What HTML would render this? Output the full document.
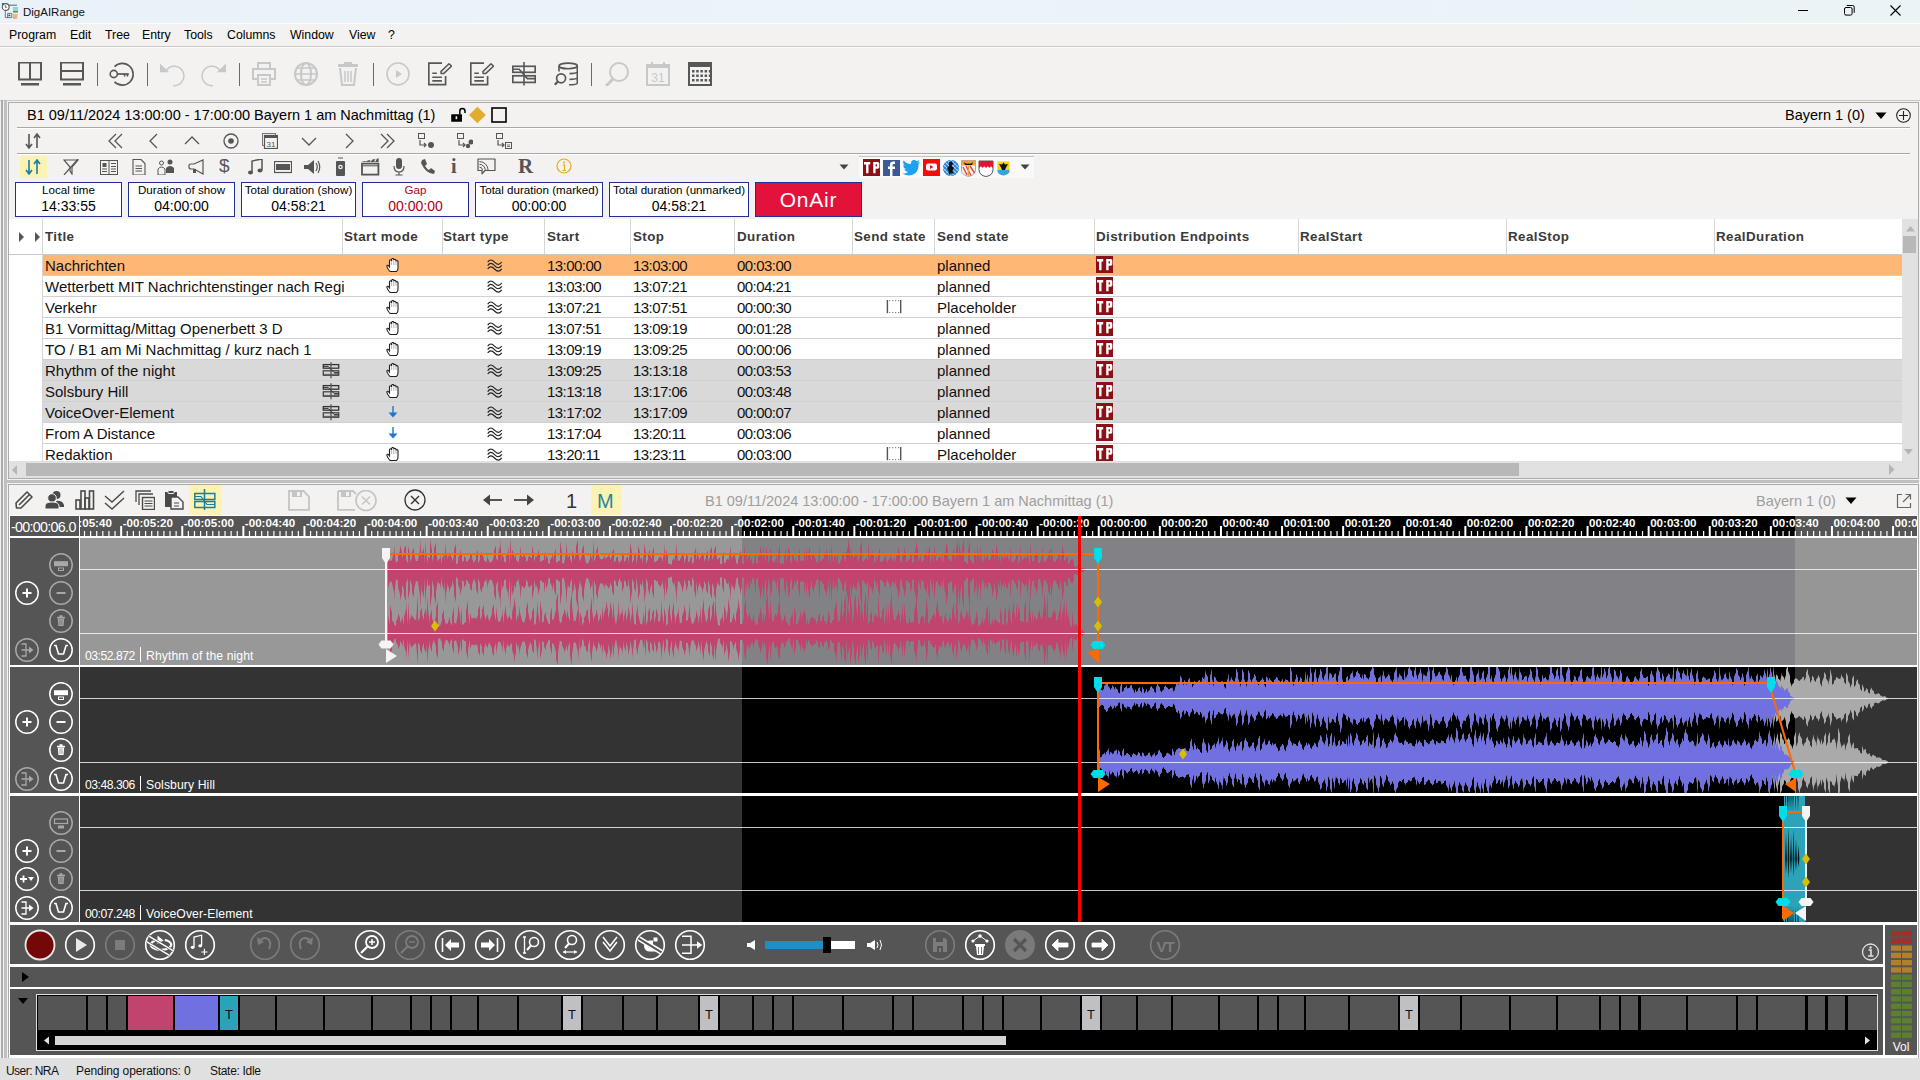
<!DOCTYPE html><html><head><meta charset="utf-8"><style>
html,body{margin:0;padding:0;}
body{width:1920px;height:1080px;position:relative;overflow:hidden;background:#f3f2f1;font-family:"Liberation Sans", sans-serif;}
.a{position:absolute;display:block;}
.t{position:absolute;white-space:nowrap;}
</style></head><body>
<div class="a" style="left:0px;top:0px;width:1920px;height:23px;background:linear-gradient(90deg,#eaf2f9 0%,#ebf3fb 50%,#eaf4f6 100%);"></div>
<div class="a" style="left:0px;top:23px;width:1920px;height:1px;background:#fdfdfd;"></div>
<svg class="a" style="left:0px;top:0px;" width="20" height="22" viewBox="0 0 20 22"><rect x="2" y="3" width="2" height="2" fill="#1a7a80"/><path d="M5.3 9 V17.6 H11.8 V13.4 H7.6 V17.6" fill="none" stroke="#666" stroke-width="0.9"/><circle cx="9.4" cy="15.4" r="0.9" fill="#333"/><path d="M7 5.2 H17" stroke="#555" stroke-width="0.9"/><circle cx="5.7" cy="7" r="3.4" fill="#fff" stroke="#555" stroke-width="1.1"/><path d="M5.3 5 V7.3 H7" fill="none" stroke="#555" stroke-width="0.8"/><rect x="13" y="7" width="5" height="4.2" fill="#8fd8d8"/><rect x="13" y="11.2" width="5" height="1.4" fill="#2a6a70"/><rect x="13" y="12.6" width="5" height="1.3" fill="#f6f0a0"/><rect x="13" y="13.9" width="4.5" height="3.6" fill="#f0b888"/><rect x="13" y="17.5" width="4" height="1" fill="#e08030"/></svg>
<div class="t" style="left:23px;top:6px;font-size:11.5px;line-height:13px;color:#111;font-weight:normal;">DigAIRange</div>
<svg class="a" style="left:1794px;top:4px;" width="20" height="14" viewBox="0 0 20 14"><line x1="4" y1="6.5" x2="14" y2="6.5" stroke="#000" stroke-width="1"/></svg>
<svg class="a" style="left:1840px;top:2px;" width="20" height="16" viewBox="0 0 20 16"><rect x="4.5" y="5.5" width="7.6" height="7.6" rx="1.5" fill="none" stroke="#000"/><path d="M6.8 3.5 H12.6 a1.6 1.6 0 0 1 1.6 1.6 V10.8" fill="none" stroke="#000"/></svg>
<svg class="a" style="left:1886px;top:2.5px;" width="20" height="16" viewBox="0 0 20 16"><path d="M4.5 2.5 L14.5 12.5 M14.5 2.5 L4.5 12.5" stroke="#000" stroke-width="1.1"/></svg>
<div class="a" style="left:0px;top:24px;width:1920px;height:22px;background:#f3f2f1;"></div>
<div class="a" style="left:0px;top:46px;width:1920px;height:1px;background:#c9c9c9;"></div>
<div class="a" style="left:0px;top:47px;width:1920px;height:1px;background:#fdfdfd;"></div>
<div class="t" style="left:9px;top:28px;font-size:12.3px;line-height:14px;color:#000;font-weight:normal;">Program</div>
<div class="t" style="left:70px;top:28px;font-size:12.3px;line-height:14px;color:#000;font-weight:normal;">Edit</div>
<div class="t" style="left:105px;top:28px;font-size:12.3px;line-height:14px;color:#000;font-weight:normal;">Tree</div>
<div class="t" style="left:142px;top:28px;font-size:12.3px;line-height:14px;color:#000;font-weight:normal;">Entry</div>
<div class="t" style="left:184px;top:28px;font-size:12.3px;line-height:14px;color:#000;font-weight:normal;">Tools</div>
<div class="t" style="left:227px;top:28px;font-size:12.3px;line-height:14px;color:#000;font-weight:normal;">Columns</div>
<div class="t" style="left:290px;top:28px;font-size:12.3px;line-height:14px;color:#000;font-weight:normal;">Window</div>
<div class="t" style="left:349px;top:28px;font-size:12.3px;line-height:14px;color:#000;font-weight:normal;">View</div>
<div class="t" style="left:388px;top:28px;font-size:12.3px;line-height:14px;color:#000;font-weight:normal;">?</div>
<svg class="a" style="left:18px;top:62px;" width="24" height="24" viewBox="0 0 24 24"><rect x="1" y="0.5" width="22" height="17" fill="none" stroke="#575757" stroke-width="2"/><line x1="12" y1="1" x2="12" y2="17" stroke="#575757" stroke-width="2"/><rect x="3" y="21" width="18" height="2.5" fill="#575757"/></svg>
<svg class="a" style="left:60px;top:62px;" width="24" height="24" viewBox="0 0 24 24"><rect x="1" y="0.5" width="22" height="17" fill="none" stroke="#575757" stroke-width="2"/><line x1="1" y1="9" x2="23" y2="9" stroke="#575757" stroke-width="2"/><rect x="3" y="21" width="18" height="2.5" fill="#575757"/></svg>
<div class="a" style="left:97px;top:63px;width:1px;height:23px;background:#6a6a6a;"></div>
<svg class="a" style="left:108px;top:60px;" width="28" height="28" viewBox="0 0 28 28"><path d="M6.5 6.6 A10.9 10.9 0 1 1 6.5 21.9" fill="none" stroke="#575757" stroke-width="1.6"/><circle cx="5.8" cy="14" r="3.6" fill="none" stroke="#575757" stroke-width="1.6"/><path d="M9.4 14 H20.8" stroke="#575757" stroke-width="1.7"/><rect x="15.8" y="14" width="1.6" height="2.5" fill="#575757"/><rect x="18.6" y="14" width="1.6" height="2.5" fill="#575757"/></svg>
<div class="a" style="left:147px;top:63px;width:1px;height:23px;background:#6a6a6a;"></div>
<svg class="a" style="left:158px;top:60px;" width="28" height="28" viewBox="0 0 28 28"><path d="M8.5 10 A9.7 9.7 0 1 1 15.2 25.6" fill="none" stroke="#c8c8c8" stroke-width="1.5"/><path d="M2 3.5 L2 12.2 L11.2 12.2 Z" fill="#c8c8c8"/></svg>
<svg class="a" style="left:200px;top:60px;" width="28" height="28" viewBox="0 0 28 28"><path d="M19.5 10 A9.7 9.7 0 1 0 12.8 25.6" fill="none" stroke="#c8c8c8" stroke-width="1.5"/><path d="M26 3.5 L26 12.2 L16.8 12.2 Z" fill="#c8c8c8"/></svg>
<div class="a" style="left:239px;top:63px;width:1px;height:23px;background:#6a6a6a;"></div>
<svg class="a" style="left:252px;top:62px;" width="24" height="24" viewBox="0 0 24 24"><rect x="6" y="1" width="12" height="6" fill="none" stroke="#c8c8c8" stroke-width="2"/><rect x="1" y="7" width="22" height="10" fill="none" stroke="#c8c8c8" stroke-width="2"/><rect x="6" y="13" width="12" height="10" fill="#f3f2f1" stroke="#c8c8c8" stroke-width="2"/><path d="M9 17 H15 M9 20 H15" stroke="#c8c8c8" stroke-width="1.5"/></svg>
<svg class="a" style="left:294px;top:62px;" width="24" height="24" viewBox="0 0 24 24"><circle cx="12" cy="12" r="11" fill="none" stroke="#c8c8c8" stroke-width="2"/><ellipse cx="12" cy="12" rx="5" ry="11" fill="none" stroke="#c8c8c8" stroke-width="2"/><path d="M1 12 H23 M3 6 H21 M3 18 H21" stroke="#c8c8c8" stroke-width="1.6"/></svg>
<svg class="a" style="left:336px;top:62px;" width="24" height="24" viewBox="0 0 24 24"><rect x="8" y="0" width="8" height="2" fill="#c8c8c8"/><rect x="2" y="2" width="20" height="3" fill="#c8c8c8"/><path d="M4 6 L6 23 H18 L20 6" fill="none" stroke="#c8c8c8" stroke-width="2"/><path d="M9 9 V20 M12 9 V20 M15 9 V20" stroke="#c8c8c8" stroke-width="1.5"/></svg>
<div class="a" style="left:373px;top:63px;width:1px;height:23px;background:#6a6a6a;"></div>
<svg class="a" style="left:386px;top:62px;" width="24" height="24" viewBox="0 0 24 24"><circle cx="12" cy="12" r="11" fill="none" stroke="#c8c8c8" stroke-width="1.6"/><path d="M10 8 L16 12 L10 16 Z" fill="#c8c8c8"/></svg>
<svg class="a" style="left:428px;top:62px;" width="24" height="24" viewBox="0 0 24 24"><path d="M14 1.2 H0.8 V22.6 H17.6 V14" fill="none" stroke="#575757" stroke-width="1.7"/><path d="M4.3 11.3 H8.9 M4.3 15.3 H13.9 M4.3 18.9 H13.9" stroke="#575757" stroke-width="1.6"/><path d="M13.1 11.4 L12.9 9.6 L21 1.8 L23.6 4.1 L15.6 11.6 Z" fill="none" stroke="#575757" stroke-width="1.5" stroke-linejoin="round"/></svg>
<svg class="a" style="left:470px;top:62px;" width="24" height="24" viewBox="0 0 24 24"><path d="M14 1.2 H0.8 V22.6 H17.6 V14" fill="none" stroke="#575757" stroke-width="1.7"/><path d="M4.3 11.3 H8.9 M4.3 15.3 H13.9 M4.3 18.9 H13.9" stroke="#575757" stroke-width="1.6"/><path d="M13.1 11.4 L12.9 9.6 L21 1.8 L23.6 4.1 L15.6 11.6 Z" fill="none" stroke="#575757" stroke-width="1.5" stroke-linejoin="round"/></svg>
<svg class="a" style="left:512px;top:62px;" width="24" height="24" viewBox="0 0 24 24"><rect x="0.8" y="4.3" width="22.4" height="6" fill="none" stroke="#575757" stroke-width="1.7"/><rect x="0.8" y="13.8" width="22.4" height="6.6" fill="none" stroke="#575757" stroke-width="1.7"/><line x1="12" y1="0" x2="12" y2="23.5" stroke="#575757" stroke-width="1.6"/><path d="M1 7.3 H7.2 L15.3 16.6 H23" fill="none" stroke="#575757" stroke-width="1.6"/></svg>
<svg class="a" style="left:554px;top:62px;" width="24" height="24" viewBox="0 0 24 24"><ellipse cx="14.2" cy="3.9" rx="9.2" ry="2.8" fill="none" stroke="#575757" stroke-width="1.6"/><path d="M5 3.9 V9.5 M23.3 3.9 V21 Q23.3 22.8 15 22.8 M23.3 9.8 Q23.3 11.4 15.5 11.6 M23.3 15.5 Q23.3 17.2 15.5 17.4" fill="none" stroke="#575757" stroke-width="1.6"/><circle cx="7.1" cy="16.3" r="4.5" fill="none" stroke="#575757" stroke-width="1.7"/><path d="M3.8 19.6 L0.8 22.8" stroke="#575757" stroke-width="2.2"/></svg>
<div class="a" style="left:591px;top:63px;width:1px;height:23px;background:#6a6a6a;"></div>
<svg class="a" style="left:605px;top:62px;" width="24" height="24" viewBox="0 0 24 24"><circle cx="14" cy="10" r="9" fill="none" stroke="#c8c8c8" stroke-width="2"/><path d="M8 17 L1 24" stroke="#c8c8c8" stroke-width="3"/></svg>
<svg class="a" style="left:646px;top:62px;" width="24" height="24" viewBox="0 0 24 24"><rect x="1" y="3" width="22" height="20" fill="none" stroke="#c8c8c8" stroke-width="2"/><rect x="1" y="3" width="22" height="3" fill="#c8c8c8"/><path d="M6 0 V4 M18 0 V4" stroke="#c8c8c8" stroke-width="2"/><text x="12" y="20" font-size="12" text-anchor="middle" fill="#c8c8c8" font-family="Liberation Sans">31</text></svg>
<svg class="a" style="left:688px;top:62px;" width="24" height="24" viewBox="0 0 24 24"><rect x="1" y="1" width="22" height="22" fill="none" stroke="#575757" stroke-width="2"/><rect x="1" y="1" width="22" height="4" fill="#575757"/><rect x="4.0" y="8.0" width="2.5" height="2.5" fill="#575757"/><rect x="4.0" y="12.5" width="2.5" height="2.5" fill="#575757"/><rect x="4.0" y="17.0" width="2.5" height="2.5" fill="#575757"/><rect x="8.2" y="8.0" width="2.5" height="2.5" fill="#575757"/><rect x="8.2" y="12.5" width="2.5" height="2.5" fill="#575757"/><rect x="8.2" y="17.0" width="2.5" height="2.5" fill="#575757"/><rect x="12.4" y="8.0" width="2.5" height="2.5" fill="#575757"/><rect x="12.4" y="12.5" width="2.5" height="2.5" fill="#575757"/><rect x="12.4" y="17.0" width="2.5" height="2.5" fill="#575757"/><rect x="16.6" y="8.0" width="2.5" height="2.5" fill="#575757"/><rect x="16.6" y="12.5" width="2.5" height="2.5" fill="#575757"/><rect x="16.6" y="17.0" width="2.5" height="2.5" fill="#575757"/><rect x="20.8" y="8.0" width="2.5" height="2.5" fill="#575757"/><rect x="20.8" y="12.5" width="2.5" height="2.5" fill="#575757"/><rect x="20.8" y="17.0" width="2.5" height="2.5" fill="#575757"/></svg>
<div class="a" style="left:0px;top:100px;width:1920px;height:1px;background:#c6c6c6;"></div>
<div class="a" style="left:1px;top:100px;width:2px;height:958px;background:#ababab;"></div>
<div class="a" style="left:4px;top:100px;width:3px;height:958px;background:#c0c0c0;"></div>
<div class="a" style="left:8px;top:102px;width:1911px;height:377px;background:#f3f2f1;border:1px solid #ababab;box-sizing:border-box;"></div>
<div class="t" style="left:27px;top:107px;font-size:14.5px;line-height:17px;color:#000;font-weight:normal;">B1 09/11/2024 13:00:00 - 17:00:00 Bayern 1 am Nachmittag (1)</div>
<svg class="a" style="left:450px;top:106px;" width="16" height="17" viewBox="0 0 16 17"><rect x="1.2" y="8.2" width="10.8" height="7.6" rx="0.6" fill="#000"/><rect x="5.6" y="10.2" width="1.6" height="3" fill="#f3f2f1"/><path d="M9.8 8.5 V5.2 a2.6 2.6 0 0 1 5.2 0 V7" fill="none" stroke="#000" stroke-width="1.5"/></svg>
<svg class="a" style="left:468px;top:106px;" width="19" height="19" viewBox="0 0 19 19"><path d="M9.4 0.8 L17.8 9 L9.4 17.2 L1 9 Z" fill="#e0ad2c"/></svg>
<svg class="a" style="left:491px;top:107px;" width="16" height="16" viewBox="0 0 16 16"><rect x="1" y="1" width="14" height="14" fill="none" stroke="#000" stroke-width="1.6"/></svg>
<div class="t" style="left:1785px;top:107px;font-size:14.5px;line-height:17px;color:#000;font-weight:normal;">Bayern 1 (0)</div>
<svg class="a" style="left:1875px;top:112px;" width="12" height="8" viewBox="0 0 12 8"><path d="M0.5 0.5 L11.5 0.5 L6 7 Z" fill="#000"/></svg>
<svg class="a" style="left:1896px;top:108px;" width="15" height="15" viewBox="0 0 15 15"><circle cx="7.5" cy="7.5" r="6.8" fill="none" stroke="#222" stroke-width="1.1"/><path d="M7.5 3 V12 M3 7.5 H12" stroke="#222" stroke-width="1.1"/></svg>
<div class="a" style="left:17px;top:127px;width:1893px;height:1px;background:#a8a8a8;"></div>
<div class="a" style="left:17px;top:128px;width:1893px;height:1px;background:#ffffff;"></div>
<svg class="a" style="left:25px;top:133px;" width="16" height="16" viewBox="0 0 16 16"><path d="M4 1 V14 M1 11 L4 15 L7 11" fill="none" stroke="#555" stroke-width="1.6"/><path d="M12 15 V2 M9 5 L12 1 L15 5" fill="none" stroke="#555" stroke-width="1.6"/></svg>
<svg class="a" style="left:107px;top:133px;" width="16" height="16" viewBox="0 0 16 16"><path d="M9 1 L2 8 L9 15 M15 1 L8 8 L15 15" fill="none" stroke="#555" stroke-width="1.3"/></svg>
<svg class="a" style="left:147px;top:133px;" width="16" height="16" viewBox="0 0 16 16"><path d="M10 1 L3 8 L10 15" fill="none" stroke="#555" stroke-width="1.3"/></svg>
<svg class="a" style="left:184px;top:133px;" width="16" height="16" viewBox="0 0 16 16"><path d="M1 11 L8 4 L15 11" fill="none" stroke="#555" stroke-width="1.3"/></svg>
<svg class="a" style="left:223px;top:133px;" width="16" height="16" viewBox="0 0 16 16"><circle cx="8" cy="8" r="7" fill="none" stroke="#555" stroke-width="1.3"/><circle cx="8" cy="8" r="2.8" fill="#555"/></svg>
<svg class="a" style="left:262px;top:133px;" width="16" height="16" viewBox="0 0 16 16"><rect x="0.5" y="0.5" width="13" height="12" fill="none" stroke="#777" stroke-width="1"/><rect x="2.5" y="2.5" width="13" height="13" fill="#f3f2f1" stroke="#555" stroke-width="1.2"/><rect x="2.5" y="2.5" width="13" height="2.5" fill="#555"/><text x="9" y="14" font-size="8" text-anchor="middle" fill="#555" font-family="Liberation Sans">31</text></svg>
<svg class="a" style="left:301px;top:133px;" width="16" height="16" viewBox="0 0 16 16"><path d="M1 5 L8 12 L15 5" fill="none" stroke="#555" stroke-width="1.3"/></svg>
<svg class="a" style="left:342px;top:133px;" width="16" height="16" viewBox="0 0 16 16"><path d="M4 1 L11 8 L4 15" fill="none" stroke="#555" stroke-width="1.3"/></svg>
<svg class="a" style="left:380px;top:133px;" width="16" height="16" viewBox="0 0 16 16"><path d="M1 1 L8 8 L1 15 M7 1 L14 8 L7 15" fill="none" stroke="#555" stroke-width="1.3"/></svg>
<svg class="a" style="left:418px;top:133px;" width="16" height="16" viewBox="0 0 16 16"><rect x="0.5" y="0.5" width="6" height="5" fill="none" stroke="#555"/><path d="M2 7 V12 H8 M6 10 L8 12 L6 14" fill="none" stroke="#555" stroke-width="1.2"/><circle cx="13" cy="12" r="3" fill="#555"/></svg>
<svg class="a" style="left:457px;top:133px;" width="16" height="16" viewBox="0 0 16 16"><rect x="0.5" y="0.5" width="6" height="5" fill="none" stroke="#555"/><path d="M2 7 V12 H8 M6 10 L8 12 L6 14" fill="none" stroke="#555" stroke-width="1.2"/><circle cx="14" cy="9" r="2.5" fill="#555"/><circle cx="11" cy="13" r="2.2" fill="#555"/></svg>
<svg class="a" style="left:496px;top:133px;" width="16" height="16" viewBox="0 0 16 16"><rect x="0.5" y="0.5" width="6" height="5" fill="none" stroke="#555"/><path d="M2 7 V12 H8 M6 10 L8 12 L6 14" fill="none" stroke="#555" stroke-width="1.2"/><rect x="9.5" y="9.5" width="6" height="6" fill="none" stroke="#555"/><path d="M11 12 H14 M11 13.5 H14" stroke="#555" stroke-width="0.8"/></svg>
<div class="a" style="left:17px;top:153px;width:1893px;height:1px;background:#a8a8a8;"></div>
<div class="a" style="left:17px;top:154px;width:1893px;height:1px;background:#ffffff;"></div>
<div class="a" style="left:20px;top:156px;width:27px;height:22px;background:#fbf2b4;"></div>
<svg class="a" style="left:25px;top:159px;" width="16" height="16" viewBox="0 0 16 16"><path d="M4 1 V14 M1 11 L4 15 L7 11" fill="none" stroke="#1b7f9c" stroke-width="1.6"/><path d="M12 15 V2 M9 5 L12 1 L15 5" fill="none" stroke="#1b7f9c" stroke-width="1.6"/></svg>
<svg class="a" style="left:63px;top:159px;" width="16" height="16" viewBox="0 0 16 16"><path d="M1 1 H15 L9 8 V15 L7 12 V8 Z" fill="none" stroke="#555" stroke-width="1.2"/><path d="M1 16 L15 0" stroke="#555" stroke-width="1.2"/></svg>
<svg class="a" style="left:100px;top:160px;" width="18" height="16" viewBox="0 0 18 16"><rect x="0.5" y="0.5" width="17" height="14" fill="none" stroke="#555"/><path d="M9 1 V14" stroke="#555"/><rect x="2.5" y="3" width="4" height="4" fill="#555"/><path d="M2 9 H7 M2 11.5 H7 M11 3.5 H16 M11 6.5 H16 M11 9 H16 M11 11.5 H16" stroke="#555" stroke-width="1"/></svg>
<svg class="a" style="left:132px;top:159px;" width="16" height="16" viewBox="0 0 16 16"><path d="M1 0.5 H9 L13 4.5 V16 H1 Z" fill="none" stroke="#555" stroke-width="1.1"/><path d="M3.5 7 H10 M3.5 9.5 H10 M3.5 12 H10" stroke="#555"/></svg>
<svg class="a" style="left:157px;top:159px;" width="18" height="16" viewBox="0 0 18 16"><circle cx="4.5" cy="4" r="2" fill="none" stroke="#555"/><path d="M1 16 V10 Q4.5 6 8 10 V16 Z" fill="none" stroke="#555"/><circle cx="13" cy="3" r="2.5" fill="#555"/><path d="M9 14 V9 Q13 5 17 9 V14 Z" fill="#555"/></svg>
<svg class="a" style="left:188px;top:159px;" width="16" height="16" viewBox="0 0 16 16"><path d="M15 1 V15 L6 10 H3 Q1 10 1 8 V7 Q1 5 3 5 H6 Z" fill="none" stroke="#555" stroke-width="1.2"/><rect x="5" y="10" width="3" height="4" fill="#555"/></svg>
<div class="t" style="left:219px;top:155px;font-size:19px;line-height:22px;color:#555;font-weight:normal;">$</div>
<svg class="a" style="left:247px;top:159px;" width="16" height="16" viewBox="0 0 16 16"><path d="M5 13 V2 L15 0 V11" fill="none" stroke="#555" stroke-width="1.5"/><ellipse cx="3.5" cy="13.5" rx="2.5" ry="2" fill="#555"/><ellipse cx="13" cy="11.5" rx="2.5" ry="2" fill="#555"/></svg>
<svg class="a" style="left:274px;top:161px;" width="18" height="16" viewBox="0 0 18 16"><rect x="0.5" y="0.5" width="17" height="11" fill="none" stroke="#555" stroke-width="1.2"/><rect x="2" y="3" width="14" height="6" fill="#555"/></svg>
<svg class="a" style="left:303px;top:159px;" width="18" height="16" viewBox="0 0 18 16"><path d="M1 6 H5 L11 1 V15 L5 10 H1 Z" fill="#555"/><path d="M13 4 Q15.5 8 13 12 M15 2 Q18.5 8 15 14" fill="none" stroke="#555" stroke-width="1.2"/></svg>
<svg class="a" style="left:335px;top:157px;" width="12" height="20" viewBox="0 0 12 20"><path d="M3 1 H8" stroke="#555"/><rect x="1" y="4" width="9" height="15" rx="1" fill="#555"/><circle cx="5.5" cy="10" r="2.3" fill="#f3f2f1"/><circle cx="5.5" cy="10" r="1" fill="#555"/></svg>
<svg class="a" style="left:361px;top:157px;" width="19" height="19" viewBox="0 0 19 19"><path d="M0.8 4.8 L17.6 1.2 V5 H0.8 Z" fill="#555"/><path d="M4 4.5 L6 2.3 L7.5 2 L5.5 4.5 Z M8.5 4.5 L10.5 1.6 L12 1.3 L10 4.5 Z M13 4.5 L15 0.9 L16.2 0.7 L14.5 4.5 Z" fill="#f3f2f1"/><rect x="1" y="6.6" width="16.4" height="11" fill="none" stroke="#555" stroke-width="1.8"/><path d="M1 8.8 H17.4" stroke="#555" stroke-width="1"/></svg>
<svg class="a" style="left:393px;top:158px;" width="12" height="18" viewBox="0 0 12 18"><rect x="3" y="0" width="6" height="11" rx="3" fill="#555"/><path d="M1 8 Q1 14 6 14 Q11 14 11 8 M6 14 V17 M2.5 17 H9.5" fill="none" stroke="#555" stroke-width="1.2"/></svg>
<svg class="a" style="left:420px;top:159px;" width="16" height="16" viewBox="0 0 16 16"><path d="M2 1 L5 0 L7 5 L5 7 Q7 10 9 11 L11 9 L15 12 L14 15 Q6 15 1 4 Z" fill="#555"/></svg>
<div class="t" style="left:451px;top:155px;font-size:20px;line-height:22px;color:#555;font-weight:bold;font-family:'Liberation Serif',serif;">i</div>
<svg class="a" style="left:477px;top:158px;" width="19" height="17" viewBox="0 0 19 17"><path d="M1 1 H18 V12.5 H8 L5 15.8 V12.5 H1 Z" fill="none" stroke="#555" stroke-width="1.2" stroke-linejoin="round"/><path d="M2.5 9.2 A3 3 0 0 1 5.5 12.2 M2.5 6.4 A5.8 5.8 0 0 1 8.3 12.2 M2.5 3.6 A8.6 8.6 0 0 1 11.1 12.2" fill="none" stroke="#555" stroke-width="1"/></svg>
<div class="t" style="left:518px;top:155px;font-size:21px;line-height:22px;color:#555;font-weight:bold;font-family:'Liberation Serif',serif;">R</div>
<svg class="a" style="left:556px;top:158px;" width="16" height="16" viewBox="0 0 16 16"><circle cx="8" cy="8" r="7" fill="none" stroke="#e8a820" stroke-width="1.2"/><circle cx="8" cy="4.5" r="1" fill="#e8a820"/><path d="M6.5 7 H8.5 V12.5 M6.5 12.5 H10" fill="none" stroke="#e8a820" stroke-width="1.2"/></svg>
<svg class="a" style="left:839px;top:164px;" width="10" height="6" viewBox="0 0 10 6"><path d="M0.5 0.5 H9.5 L5 5.5 Z" fill="#444"/></svg>
<div class="a" style="left:859px;top:156px;width:175px;height:22px;background:#f9f9f9;"></div>
<div class="a" style="left:859px;top:156px;width:175px;height:1px;background:#c4c4c4;"></div>
<svg class="a" style="left:863px;top:159px;" width="17" height="17" viewBox="0 0 17 17"><rect width="17" height="17" fill="#8c1116"/><path d="M1 3 H7.2 V5.5 H5.5 V14.2 H3.1 V5.5 H1 Z" fill="#fff"/><path d="M10.2 3 H15.2 L16.3 4.3 V8.6 L15.2 9.8 H12.6 V14.2 H10.2 Z M12.6 5.3 V7.6 H13.9 V5.3 Z" fill="#fff" fill-rule="evenodd"/></svg>
<svg class="a" style="left:883px;top:160px;" width="17" height="16" viewBox="0 0 17 16"><rect width="17" height="16" fill="#3b5998"/><path d="M9.5 16 V9 H12 V6.5 H9.5 V5 Q9.5 4 11 4 H12 V1.5 H10 Q7 1.5 7 4.5 V6.5 H5 V9 H7 V16 Z" fill="#fff"/></svg>
<svg class="a" style="left:902px;top:159px;" width="19" height="17" viewBox="0 0 19 17"><path d="M18 3 Q16.5 3.8 15.5 3.8 Q17 2.5 17.3 1 Q15.7 2 14.6 2 Q13 0.5 11 1 Q8.5 2 9 5 Q5 5 1.5 1.5 Q0.5 4 2.5 6.5 Q1.8 6.5 1 6 Q1.3 9 4 10 Q3 10.3 2.2 10 Q3 12.5 6 13 Q3.5 15 0.5 14.5 Q7 18.5 13 14.5 Q17 11 16.5 5 Q17.5 4.2 18 3 Z" fill="#1da1f2"/></svg>
<svg class="a" style="left:923px;top:159px;" width="17" height="17" viewBox="0 0 17 17"><rect width="17" height="17" fill="#f80a0a"/><rect x="3" y="4.5" width="11" height="7" rx="2" fill="#fff"/><path d="M7 6 L10.5 8 L7 10 Z" fill="#e01a1a"/></svg>
<svg class="a" style="left:942px;top:159px;" width="18" height="18" viewBox="0 0 18 18"><defs><clipPath id="bv"><circle cx="9" cy="9" r="8"/></clipPath></defs><g clip-path="url(#bv)"><rect width="18" height="18" fill="#e8f2fa"/><path d="M-10 0 L8 18" stroke="#2a86e0" stroke-width="1.6"/><path d="M8 0 L-10 18" stroke="#2a86e0" stroke-width="1.2"/><path d="M-6 0 L12 18" stroke="#2a86e0" stroke-width="1.6"/><path d="M12 0 L-6 18" stroke="#2a86e0" stroke-width="1.2"/><path d="M-2 0 L16 18" stroke="#2a86e0" stroke-width="1.6"/><path d="M16 0 L-2 18" stroke="#2a86e0" stroke-width="1.2"/><path d="M2 0 L20 18" stroke="#2a86e0" stroke-width="1.6"/><path d="M20 0 L2 18" stroke="#2a86e0" stroke-width="1.2"/><path d="M6 0 L24 18" stroke="#2a86e0" stroke-width="1.6"/><path d="M24 0 L6 18" stroke="#2a86e0" stroke-width="1.2"/><path d="M10 0 L28 18" stroke="#2a86e0" stroke-width="1.6"/><path d="M28 0 L10 18" stroke="#2a86e0" stroke-width="1.2"/><path d="M14 0 L32 18" stroke="#2a86e0" stroke-width="1.6"/><path d="M32 0 L14 18" stroke="#2a86e0" stroke-width="1.2"/><path d="M18 0 L36 18" stroke="#2a86e0" stroke-width="1.6"/><path d="M36 0 L18 18" stroke="#2a86e0" stroke-width="1.2"/></g><path d="M7 3 L10 2.5 L11 5 L9.5 7 L12 9 L10.5 12 L12 15 L9 14 L7 16 L6.5 12 L5 9 L7 7 Z" fill="#111"/></svg>
<svg class="a" style="left:961px;top:160px;" width="15" height="17" viewBox="0 0 15 17"><path d="M0.5 0.5 H14.5 V10 Q14.5 15 7.5 16.5 Q0.5 15 0.5 10 Z" fill="#f4f4f4" stroke="#777" stroke-width="0.6"/><path d="M0.5 0.5 H14.5 V5.5 H0.5 Z" fill="#e8a23c"/><path d="M3 2 Q5 4.5 7.5 3.5 Q10 4.5 12 2 L11 5 H4 Z" fill="#111"/><path d="M2 7 L6 15 M5 6 L10 15.5 M9 6 L13.5 13" stroke="#e24a3a" stroke-width="1.5"/><path d="M7.5 5.5 V16" stroke="#e8a23c" stroke-width="1.6"/></svg>
<svg class="a" style="left:978px;top:160px;" width="16" height="17" viewBox="0 0 16 17"><path d="M1 1 H15 V9.5 Q15 15.5 8 16.5 Q1 15.5 1 9.5 Z" fill="#fff" stroke="#444" stroke-width="0.9"/><path d="M1 1 H15 V8 L13 6.2 L11.5 8 L9.8 6.2 L8 8 L6.2 6.2 L4.5 8 L3 6.2 L1 8 Z" fill="#de1634"/></svg>
<svg class="a" style="left:997px;top:161px;" width="13" height="15" viewBox="0 0 13 15"><path d="M0.5 0.5 H12.5 V9.5 Q12.5 13.5 6.5 14.5 Q0.5 13.5 0.5 9.5 Z" fill="#f2d21a"/><path d="M0.5 9 H12.5 V9.5 Q12.5 13.5 6.5 14.5 Q0.5 13.5 0.5 9.5 Z" fill="#3aa0e0"/><path d="M6.5 1.5 L8 3.5 L11 3 L9 6.5 L8 9 H5 L4 6.5 L2 3 L5 3.5 Z" fill="#111"/></svg>
<svg class="a" style="left:1020px;top:164px;" width="10" height="6" viewBox="0 0 10 6"><path d="M0.5 0.5 H9.5 L5 5.5 Z" fill="#444"/></svg>
<div class="a" style="left:15px;top:182px;width:107px;height:35px;background:#ffffff;border:1px solid #1f2f96;box-sizing:border-box;"></div>
<div class="t" style="left:15px;top:183px;width:107px;text-align:center;font-size:11.6px;line-height:13px;color:#000;">Local time</div>
<div class="t" style="left:15px;top:198px;width:107px;text-align:center;font-size:14px;line-height:16px;color:#000;">14:33:55</div>
<div class="a" style="left:128px;top:182px;width:107px;height:35px;background:#ffffff;border:1px solid #1f2f96;box-sizing:border-box;"></div>
<div class="t" style="left:128px;top:183px;width:107px;text-align:center;font-size:11.6px;line-height:13px;color:#000;">Duration of show</div>
<div class="t" style="left:128px;top:198px;width:107px;text-align:center;font-size:14px;line-height:16px;color:#000;">04:00:00</div>
<div class="a" style="left:241px;top:182px;width:115px;height:35px;background:#ffffff;border:1px solid #1f2f96;box-sizing:border-box;"></div>
<div class="t" style="left:241px;top:183px;width:115px;text-align:center;font-size:11.6px;line-height:13px;color:#000;">Total duration (show)</div>
<div class="t" style="left:241px;top:198px;width:115px;text-align:center;font-size:14px;line-height:16px;color:#000;">04:58:21</div>
<div class="a" style="left:362px;top:182px;width:107px;height:35px;background:#ffffff;border:1px solid #1f2f96;box-sizing:border-box;"></div>
<div class="t" style="left:362px;top:183px;width:107px;text-align:center;font-size:11.6px;line-height:13px;color:#b00020;">Gap</div>
<div class="t" style="left:362px;top:198px;width:107px;text-align:center;font-size:14px;line-height:16px;color:#b00020;">00:00:00</div>
<div class="a" style="left:475px;top:182px;width:128px;height:35px;background:#ffffff;border:1px solid #1f2f96;box-sizing:border-box;"></div>
<div class="t" style="left:475px;top:183px;width:128px;text-align:center;font-size:11.6px;line-height:13px;color:#000;">Total duration (marked)</div>
<div class="t" style="left:475px;top:198px;width:128px;text-align:center;font-size:14px;line-height:16px;color:#000;">00:00:00</div>
<div class="a" style="left:609px;top:182px;width:140px;height:35px;background:#ffffff;border:1px solid #1f2f96;box-sizing:border-box;"></div>
<div class="t" style="left:609px;top:183px;width:140px;text-align:center;font-size:11.6px;line-height:13px;color:#000;">Total duration (unmarked)</div>
<div class="t" style="left:609px;top:198px;width:140px;text-align:center;font-size:14px;line-height:16px;color:#000;">04:58:21</div>
<div class="a" style="left:755px;top:182px;width:107px;height:35px;background:#e3123a;border:1px solid #1f2f96;box-sizing:border-box;"></div>
<div class="t" style="left:755px;top:187px;width:107px;text-align:center;font-size:21px;line-height:25px;color:#fff;letter-spacing:0.8px;">OnAir</div>
<div class="a" style="left:9px;top:219px;width:1893px;height:242px;background:#ffffff;"></div>
<div class="a" style="left:9px;top:254px;width:1893px;height:1px;background:#c8c8c8;"></div>
<div class="a" style="left:42px;top:219px;width:1px;height:35px;background:#d6d6d6;"></div>
<div class="a" style="left:342px;top:219px;width:1px;height:35px;background:#d6d6d6;"></div>
<div class="a" style="left:442px;top:219px;width:1px;height:35px;background:#d6d6d6;"></div>
<div class="a" style="left:544px;top:219px;width:1px;height:35px;background:#d6d6d6;"></div>
<div class="a" style="left:630px;top:219px;width:1px;height:35px;background:#d6d6d6;"></div>
<div class="a" style="left:734px;top:219px;width:1px;height:35px;background:#d6d6d6;"></div>
<div class="a" style="left:852px;top:219px;width:1px;height:35px;background:#d6d6d6;"></div>
<div class="a" style="left:934px;top:219px;width:1px;height:35px;background:#d6d6d6;"></div>
<div class="a" style="left:1094px;top:219px;width:1px;height:35px;background:#d6d6d6;"></div>
<div class="a" style="left:1298px;top:219px;width:1px;height:35px;background:#d6d6d6;"></div>
<div class="a" style="left:1506px;top:219px;width:1px;height:35px;background:#d6d6d6;"></div>
<div class="a" style="left:1714px;top:219px;width:1px;height:35px;background:#d6d6d6;"></div>
<div class="a" style="left:42px;top:254px;width:1px;height:207px;background:#d6d6d6;"></div>
<svg class="a" style="left:19px;top:232px;" width="6" height="10" viewBox="0 0 6 10"><path d="M0 0 L5 5 L0 10 Z" fill="#555"/></svg>
<svg class="a" style="left:35px;top:232px;" width="6" height="10" viewBox="0 0 6 10"><path d="M0 0 L5 5 L0 10 Z" fill="#555"/></svg>
<div class="t" style="left:45px;top:229px;font-size:13.4px;line-height:16px;color:#3a3a3a;font-weight:bold;letter-spacing:0.42px;">Title</div>
<div class="t" style="left:344px;top:229px;font-size:13.4px;line-height:16px;color:#3a3a3a;font-weight:bold;letter-spacing:0.42px;">Start mode</div>
<div class="t" style="left:443px;top:229px;font-size:13.4px;line-height:16px;color:#3a3a3a;font-weight:bold;letter-spacing:0.42px;">Start type</div>
<div class="t" style="left:547px;top:229px;font-size:13.4px;line-height:16px;color:#3a3a3a;font-weight:bold;letter-spacing:0.42px;">Start</div>
<div class="t" style="left:633px;top:229px;font-size:13.4px;line-height:16px;color:#3a3a3a;font-weight:bold;letter-spacing:0.42px;">Stop</div>
<div class="t" style="left:737px;top:229px;font-size:13.4px;line-height:16px;color:#3a3a3a;font-weight:bold;letter-spacing:0.42px;">Duration</div>
<div class="t" style="left:854px;top:229px;font-size:13.4px;line-height:16px;color:#3a3a3a;font-weight:bold;letter-spacing:0.42px;">Send state</div>
<div class="t" style="left:937px;top:229px;font-size:13.4px;line-height:16px;color:#3a3a3a;font-weight:bold;letter-spacing:0.42px;">Send state</div>
<div class="t" style="left:1096px;top:229px;font-size:13.4px;line-height:16px;color:#3a3a3a;font-weight:bold;letter-spacing:0.42px;">Distribution Endpoints</div>
<div class="t" style="left:1300px;top:229px;font-size:13.4px;line-height:16px;color:#3a3a3a;font-weight:bold;letter-spacing:0.42px;">RealStart</div>
<div class="t" style="left:1508px;top:229px;font-size:13.4px;line-height:16px;color:#3a3a3a;font-weight:bold;letter-spacing:0.42px;">RealStop</div>
<div class="t" style="left:1716px;top:229px;font-size:13.4px;line-height:16px;color:#3a3a3a;font-weight:bold;letter-spacing:0.42px;">RealDuration</div>
<div class="a" style="left:43px;top:255px;width:1859px;height:20px;background:#ffb775;"></div>
<div class="a" style="left:43px;top:275px;width:1859px;height:1px;background:#d0d0d0;"></div>
<div class="t" style="left:45px;top:257px;font-size:15px;line-height:17px;color:#111;font-weight:normal;">Nachrichten</div>
<svg class="a" style="left:386px;top:258px;" width="13" height="14" viewBox="0 0 13 14"><path d="M3.5 13 Q1 10 0.8 8 Q1 6.8 2.3 7.5 L3.5 9 V3 Q3.5 1.8 4.6 1.8 Q5.6 1.8 5.6 3 V1.6 Q5.6 0.5 6.7 0.5 Q7.8 0.5 7.8 1.6 V2.3 Q7.8 1.3 8.9 1.3 Q10 1.3 10 2.4 V3.6 Q10 2.6 11 2.6 Q12 2.6 12 3.7 V10 Q12 12.5 10.5 13.5 H4.5 Z" fill="#fff" stroke="#222" stroke-width="1.1"/><path d="M5.6 3 V7 M7.8 2.3 V7 M10 3.6 V7" stroke="#999" stroke-width="0.7"/></svg>
<svg class="a" style="left:487px;top:259px;" width="16" height="13" viewBox="0 0 16 13"><path d="M0.7 3.2 C 2.8 0.2, 4.8 0.4, 7.5 3.2 S 12.3 6.2, 14.8 3.0" fill="none" stroke="#222" stroke-width="1.15"/><path d="M0.7 6.6 C 2.8 3.6, 4.8 3.8, 7.5 6.6 S 12.3 9.6, 14.8 6.4" fill="none" stroke="#222" stroke-width="1.15"/><path d="M0.7 10.0 C 2.8 7.0, 4.8 7.2, 7.5 10.0 S 12.3 13.0, 14.8 9.8" fill="none" stroke="#222" stroke-width="1.15"/></svg>
<div class="t" style="left:547px;top:257px;font-size:15px;line-height:17px;color:#111;font-weight:normal;letter-spacing:-0.55px;">13:00:00</div>
<div class="t" style="left:633px;top:257px;font-size:15px;line-height:17px;color:#111;font-weight:normal;letter-spacing:-0.55px;">13:03:00</div>
<div class="t" style="left:737px;top:257px;font-size:15px;line-height:17px;color:#111;font-weight:normal;letter-spacing:-0.55px;">00:03:00</div>
<div class="t" style="left:937px;top:257px;font-size:15px;line-height:17px;color:#111;font-weight:normal;">planned</div>
<svg class="a" style="left:1096px;top:256px;" width="17" height="17" viewBox="0 0 17 17"><rect width="17" height="17" fill="#8c1116"/><path d="M1 3 H7.2 V5.5 H5.5 V14.2 H3.1 V5.5 H1 Z" fill="#fff"/><path d="M10.2 3 H15.2 L16.3 4.3 V8.6 L15.2 9.8 H12.6 V14.2 H10.2 Z M12.6 5.3 V7.6 H13.9 V5.3 Z" fill="#fff" fill-rule="evenodd"/></svg>
<div class="a" style="left:43px;top:276px;width:1859px;height:20px;background:#ffffff;"></div>
<div class="a" style="left:43px;top:296px;width:1859px;height:1px;background:#d0d0d0;"></div>
<div class="t" style="left:45px;top:278px;font-size:15px;line-height:17px;color:#111;font-weight:normal;">Wetterbett MIT Nachrichtenstinger nach Regi</div>
<svg class="a" style="left:386px;top:279px;" width="13" height="14" viewBox="0 0 13 14"><path d="M3.5 13 Q1 10 0.8 8 Q1 6.8 2.3 7.5 L3.5 9 V3 Q3.5 1.8 4.6 1.8 Q5.6 1.8 5.6 3 V1.6 Q5.6 0.5 6.7 0.5 Q7.8 0.5 7.8 1.6 V2.3 Q7.8 1.3 8.9 1.3 Q10 1.3 10 2.4 V3.6 Q10 2.6 11 2.6 Q12 2.6 12 3.7 V10 Q12 12.5 10.5 13.5 H4.5 Z" fill="#fff" stroke="#222" stroke-width="1.1"/><path d="M5.6 3 V7 M7.8 2.3 V7 M10 3.6 V7" stroke="#999" stroke-width="0.7"/></svg>
<svg class="a" style="left:487px;top:280px;" width="16" height="13" viewBox="0 0 16 13"><path d="M0.7 3.2 C 2.8 0.2, 4.8 0.4, 7.5 3.2 S 12.3 6.2, 14.8 3.0" fill="none" stroke="#222" stroke-width="1.15"/><path d="M0.7 6.6 C 2.8 3.6, 4.8 3.8, 7.5 6.6 S 12.3 9.6, 14.8 6.4" fill="none" stroke="#222" stroke-width="1.15"/><path d="M0.7 10.0 C 2.8 7.0, 4.8 7.2, 7.5 10.0 S 12.3 13.0, 14.8 9.8" fill="none" stroke="#222" stroke-width="1.15"/></svg>
<div class="t" style="left:547px;top:278px;font-size:15px;line-height:17px;color:#111;font-weight:normal;letter-spacing:-0.55px;">13:03:00</div>
<div class="t" style="left:633px;top:278px;font-size:15px;line-height:17px;color:#111;font-weight:normal;letter-spacing:-0.55px;">13:07:21</div>
<div class="t" style="left:737px;top:278px;font-size:15px;line-height:17px;color:#111;font-weight:normal;letter-spacing:-0.55px;">00:04:21</div>
<div class="t" style="left:937px;top:278px;font-size:15px;line-height:17px;color:#111;font-weight:normal;">planned</div>
<svg class="a" style="left:1096px;top:277px;" width="17" height="17" viewBox="0 0 17 17"><rect width="17" height="17" fill="#8c1116"/><path d="M1 3 H7.2 V5.5 H5.5 V14.2 H3.1 V5.5 H1 Z" fill="#fff"/><path d="M10.2 3 H15.2 L16.3 4.3 V8.6 L15.2 9.8 H12.6 V14.2 H10.2 Z M12.6 5.3 V7.6 H13.9 V5.3 Z" fill="#fff" fill-rule="evenodd"/></svg>
<div class="a" style="left:43px;top:297px;width:1859px;height:20px;background:#ffffff;"></div>
<div class="a" style="left:43px;top:317px;width:1859px;height:1px;background:#d0d0d0;"></div>
<div class="t" style="left:45px;top:299px;font-size:15px;line-height:17px;color:#111;font-weight:normal;">Verkehr</div>
<svg class="a" style="left:386px;top:300px;" width="13" height="14" viewBox="0 0 13 14"><path d="M3.5 13 Q1 10 0.8 8 Q1 6.8 2.3 7.5 L3.5 9 V3 Q3.5 1.8 4.6 1.8 Q5.6 1.8 5.6 3 V1.6 Q5.6 0.5 6.7 0.5 Q7.8 0.5 7.8 1.6 V2.3 Q7.8 1.3 8.9 1.3 Q10 1.3 10 2.4 V3.6 Q10 2.6 11 2.6 Q12 2.6 12 3.7 V10 Q12 12.5 10.5 13.5 H4.5 Z" fill="#fff" stroke="#222" stroke-width="1.1"/><path d="M5.6 3 V7 M7.8 2.3 V7 M10 3.6 V7" stroke="#999" stroke-width="0.7"/></svg>
<svg class="a" style="left:487px;top:301px;" width="16" height="13" viewBox="0 0 16 13"><path d="M0.7 3.2 C 2.8 0.2, 4.8 0.4, 7.5 3.2 S 12.3 6.2, 14.8 3.0" fill="none" stroke="#222" stroke-width="1.15"/><path d="M0.7 6.6 C 2.8 3.6, 4.8 3.8, 7.5 6.6 S 12.3 9.6, 14.8 6.4" fill="none" stroke="#222" stroke-width="1.15"/><path d="M0.7 10.0 C 2.8 7.0, 4.8 7.2, 7.5 10.0 S 12.3 13.0, 14.8 9.8" fill="none" stroke="#222" stroke-width="1.15"/></svg>
<div class="t" style="left:547px;top:299px;font-size:15px;line-height:17px;color:#111;font-weight:normal;letter-spacing:-0.55px;">13:07:21</div>
<div class="t" style="left:633px;top:299px;font-size:15px;line-height:17px;color:#111;font-weight:normal;letter-spacing:-0.55px;">13:07:51</div>
<div class="t" style="left:737px;top:299px;font-size:15px;line-height:17px;color:#111;font-weight:normal;letter-spacing:-0.55px;">00:00:30</div>
<svg class="a" style="left:886px;top:299px;" width="16" height="15" viewBox="0 0 16 15"><rect x="0.7" y="1" width="1.4" height="13.2" fill="#555"/><rect x="14" y="1" width="1.4" height="13.2" fill="#555"/><rect x="3.2" y="1.2" width="1" height="1" fill="#555"/><rect x="3.2" y="13.1" width="1" height="1" fill="#555"/><rect x="6.2" y="1.2" width="1" height="1" fill="#555"/><rect x="6.2" y="13.1" width="1" height="1" fill="#555"/><rect x="9.2" y="1.2" width="1" height="1" fill="#555"/><rect x="9.2" y="13.1" width="1" height="1" fill="#555"/><rect x="12.2" y="1.2" width="1" height="1" fill="#555"/><rect x="12.2" y="13.1" width="1" height="1" fill="#555"/></svg>
<div class="t" style="left:937px;top:299px;font-size:15px;line-height:17px;color:#111;font-weight:normal;">Placeholder</div>
<svg class="a" style="left:1096px;top:298px;" width="17" height="17" viewBox="0 0 17 17"><rect width="17" height="17" fill="#8c1116"/><path d="M1 3 H7.2 V5.5 H5.5 V14.2 H3.1 V5.5 H1 Z" fill="#fff"/><path d="M10.2 3 H15.2 L16.3 4.3 V8.6 L15.2 9.8 H12.6 V14.2 H10.2 Z M12.6 5.3 V7.6 H13.9 V5.3 Z" fill="#fff" fill-rule="evenodd"/></svg>
<div class="a" style="left:43px;top:318px;width:1859px;height:20px;background:#ffffff;"></div>
<div class="a" style="left:43px;top:338px;width:1859px;height:1px;background:#d0d0d0;"></div>
<div class="t" style="left:45px;top:320px;font-size:15px;line-height:17px;color:#111;font-weight:normal;">B1 Vormittag/Mittag Openerbett 3 D</div>
<svg class="a" style="left:386px;top:321px;" width="13" height="14" viewBox="0 0 13 14"><path d="M3.5 13 Q1 10 0.8 8 Q1 6.8 2.3 7.5 L3.5 9 V3 Q3.5 1.8 4.6 1.8 Q5.6 1.8 5.6 3 V1.6 Q5.6 0.5 6.7 0.5 Q7.8 0.5 7.8 1.6 V2.3 Q7.8 1.3 8.9 1.3 Q10 1.3 10 2.4 V3.6 Q10 2.6 11 2.6 Q12 2.6 12 3.7 V10 Q12 12.5 10.5 13.5 H4.5 Z" fill="#fff" stroke="#222" stroke-width="1.1"/><path d="M5.6 3 V7 M7.8 2.3 V7 M10 3.6 V7" stroke="#999" stroke-width="0.7"/></svg>
<svg class="a" style="left:487px;top:322px;" width="16" height="13" viewBox="0 0 16 13"><path d="M0.7 3.2 C 2.8 0.2, 4.8 0.4, 7.5 3.2 S 12.3 6.2, 14.8 3.0" fill="none" stroke="#222" stroke-width="1.15"/><path d="M0.7 6.6 C 2.8 3.6, 4.8 3.8, 7.5 6.6 S 12.3 9.6, 14.8 6.4" fill="none" stroke="#222" stroke-width="1.15"/><path d="M0.7 10.0 C 2.8 7.0, 4.8 7.2, 7.5 10.0 S 12.3 13.0, 14.8 9.8" fill="none" stroke="#222" stroke-width="1.15"/></svg>
<div class="t" style="left:547px;top:320px;font-size:15px;line-height:17px;color:#111;font-weight:normal;letter-spacing:-0.55px;">13:07:51</div>
<div class="t" style="left:633px;top:320px;font-size:15px;line-height:17px;color:#111;font-weight:normal;letter-spacing:-0.55px;">13:09:19</div>
<div class="t" style="left:737px;top:320px;font-size:15px;line-height:17px;color:#111;font-weight:normal;letter-spacing:-0.55px;">00:01:28</div>
<div class="t" style="left:937px;top:320px;font-size:15px;line-height:17px;color:#111;font-weight:normal;">planned</div>
<svg class="a" style="left:1096px;top:319px;" width="17" height="17" viewBox="0 0 17 17"><rect width="17" height="17" fill="#8c1116"/><path d="M1 3 H7.2 V5.5 H5.5 V14.2 H3.1 V5.5 H1 Z" fill="#fff"/><path d="M10.2 3 H15.2 L16.3 4.3 V8.6 L15.2 9.8 H12.6 V14.2 H10.2 Z M12.6 5.3 V7.6 H13.9 V5.3 Z" fill="#fff" fill-rule="evenodd"/></svg>
<div class="a" style="left:43px;top:339px;width:1859px;height:20px;background:#ffffff;"></div>
<div class="a" style="left:43px;top:359px;width:1859px;height:1px;background:#d0d0d0;"></div>
<div class="t" style="left:45px;top:341px;font-size:15px;line-height:17px;color:#111;font-weight:normal;">TO / B1 am Mi Nachmittag / kurz nach 1</div>
<svg class="a" style="left:386px;top:342px;" width="13" height="14" viewBox="0 0 13 14"><path d="M3.5 13 Q1 10 0.8 8 Q1 6.8 2.3 7.5 L3.5 9 V3 Q3.5 1.8 4.6 1.8 Q5.6 1.8 5.6 3 V1.6 Q5.6 0.5 6.7 0.5 Q7.8 0.5 7.8 1.6 V2.3 Q7.8 1.3 8.9 1.3 Q10 1.3 10 2.4 V3.6 Q10 2.6 11 2.6 Q12 2.6 12 3.7 V10 Q12 12.5 10.5 13.5 H4.5 Z" fill="#fff" stroke="#222" stroke-width="1.1"/><path d="M5.6 3 V7 M7.8 2.3 V7 M10 3.6 V7" stroke="#999" stroke-width="0.7"/></svg>
<svg class="a" style="left:487px;top:343px;" width="16" height="13" viewBox="0 0 16 13"><path d="M0.7 3.2 C 2.8 0.2, 4.8 0.4, 7.5 3.2 S 12.3 6.2, 14.8 3.0" fill="none" stroke="#222" stroke-width="1.15"/><path d="M0.7 6.6 C 2.8 3.6, 4.8 3.8, 7.5 6.6 S 12.3 9.6, 14.8 6.4" fill="none" stroke="#222" stroke-width="1.15"/><path d="M0.7 10.0 C 2.8 7.0, 4.8 7.2, 7.5 10.0 S 12.3 13.0, 14.8 9.8" fill="none" stroke="#222" stroke-width="1.15"/></svg>
<div class="t" style="left:547px;top:341px;font-size:15px;line-height:17px;color:#111;font-weight:normal;letter-spacing:-0.55px;">13:09:19</div>
<div class="t" style="left:633px;top:341px;font-size:15px;line-height:17px;color:#111;font-weight:normal;letter-spacing:-0.55px;">13:09:25</div>
<div class="t" style="left:737px;top:341px;font-size:15px;line-height:17px;color:#111;font-weight:normal;letter-spacing:-0.55px;">00:00:06</div>
<div class="t" style="left:937px;top:341px;font-size:15px;line-height:17px;color:#111;font-weight:normal;">planned</div>
<svg class="a" style="left:1096px;top:340px;" width="17" height="17" viewBox="0 0 17 17"><rect width="17" height="17" fill="#8c1116"/><path d="M1 3 H7.2 V5.5 H5.5 V14.2 H3.1 V5.5 H1 Z" fill="#fff"/><path d="M10.2 3 H15.2 L16.3 4.3 V8.6 L15.2 9.8 H12.6 V14.2 H10.2 Z M12.6 5.3 V7.6 H13.9 V5.3 Z" fill="#fff" fill-rule="evenodd"/></svg>
<div class="a" style="left:43px;top:360px;width:1859px;height:20px;background:#d9d9d9;"></div>
<div class="a" style="left:43px;top:380px;width:1859px;height:1px;background:#d0d0d0;"></div>
<div class="t" style="left:45px;top:362px;font-size:15px;line-height:17px;color:#111;font-weight:normal;">Rhythm of the night</div>
<svg class="a" style="left:322px;top:362px;" width="18" height="17" viewBox="0 0 18 17"><rect x="12" y="10.5" width="5" height="3" fill="#888"/><rect x="1.5" y="11.8" width="15.5" height="1.6" fill="#888"/><rect x="1.3" y="2.6" width="15.4" height="3.6" fill="none" stroke="#333" stroke-width="1.3"/><rect x="1.3" y="8.8" width="15.4" height="4.4" fill="none" stroke="#444" stroke-width="1.3"/><path d="M9 0.3 V16.2" stroke="#555" stroke-width="1.3"/><path d="M1.5 4.4 H6.2 L12.3 10.6 H16.5" fill="none" stroke="#333" stroke-width="1"/></svg>
<svg class="a" style="left:386px;top:363px;" width="13" height="14" viewBox="0 0 13 14"><path d="M3.5 13 Q1 10 0.8 8 Q1 6.8 2.3 7.5 L3.5 9 V3 Q3.5 1.8 4.6 1.8 Q5.6 1.8 5.6 3 V1.6 Q5.6 0.5 6.7 0.5 Q7.8 0.5 7.8 1.6 V2.3 Q7.8 1.3 8.9 1.3 Q10 1.3 10 2.4 V3.6 Q10 2.6 11 2.6 Q12 2.6 12 3.7 V10 Q12 12.5 10.5 13.5 H4.5 Z" fill="#fff" stroke="#222" stroke-width="1.1"/><path d="M5.6 3 V7 M7.8 2.3 V7 M10 3.6 V7" stroke="#999" stroke-width="0.7"/></svg>
<svg class="a" style="left:487px;top:364px;" width="16" height="13" viewBox="0 0 16 13"><path d="M0.7 3.2 C 2.8 0.2, 4.8 0.4, 7.5 3.2 S 12.3 6.2, 14.8 3.0" fill="none" stroke="#222" stroke-width="1.15"/><path d="M0.7 6.6 C 2.8 3.6, 4.8 3.8, 7.5 6.6 S 12.3 9.6, 14.8 6.4" fill="none" stroke="#222" stroke-width="1.15"/><path d="M0.7 10.0 C 2.8 7.0, 4.8 7.2, 7.5 10.0 S 12.3 13.0, 14.8 9.8" fill="none" stroke="#222" stroke-width="1.15"/></svg>
<div class="t" style="left:547px;top:362px;font-size:15px;line-height:17px;color:#111;font-weight:normal;letter-spacing:-0.55px;">13:09:25</div>
<div class="t" style="left:633px;top:362px;font-size:15px;line-height:17px;color:#111;font-weight:normal;letter-spacing:-0.55px;">13:13:18</div>
<div class="t" style="left:737px;top:362px;font-size:15px;line-height:17px;color:#111;font-weight:normal;letter-spacing:-0.55px;">00:03:53</div>
<div class="t" style="left:937px;top:362px;font-size:15px;line-height:17px;color:#111;font-weight:normal;">planned</div>
<svg class="a" style="left:1096px;top:361px;" width="17" height="17" viewBox="0 0 17 17"><rect width="17" height="17" fill="#8c1116"/><path d="M1 3 H7.2 V5.5 H5.5 V14.2 H3.1 V5.5 H1 Z" fill="#fff"/><path d="M10.2 3 H15.2 L16.3 4.3 V8.6 L15.2 9.8 H12.6 V14.2 H10.2 Z M12.6 5.3 V7.6 H13.9 V5.3 Z" fill="#fff" fill-rule="evenodd"/></svg>
<div class="a" style="left:43px;top:381px;width:1859px;height:20px;background:#d9d9d9;"></div>
<div class="a" style="left:43px;top:401px;width:1859px;height:1px;background:#d0d0d0;"></div>
<div class="t" style="left:45px;top:383px;font-size:15px;line-height:17px;color:#111;font-weight:normal;">Solsbury Hill</div>
<svg class="a" style="left:322px;top:383px;" width="18" height="17" viewBox="0 0 18 17"><rect x="12" y="10.5" width="5" height="3" fill="#888"/><rect x="1.5" y="11.8" width="15.5" height="1.6" fill="#888"/><rect x="1.3" y="2.6" width="15.4" height="3.6" fill="none" stroke="#333" stroke-width="1.3"/><rect x="1.3" y="8.8" width="15.4" height="4.4" fill="none" stroke="#444" stroke-width="1.3"/><path d="M9 0.3 V16.2" stroke="#555" stroke-width="1.3"/><path d="M1.5 4.4 H6.2 L12.3 10.6 H16.5" fill="none" stroke="#333" stroke-width="1"/></svg>
<svg class="a" style="left:386px;top:384px;" width="13" height="14" viewBox="0 0 13 14"><path d="M3.5 13 Q1 10 0.8 8 Q1 6.8 2.3 7.5 L3.5 9 V3 Q3.5 1.8 4.6 1.8 Q5.6 1.8 5.6 3 V1.6 Q5.6 0.5 6.7 0.5 Q7.8 0.5 7.8 1.6 V2.3 Q7.8 1.3 8.9 1.3 Q10 1.3 10 2.4 V3.6 Q10 2.6 11 2.6 Q12 2.6 12 3.7 V10 Q12 12.5 10.5 13.5 H4.5 Z" fill="#fff" stroke="#222" stroke-width="1.1"/><path d="M5.6 3 V7 M7.8 2.3 V7 M10 3.6 V7" stroke="#999" stroke-width="0.7"/></svg>
<svg class="a" style="left:487px;top:385px;" width="16" height="13" viewBox="0 0 16 13"><path d="M0.7 3.2 C 2.8 0.2, 4.8 0.4, 7.5 3.2 S 12.3 6.2, 14.8 3.0" fill="none" stroke="#222" stroke-width="1.15"/><path d="M0.7 6.6 C 2.8 3.6, 4.8 3.8, 7.5 6.6 S 12.3 9.6, 14.8 6.4" fill="none" stroke="#222" stroke-width="1.15"/><path d="M0.7 10.0 C 2.8 7.0, 4.8 7.2, 7.5 10.0 S 12.3 13.0, 14.8 9.8" fill="none" stroke="#222" stroke-width="1.15"/></svg>
<div class="t" style="left:547px;top:383px;font-size:15px;line-height:17px;color:#111;font-weight:normal;letter-spacing:-0.55px;">13:13:18</div>
<div class="t" style="left:633px;top:383px;font-size:15px;line-height:17px;color:#111;font-weight:normal;letter-spacing:-0.55px;">13:17:06</div>
<div class="t" style="left:737px;top:383px;font-size:15px;line-height:17px;color:#111;font-weight:normal;letter-spacing:-0.55px;">00:03:48</div>
<div class="t" style="left:937px;top:383px;font-size:15px;line-height:17px;color:#111;font-weight:normal;">planned</div>
<svg class="a" style="left:1096px;top:382px;" width="17" height="17" viewBox="0 0 17 17"><rect width="17" height="17" fill="#8c1116"/><path d="M1 3 H7.2 V5.5 H5.5 V14.2 H3.1 V5.5 H1 Z" fill="#fff"/><path d="M10.2 3 H15.2 L16.3 4.3 V8.6 L15.2 9.8 H12.6 V14.2 H10.2 Z M12.6 5.3 V7.6 H13.9 V5.3 Z" fill="#fff" fill-rule="evenodd"/></svg>
<div class="a" style="left:43px;top:402px;width:1859px;height:20px;background:#d9d9d9;"></div>
<div class="a" style="left:43px;top:422px;width:1859px;height:1px;background:#d0d0d0;"></div>
<div class="t" style="left:45px;top:404px;font-size:15px;line-height:17px;color:#111;font-weight:normal;">VoiceOver-Element</div>
<svg class="a" style="left:322px;top:404px;" width="18" height="17" viewBox="0 0 18 17"><rect x="12" y="10.5" width="5" height="3" fill="#888"/><rect x="1.5" y="11.8" width="15.5" height="1.6" fill="#888"/><rect x="1.3" y="2.6" width="15.4" height="3.6" fill="none" stroke="#333" stroke-width="1.3"/><rect x="1.3" y="8.8" width="15.4" height="4.4" fill="none" stroke="#444" stroke-width="1.3"/><path d="M9 0.3 V16.2" stroke="#555" stroke-width="1.3"/><path d="M1.5 4.4 H6.2 L12.3 10.6 H16.5" fill="none" stroke="#333" stroke-width="1"/></svg>
<svg class="a" style="left:388px;top:406px;" width="10" height="12" viewBox="0 0 10 12"><path d="M5 0 V10" stroke="#1a78d2" stroke-width="1.4"/><path d="M0.5 6.5 L5 11.5 L9.5 6.5 Z" fill="#1a78d2"/></svg>
<svg class="a" style="left:487px;top:406px;" width="16" height="13" viewBox="0 0 16 13"><path d="M0.7 3.2 C 2.8 0.2, 4.8 0.4, 7.5 3.2 S 12.3 6.2, 14.8 3.0" fill="none" stroke="#222" stroke-width="1.15"/><path d="M0.7 6.6 C 2.8 3.6, 4.8 3.8, 7.5 6.6 S 12.3 9.6, 14.8 6.4" fill="none" stroke="#222" stroke-width="1.15"/><path d="M0.7 10.0 C 2.8 7.0, 4.8 7.2, 7.5 10.0 S 12.3 13.0, 14.8 9.8" fill="none" stroke="#222" stroke-width="1.15"/></svg>
<div class="t" style="left:547px;top:404px;font-size:15px;line-height:17px;color:#111;font-weight:normal;letter-spacing:-0.55px;">13:17:02</div>
<div class="t" style="left:633px;top:404px;font-size:15px;line-height:17px;color:#111;font-weight:normal;letter-spacing:-0.55px;">13:17:09</div>
<div class="t" style="left:737px;top:404px;font-size:15px;line-height:17px;color:#111;font-weight:normal;letter-spacing:-0.55px;">00:00:07</div>
<div class="t" style="left:937px;top:404px;font-size:15px;line-height:17px;color:#111;font-weight:normal;">planned</div>
<svg class="a" style="left:1096px;top:403px;" width="17" height="17" viewBox="0 0 17 17"><rect width="17" height="17" fill="#8c1116"/><path d="M1 3 H7.2 V5.5 H5.5 V14.2 H3.1 V5.5 H1 Z" fill="#fff"/><path d="M10.2 3 H15.2 L16.3 4.3 V8.6 L15.2 9.8 H12.6 V14.2 H10.2 Z M12.6 5.3 V7.6 H13.9 V5.3 Z" fill="#fff" fill-rule="evenodd"/></svg>
<div class="a" style="left:43px;top:423px;width:1859px;height:20px;background:#ffffff;"></div>
<div class="a" style="left:43px;top:443px;width:1859px;height:1px;background:#d0d0d0;"></div>
<div class="t" style="left:45px;top:425px;font-size:15px;line-height:17px;color:#111;font-weight:normal;">From A Distance</div>
<svg class="a" style="left:388px;top:427px;" width="10" height="12" viewBox="0 0 10 12"><path d="M5 0 V10" stroke="#1a78d2" stroke-width="1.4"/><path d="M0.5 6.5 L5 11.5 L9.5 6.5 Z" fill="#1a78d2"/></svg>
<svg class="a" style="left:487px;top:427px;" width="16" height="13" viewBox="0 0 16 13"><path d="M0.7 3.2 C 2.8 0.2, 4.8 0.4, 7.5 3.2 S 12.3 6.2, 14.8 3.0" fill="none" stroke="#222" stroke-width="1.15"/><path d="M0.7 6.6 C 2.8 3.6, 4.8 3.8, 7.5 6.6 S 12.3 9.6, 14.8 6.4" fill="none" stroke="#222" stroke-width="1.15"/><path d="M0.7 10.0 C 2.8 7.0, 4.8 7.2, 7.5 10.0 S 12.3 13.0, 14.8 9.8" fill="none" stroke="#222" stroke-width="1.15"/></svg>
<div class="t" style="left:547px;top:425px;font-size:15px;line-height:17px;color:#111;font-weight:normal;letter-spacing:-0.55px;">13:17:04</div>
<div class="t" style="left:633px;top:425px;font-size:15px;line-height:17px;color:#111;font-weight:normal;letter-spacing:-0.55px;">13:20:11</div>
<div class="t" style="left:737px;top:425px;font-size:15px;line-height:17px;color:#111;font-weight:normal;letter-spacing:-0.55px;">00:03:06</div>
<div class="t" style="left:937px;top:425px;font-size:15px;line-height:17px;color:#111;font-weight:normal;">planned</div>
<svg class="a" style="left:1096px;top:424px;" width="17" height="17" viewBox="0 0 17 17"><rect width="17" height="17" fill="#8c1116"/><path d="M1 3 H7.2 V5.5 H5.5 V14.2 H3.1 V5.5 H1 Z" fill="#fff"/><path d="M10.2 3 H15.2 L16.3 4.3 V8.6 L15.2 9.8 H12.6 V14.2 H10.2 Z M12.6 5.3 V7.6 H13.9 V5.3 Z" fill="#fff" fill-rule="evenodd"/></svg>
<div class="a" style="left:43px;top:444px;width:1859px;height:20px;background:#ffffff;"></div>
<div class="t" style="left:45px;top:446px;font-size:15px;line-height:17px;color:#111;font-weight:normal;">Redaktion</div>
<svg class="a" style="left:386px;top:447px;" width="13" height="14" viewBox="0 0 13 14"><path d="M3.5 13 Q1 10 0.8 8 Q1 6.8 2.3 7.5 L3.5 9 V3 Q3.5 1.8 4.6 1.8 Q5.6 1.8 5.6 3 V1.6 Q5.6 0.5 6.7 0.5 Q7.8 0.5 7.8 1.6 V2.3 Q7.8 1.3 8.9 1.3 Q10 1.3 10 2.4 V3.6 Q10 2.6 11 2.6 Q12 2.6 12 3.7 V10 Q12 12.5 10.5 13.5 H4.5 Z" fill="#fff" stroke="#222" stroke-width="1.1"/><path d="M5.6 3 V7 M7.8 2.3 V7 M10 3.6 V7" stroke="#999" stroke-width="0.7"/></svg>
<svg class="a" style="left:487px;top:448px;" width="16" height="13" viewBox="0 0 16 13"><path d="M0.7 3.2 C 2.8 0.2, 4.8 0.4, 7.5 3.2 S 12.3 6.2, 14.8 3.0" fill="none" stroke="#222" stroke-width="1.15"/><path d="M0.7 6.6 C 2.8 3.6, 4.8 3.8, 7.5 6.6 S 12.3 9.6, 14.8 6.4" fill="none" stroke="#222" stroke-width="1.15"/><path d="M0.7 10.0 C 2.8 7.0, 4.8 7.2, 7.5 10.0 S 12.3 13.0, 14.8 9.8" fill="none" stroke="#222" stroke-width="1.15"/></svg>
<div class="t" style="left:547px;top:446px;font-size:15px;line-height:17px;color:#111;font-weight:normal;letter-spacing:-0.55px;">13:20:11</div>
<div class="t" style="left:633px;top:446px;font-size:15px;line-height:17px;color:#111;font-weight:normal;letter-spacing:-0.55px;">13:23:11</div>
<div class="t" style="left:737px;top:446px;font-size:15px;line-height:17px;color:#111;font-weight:normal;letter-spacing:-0.55px;">00:03:00</div>
<svg class="a" style="left:886px;top:446px;" width="16" height="15" viewBox="0 0 16 15"><rect x="0.7" y="1" width="1.4" height="13.2" fill="#555"/><rect x="14" y="1" width="1.4" height="13.2" fill="#555"/><rect x="3.2" y="1.2" width="1" height="1" fill="#555"/><rect x="3.2" y="13.1" width="1" height="1" fill="#555"/><rect x="6.2" y="1.2" width="1" height="1" fill="#555"/><rect x="6.2" y="13.1" width="1" height="1" fill="#555"/><rect x="9.2" y="1.2" width="1" height="1" fill="#555"/><rect x="9.2" y="13.1" width="1" height="1" fill="#555"/><rect x="12.2" y="1.2" width="1" height="1" fill="#555"/><rect x="12.2" y="13.1" width="1" height="1" fill="#555"/></svg>
<div class="t" style="left:937px;top:446px;font-size:15px;line-height:17px;color:#111;font-weight:normal;">Placeholder</div>
<svg class="a" style="left:1096px;top:445px;" width="17" height="17" viewBox="0 0 17 17"><rect width="17" height="17" fill="#8c1116"/><path d="M1 3 H7.2 V5.5 H5.5 V14.2 H3.1 V5.5 H1 Z" fill="#fff"/><path d="M10.2 3 H15.2 L16.3 4.3 V8.6 L15.2 9.8 H12.6 V14.2 H10.2 Z M12.6 5.3 V7.6 H13.9 V5.3 Z" fill="#fff" fill-rule="evenodd"/></svg>
<div class="a" style="left:1902px;top:219px;width:16px;height:259px;background:#e1e1e1;"></div>
<svg class="a" style="left:1906px;top:226px;" width="9" height="6" viewBox="0 0 9 6"><path d="M0 5.5 L4.5 0 L9 5.5 Z" fill="#b5b5b5"/></svg>
<div class="a" style="left:1903px;top:236px;width:13px;height:17px;background:#b8b8b8;"></div>
<svg class="a" style="left:1904px;top:449px;" width="9" height="6" viewBox="0 0 9 6"><path d="M0 0 L4.5 5.5 L9 0 Z" fill="#b5b5b5"/></svg>
<div class="a" style="left:9px;top:461px;width:1893px;height:17px;background:#e1e1e1;"></div>
<div class="a" style="left:26px;top:463px;width:1493px;height:13px;background:#b8b8b8;"></div>
<svg class="a" style="left:12px;top:465px;" width="6" height="10" viewBox="0 0 6 10"><path d="M5 0 L0 5 L5 10 Z" fill="#b5b5b5"/></svg>
<svg class="a" style="left:1889px;top:464px;" width="6" height="11" viewBox="0 0 6 11"><path d="M0 0 L5.5 5.5 L0 11 Z" fill="#b5b5b5"/></svg>
<div class="a" style="left:4px;top:480px;width:1915px;height:3px;background:#c0c0c0;"></div>
<div class="a" style="left:8px;top:484px;width:1911px;height:574px;background:#f3f2f1;border-top:1px solid #ababab;border-left:1px solid #ababab;border-right:1px solid #ababab;box-sizing:border-box;"></div>
<svg class="a" style="left:14px;top:490px;" width="21" height="20" viewBox="0 0 21 20"><path d="M2.5 18 L2 13 L13 2 L18 7 L7 18 Z M5 15 L15 5" fill="none" stroke="#4a4a4a" stroke-width="1.6" stroke-linejoin="round"/></svg>
<svg class="a" style="left:44px;top:490px;" width="21" height="20" viewBox="0 0 21 20"><circle cx="12.5" cy="5" r="4" fill="#4a4a4a"/><path d="M12 11 Q18 10 20 15 V17 H14 Z" fill="#4a4a4a"/><circle cx="8" cy="8" r="4.3" fill="#4a4a4a" stroke="#f3f2f1" stroke-width="1"/><path d="M1 19 V16 Q1 12 8 12 Q15 12 15 16 V19 Z" fill="#4a4a4a" stroke="#f3f2f1" stroke-width="1"/></svg>
<svg class="a" style="left:75px;top:490px;" width="20" height="20" viewBox="0 0 20 20"><rect x="1" y="10" width="4" height="9" fill="none" stroke="#4a4a4a" stroke-width="1.6"/><rect x="6" y="1" width="4" height="18" fill="none" stroke="#4a4a4a" stroke-width="1.6"/><rect x="10" y="8" width="4" height="11" fill="none" stroke="#4a4a4a" stroke-width="1.6"/><rect x="14.5" y="1" width="4" height="18" fill="none" stroke="#4a4a4a" stroke-width="1.6"/></svg>
<svg class="a" style="left:104px;top:490px;" width="21" height="20" viewBox="0 0 21 20"><path d="M1 6 L8 12 L20 1 M1 13 L8 19 L20 8" fill="none" stroke="#4a4a4a" stroke-width="1.4"/></svg>
<svg class="a" style="left:135px;top:490px;" width="20" height="20" viewBox="0 0 20 20"><path d="M1 12 V1 H16 M4 15 V4 H18" fill="none" stroke="#4a4a4a" stroke-width="1.3"/><rect x="7.5" y="7.5" width="12" height="12" fill="#f3f2f1" stroke="#4a4a4a" stroke-width="1.4"/><path d="M9.5 11 H17.5 M9.5 13.5 H17.5 M9.5 16 H17.5" stroke="#4a4a4a" stroke-width="1.2"/></svg>
<svg class="a" style="left:164px;top:490px;" width="20" height="20" viewBox="0 0 20 20"><rect x="1" y="2" width="12" height="15" fill="#4a4a4a"/><rect x="4" y="0.5" width="6" height="3" rx="1" fill="#4a4a4a" stroke="#f3f2f1"/><path d="M7 7 H14 L19 12 V19 H7 Z" fill="#f3f2f1" stroke="#4a4a4a" stroke-width="1.4"/><path d="M10 13 H15 M10 16 H15" stroke="#4a4a4a" stroke-width="1.2"/></svg>
<div class="a" style="left:189px;top:485px;width:32px;height:30px;background:#fbf2b4;"></div>
<svg class="a" style="left:194px;top:489px;" width="22" height="21" viewBox="0 0 22 21"><rect x="0.8" y="4.5" width="20" height="6" fill="none" stroke="#1b7f9c" stroke-width="1.5"/><rect x="0.8" y="12.5" width="20" height="6" fill="none" stroke="#1b7f9c" stroke-width="1.5"/><path d="M10.5 0 V21" stroke="#1b7f9c" stroke-width="1.5"/><path d="M1 7.5 H7 L13 15.5 H20" fill="none" stroke="#1b7f9c" stroke-width="1.2"/></svg>
<svg class="a" style="left:288px;top:490px;" width="23" height="22" viewBox="0 0 23 22"><path d="M1 1 H15.5 L21 6.5 V19.8 H1 Z" fill="none" stroke="#c4c4c4" stroke-width="1.8"/><rect x="4" y="1" width="10" height="6" fill="#c4c4c4"/><rect x="9" y="2" width="3" height="4" fill="#f3f2f1"/></svg>
<svg class="a" style="left:337px;top:490px;" width="41" height="22" viewBox="0 0 41 22"><path d="M1 1 H16 L19 4 M1 1 V19.8 H18" fill="none" stroke="#c4c4c4" stroke-width="1.8"/><rect x="4" y="1" width="10" height="6" fill="#c4c4c4"/><rect x="9" y="2" width="3" height="4" fill="#f3f2f1"/><circle cx="29" cy="10.5" r="10" fill="#f3f2f1" stroke="#c4c4c4" stroke-width="1.6"/><path d="M25 6.5 L33 14.5 M33 6.5 L25 14.5" stroke="#c4c4c4" stroke-width="1.4"/></svg>
<svg class="a" style="left:404px;top:489px;" width="22" height="22" viewBox="0 0 22 22"><circle cx="11" cy="11" r="10" fill="none" stroke="#333" stroke-width="1.3"/><path d="M7 7 L15 15 M15 7 L7 15" stroke="#333" stroke-width="1.4"/></svg>
<svg class="a" style="left:483px;top:494px;" width="20" height="12" viewBox="0 0 20 12"><path d="M2 6 H19" stroke="#444" stroke-width="1.8"/><path d="M0 6 L7 0.5 V11.5 Z" fill="#444"/></svg>
<svg class="a" style="left:514px;top:494px;" width="20" height="12" viewBox="0 0 20 12"><path d="M0 6 H17" stroke="#444" stroke-width="1.8"/><path d="M20 6 L13 0.5 V11.5 Z" fill="#444"/></svg>
<div class="t" style="left:566px;top:490px;font-size:20px;line-height:22px;color:#333;font-weight:normal;">1</div>
<div class="a" style="left:591px;top:485px;width:30px;height:30px;background:#fbf2b4;"></div>
<div class="t" style="left:597px;top:490px;font-size:20px;line-height:22px;color:#1b8a9c;font-weight:normal;">M</div>
<div class="t" style="left:705px;top:493px;font-size:14.5px;line-height:17px;color:#9e9e9e;font-weight:normal;">B1 09/11/2024 13:00:00 - 17:00:00 Bayern 1 am Nachmittag (1)</div>
<div class="t" style="left:1756px;top:493px;font-size:14.5px;line-height:17px;color:#9e9e9e;font-weight:normal;">Bayern 1 (0)</div>
<svg class="a" style="left:1845px;top:497px;" width="12" height="8" viewBox="0 0 12 8"><path d="M0.5 0.5 L11.5 0.5 L6 7 Z" fill="#000"/></svg>
<svg class="a" style="left:1896px;top:493px;" width="16" height="16" viewBox="0 0 16 16"><path d="M6 1.5 H1.5 V14.5 H14.5 V10" fill="none" stroke="#666" stroke-width="1.2"/><path d="M7 9 L14.5 1.5 M9.5 1.5 H14.5 V6.5" fill="none" stroke="#666" stroke-width="1.2"/></svg>
<div class="a" style="left:9px;top:515px;width:1909px;height:543px;background:#ffffff;"></div>
<div class="a" style="left:10px;top:516px;width:69px;height:20px;background:#555555;"></div>
<div class="t" style="left:12px;top:519px;font-size:14.3px;line-height:16px;color:#fff;font-weight:normal;letter-spacing:-0.6px;">-00:00:06.0</div>
<div class="a" style="left:80px;top:516px;width:662px;height:20px;background:#555555;"></div>
<div class="a" style="left:742px;top:516px;width:1053px;height:20px;background:#000000;"></div>
<div class="a" style="left:1795px;top:516px;width:122px;height:20px;background:#555555;"></div>
<svg class="a" style="left:80px;top:516px;" width="1837" height="20" viewBox="0 0 1837 20"><rect x="3.89" y="15" width="1.2" height="5" fill="#fff"/><rect x="10.00" y="15" width="1.2" height="5" fill="#fff"/><rect x="16.11" y="15" width="1.2" height="5" fill="#fff"/><rect x="22.22" y="15" width="1.2" height="5" fill="#fff"/><rect x="28.33" y="15" width="1.2" height="5" fill="#fff"/><rect x="34.44" y="15" width="1.2" height="5" fill="#fff"/><rect x="40.15" y="10" width="2" height="10" fill="#fff"/><rect x="46.66" y="15" width="1.2" height="5" fill="#fff"/><rect x="52.77" y="15" width="1.2" height="5" fill="#fff"/><rect x="58.88" y="15" width="1.2" height="5" fill="#fff"/><rect x="64.99" y="15" width="1.2" height="5" fill="#fff"/><rect x="71.10" y="15" width="1.2" height="5" fill="#fff"/><rect x="77.21" y="15" width="1.2" height="5" fill="#fff"/><rect x="83.32" y="15" width="1.2" height="5" fill="#fff"/><rect x="89.43" y="15" width="1.2" height="5" fill="#fff"/><rect x="95.54" y="15" width="1.2" height="5" fill="#fff"/><rect x="101.25" y="10" width="2" height="10" fill="#fff"/><rect x="107.76" y="15" width="1.2" height="5" fill="#fff"/><rect x="113.87" y="15" width="1.2" height="5" fill="#fff"/><rect x="119.98" y="15" width="1.2" height="5" fill="#fff"/><rect x="126.09" y="15" width="1.2" height="5" fill="#fff"/><rect x="132.20" y="15" width="1.2" height="5" fill="#fff"/><rect x="138.31" y="15" width="1.2" height="5" fill="#fff"/><rect x="144.42" y="15" width="1.2" height="5" fill="#fff"/><rect x="150.53" y="15" width="1.2" height="5" fill="#fff"/><rect x="156.64" y="15" width="1.2" height="5" fill="#fff"/><rect x="162.35" y="10" width="2" height="10" fill="#fff"/><rect x="168.86" y="15" width="1.2" height="5" fill="#fff"/><rect x="174.97" y="15" width="1.2" height="5" fill="#fff"/><rect x="181.08" y="15" width="1.2" height="5" fill="#fff"/><rect x="187.19" y="15" width="1.2" height="5" fill="#fff"/><rect x="193.30" y="15" width="1.2" height="5" fill="#fff"/><rect x="199.41" y="15" width="1.2" height="5" fill="#fff"/><rect x="205.52" y="15" width="1.2" height="5" fill="#fff"/><rect x="211.63" y="15" width="1.2" height="5" fill="#fff"/><rect x="217.74" y="15" width="1.2" height="5" fill="#fff"/><rect x="223.45" y="10" width="2" height="10" fill="#fff"/><rect x="229.96" y="15" width="1.2" height="5" fill="#fff"/><rect x="236.07" y="15" width="1.2" height="5" fill="#fff"/><rect x="242.18" y="15" width="1.2" height="5" fill="#fff"/><rect x="248.29" y="15" width="1.2" height="5" fill="#fff"/><rect x="254.40" y="15" width="1.2" height="5" fill="#fff"/><rect x="260.51" y="15" width="1.2" height="5" fill="#fff"/><rect x="266.62" y="15" width="1.2" height="5" fill="#fff"/><rect x="272.73" y="15" width="1.2" height="5" fill="#fff"/><rect x="278.84" y="15" width="1.2" height="5" fill="#fff"/><rect x="284.55" y="10" width="2" height="10" fill="#fff"/><rect x="291.06" y="15" width="1.2" height="5" fill="#fff"/><rect x="297.17" y="15" width="1.2" height="5" fill="#fff"/><rect x="303.28" y="15" width="1.2" height="5" fill="#fff"/><rect x="309.39" y="15" width="1.2" height="5" fill="#fff"/><rect x="315.50" y="15" width="1.2" height="5" fill="#fff"/><rect x="321.61" y="15" width="1.2" height="5" fill="#fff"/><rect x="327.72" y="15" width="1.2" height="5" fill="#fff"/><rect x="333.83" y="15" width="1.2" height="5" fill="#fff"/><rect x="339.94" y="15" width="1.2" height="5" fill="#fff"/><rect x="345.65" y="10" width="2" height="10" fill="#fff"/><rect x="352.16" y="15" width="1.2" height="5" fill="#fff"/><rect x="358.27" y="15" width="1.2" height="5" fill="#fff"/><rect x="364.38" y="15" width="1.2" height="5" fill="#fff"/><rect x="370.49" y="15" width="1.2" height="5" fill="#fff"/><rect x="376.60" y="15" width="1.2" height="5" fill="#fff"/><rect x="382.71" y="15" width="1.2" height="5" fill="#fff"/><rect x="388.82" y="15" width="1.2" height="5" fill="#fff"/><rect x="394.93" y="15" width="1.2" height="5" fill="#fff"/><rect x="401.04" y="15" width="1.2" height="5" fill="#fff"/><rect x="406.75" y="10" width="2" height="10" fill="#fff"/><rect x="413.26" y="15" width="1.2" height="5" fill="#fff"/><rect x="419.37" y="15" width="1.2" height="5" fill="#fff"/><rect x="425.48" y="15" width="1.2" height="5" fill="#fff"/><rect x="431.59" y="15" width="1.2" height="5" fill="#fff"/><rect x="437.70" y="15" width="1.2" height="5" fill="#fff"/><rect x="443.81" y="15" width="1.2" height="5" fill="#fff"/><rect x="449.92" y="15" width="1.2" height="5" fill="#fff"/><rect x="456.03" y="15" width="1.2" height="5" fill="#fff"/><rect x="462.14" y="15" width="1.2" height="5" fill="#fff"/><rect x="467.85" y="10" width="2" height="10" fill="#fff"/><rect x="474.36" y="15" width="1.2" height="5" fill="#fff"/><rect x="480.47" y="15" width="1.2" height="5" fill="#fff"/><rect x="486.58" y="15" width="1.2" height="5" fill="#fff"/><rect x="492.69" y="15" width="1.2" height="5" fill="#fff"/><rect x="498.80" y="15" width="1.2" height="5" fill="#fff"/><rect x="504.91" y="15" width="1.2" height="5" fill="#fff"/><rect x="511.02" y="15" width="1.2" height="5" fill="#fff"/><rect x="517.13" y="15" width="1.2" height="5" fill="#fff"/><rect x="523.24" y="15" width="1.2" height="5" fill="#fff"/><rect x="528.95" y="10" width="2" height="10" fill="#fff"/><rect x="535.46" y="15" width="1.2" height="5" fill="#fff"/><rect x="541.57" y="15" width="1.2" height="5" fill="#fff"/><rect x="547.68" y="15" width="1.2" height="5" fill="#fff"/><rect x="553.79" y="15" width="1.2" height="5" fill="#fff"/><rect x="559.90" y="15" width="1.2" height="5" fill="#fff"/><rect x="566.01" y="15" width="1.2" height="5" fill="#fff"/><rect x="572.12" y="15" width="1.2" height="5" fill="#fff"/><rect x="578.23" y="15" width="1.2" height="5" fill="#fff"/><rect x="584.34" y="15" width="1.2" height="5" fill="#fff"/><rect x="590.05" y="10" width="2" height="10" fill="#fff"/><rect x="596.56" y="15" width="1.2" height="5" fill="#fff"/><rect x="602.67" y="15" width="1.2" height="5" fill="#fff"/><rect x="608.78" y="15" width="1.2" height="5" fill="#fff"/><rect x="614.89" y="15" width="1.2" height="5" fill="#fff"/><rect x="621.00" y="15" width="1.2" height="5" fill="#fff"/><rect x="627.11" y="15" width="1.2" height="5" fill="#fff"/><rect x="633.22" y="15" width="1.2" height="5" fill="#fff"/><rect x="639.33" y="15" width="1.2" height="5" fill="#fff"/><rect x="645.44" y="15" width="1.2" height="5" fill="#fff"/><rect x="651.15" y="10" width="2" height="10" fill="#fff"/><rect x="657.66" y="15" width="1.2" height="5" fill="#fff"/><rect x="663.77" y="15" width="1.2" height="5" fill="#fff"/><rect x="669.88" y="15" width="1.2" height="5" fill="#fff"/><rect x="675.99" y="15" width="1.2" height="5" fill="#fff"/><rect x="682.10" y="15" width="1.2" height="5" fill="#fff"/><rect x="688.21" y="15" width="1.2" height="5" fill="#fff"/><rect x="694.32" y="15" width="1.2" height="5" fill="#fff"/><rect x="700.43" y="15" width="1.2" height="5" fill="#fff"/><rect x="706.54" y="15" width="1.2" height="5" fill="#fff"/><rect x="712.25" y="10" width="2" height="10" fill="#fff"/><rect x="718.76" y="15" width="1.2" height="5" fill="#fff"/><rect x="724.87" y="15" width="1.2" height="5" fill="#fff"/><rect x="730.98" y="15" width="1.2" height="5" fill="#fff"/><rect x="737.09" y="15" width="1.2" height="5" fill="#fff"/><rect x="743.20" y="15" width="1.2" height="5" fill="#fff"/><rect x="749.31" y="15" width="1.2" height="5" fill="#fff"/><rect x="755.42" y="15" width="1.2" height="5" fill="#fff"/><rect x="761.53" y="15" width="1.2" height="5" fill="#fff"/><rect x="767.64" y="15" width="1.2" height="5" fill="#fff"/><rect x="773.35" y="10" width="2" height="10" fill="#fff"/><rect x="779.86" y="15" width="1.2" height="5" fill="#fff"/><rect x="785.97" y="15" width="1.2" height="5" fill="#fff"/><rect x="792.08" y="15" width="1.2" height="5" fill="#fff"/><rect x="798.19" y="15" width="1.2" height="5" fill="#fff"/><rect x="804.30" y="15" width="1.2" height="5" fill="#fff"/><rect x="810.41" y="15" width="1.2" height="5" fill="#fff"/><rect x="816.52" y="15" width="1.2" height="5" fill="#fff"/><rect x="822.63" y="15" width="1.2" height="5" fill="#fff"/><rect x="828.74" y="15" width="1.2" height="5" fill="#fff"/><rect x="834.45" y="10" width="2" height="10" fill="#fff"/><rect x="840.96" y="15" width="1.2" height="5" fill="#fff"/><rect x="847.07" y="15" width="1.2" height="5" fill="#fff"/><rect x="853.18" y="15" width="1.2" height="5" fill="#fff"/><rect x="859.29" y="15" width="1.2" height="5" fill="#fff"/><rect x="865.40" y="15" width="1.2" height="5" fill="#fff"/><rect x="871.51" y="15" width="1.2" height="5" fill="#fff"/><rect x="877.62" y="15" width="1.2" height="5" fill="#fff"/><rect x="883.73" y="15" width="1.2" height="5" fill="#fff"/><rect x="889.84" y="15" width="1.2" height="5" fill="#fff"/><rect x="895.55" y="10" width="2" height="10" fill="#fff"/><rect x="902.06" y="15" width="1.2" height="5" fill="#fff"/><rect x="908.17" y="15" width="1.2" height="5" fill="#fff"/><rect x="914.28" y="15" width="1.2" height="5" fill="#fff"/><rect x="920.39" y="15" width="1.2" height="5" fill="#fff"/><rect x="926.50" y="15" width="1.2" height="5" fill="#fff"/><rect x="932.61" y="15" width="1.2" height="5" fill="#fff"/><rect x="938.72" y="15" width="1.2" height="5" fill="#fff"/><rect x="944.83" y="15" width="1.2" height="5" fill="#fff"/><rect x="950.94" y="15" width="1.2" height="5" fill="#fff"/><rect x="956.65" y="10" width="2" height="10" fill="#fff"/><rect x="963.16" y="15" width="1.2" height="5" fill="#fff"/><rect x="969.27" y="15" width="1.2" height="5" fill="#fff"/><rect x="975.38" y="15" width="1.2" height="5" fill="#fff"/><rect x="981.49" y="15" width="1.2" height="5" fill="#fff"/><rect x="987.60" y="15" width="1.2" height="5" fill="#fff"/><rect x="993.71" y="15" width="1.2" height="5" fill="#fff"/><rect x="999.82" y="15" width="1.2" height="5" fill="#fff"/><rect x="1005.93" y="15" width="1.2" height="5" fill="#fff"/><rect x="1012.04" y="15" width="1.2" height="5" fill="#fff"/><rect x="1017.75" y="10" width="2" height="10" fill="#fff"/><rect x="1024.26" y="15" width="1.2" height="5" fill="#fff"/><rect x="1030.37" y="15" width="1.2" height="5" fill="#fff"/><rect x="1036.48" y="15" width="1.2" height="5" fill="#fff"/><rect x="1042.59" y="15" width="1.2" height="5" fill="#fff"/><rect x="1048.70" y="15" width="1.2" height="5" fill="#fff"/><rect x="1054.81" y="15" width="1.2" height="5" fill="#fff"/><rect x="1060.92" y="15" width="1.2" height="5" fill="#fff"/><rect x="1067.03" y="15" width="1.2" height="5" fill="#fff"/><rect x="1073.14" y="15" width="1.2" height="5" fill="#fff"/><rect x="1078.85" y="10" width="2" height="10" fill="#fff"/><rect x="1085.36" y="15" width="1.2" height="5" fill="#fff"/><rect x="1091.47" y="15" width="1.2" height="5" fill="#fff"/><rect x="1097.58" y="15" width="1.2" height="5" fill="#fff"/><rect x="1103.69" y="15" width="1.2" height="5" fill="#fff"/><rect x="1109.80" y="15" width="1.2" height="5" fill="#fff"/><rect x="1115.91" y="15" width="1.2" height="5" fill="#fff"/><rect x="1122.02" y="15" width="1.2" height="5" fill="#fff"/><rect x="1128.13" y="15" width="1.2" height="5" fill="#fff"/><rect x="1134.24" y="15" width="1.2" height="5" fill="#fff"/><rect x="1139.95" y="10" width="2" height="10" fill="#fff"/><rect x="1146.46" y="15" width="1.2" height="5" fill="#fff"/><rect x="1152.57" y="15" width="1.2" height="5" fill="#fff"/><rect x="1158.68" y="15" width="1.2" height="5" fill="#fff"/><rect x="1164.79" y="15" width="1.2" height="5" fill="#fff"/><rect x="1170.90" y="15" width="1.2" height="5" fill="#fff"/><rect x="1177.01" y="15" width="1.2" height="5" fill="#fff"/><rect x="1183.12" y="15" width="1.2" height="5" fill="#fff"/><rect x="1189.23" y="15" width="1.2" height="5" fill="#fff"/><rect x="1195.34" y="15" width="1.2" height="5" fill="#fff"/><rect x="1201.05" y="10" width="2" height="10" fill="#fff"/><rect x="1207.56" y="15" width="1.2" height="5" fill="#fff"/><rect x="1213.67" y="15" width="1.2" height="5" fill="#fff"/><rect x="1219.78" y="15" width="1.2" height="5" fill="#fff"/><rect x="1225.89" y="15" width="1.2" height="5" fill="#fff"/><rect x="1232.00" y="15" width="1.2" height="5" fill="#fff"/><rect x="1238.11" y="15" width="1.2" height="5" fill="#fff"/><rect x="1244.22" y="15" width="1.2" height="5" fill="#fff"/><rect x="1250.33" y="15" width="1.2" height="5" fill="#fff"/><rect x="1256.44" y="15" width="1.2" height="5" fill="#fff"/><rect x="1262.15" y="10" width="2" height="10" fill="#fff"/><rect x="1268.66" y="15" width="1.2" height="5" fill="#fff"/><rect x="1274.77" y="15" width="1.2" height="5" fill="#fff"/><rect x="1280.88" y="15" width="1.2" height="5" fill="#fff"/><rect x="1286.99" y="15" width="1.2" height="5" fill="#fff"/><rect x="1293.10" y="15" width="1.2" height="5" fill="#fff"/><rect x="1299.21" y="15" width="1.2" height="5" fill="#fff"/><rect x="1305.32" y="15" width="1.2" height="5" fill="#fff"/><rect x="1311.43" y="15" width="1.2" height="5" fill="#fff"/><rect x="1317.54" y="15" width="1.2" height="5" fill="#fff"/><rect x="1323.25" y="10" width="2" height="10" fill="#fff"/><rect x="1329.76" y="15" width="1.2" height="5" fill="#fff"/><rect x="1335.87" y="15" width="1.2" height="5" fill="#fff"/><rect x="1341.98" y="15" width="1.2" height="5" fill="#fff"/><rect x="1348.09" y="15" width="1.2" height="5" fill="#fff"/><rect x="1354.20" y="15" width="1.2" height="5" fill="#fff"/><rect x="1360.31" y="15" width="1.2" height="5" fill="#fff"/><rect x="1366.42" y="15" width="1.2" height="5" fill="#fff"/><rect x="1372.53" y="15" width="1.2" height="5" fill="#fff"/><rect x="1378.64" y="15" width="1.2" height="5" fill="#fff"/><rect x="1384.35" y="10" width="2" height="10" fill="#fff"/><rect x="1390.86" y="15" width="1.2" height="5" fill="#fff"/><rect x="1396.97" y="15" width="1.2" height="5" fill="#fff"/><rect x="1403.08" y="15" width="1.2" height="5" fill="#fff"/><rect x="1409.19" y="15" width="1.2" height="5" fill="#fff"/><rect x="1415.30" y="15" width="1.2" height="5" fill="#fff"/><rect x="1421.41" y="15" width="1.2" height="5" fill="#fff"/><rect x="1427.52" y="15" width="1.2" height="5" fill="#fff"/><rect x="1433.63" y="15" width="1.2" height="5" fill="#fff"/><rect x="1439.74" y="15" width="1.2" height="5" fill="#fff"/><rect x="1445.45" y="10" width="2" height="10" fill="#fff"/><rect x="1451.96" y="15" width="1.2" height="5" fill="#fff"/><rect x="1458.07" y="15" width="1.2" height="5" fill="#fff"/><rect x="1464.18" y="15" width="1.2" height="5" fill="#fff"/><rect x="1470.29" y="15" width="1.2" height="5" fill="#fff"/><rect x="1476.40" y="15" width="1.2" height="5" fill="#fff"/><rect x="1482.51" y="15" width="1.2" height="5" fill="#fff"/><rect x="1488.62" y="15" width="1.2" height="5" fill="#fff"/><rect x="1494.73" y="15" width="1.2" height="5" fill="#fff"/><rect x="1500.84" y="15" width="1.2" height="5" fill="#fff"/><rect x="1506.55" y="10" width="2" height="10" fill="#fff"/><rect x="1513.06" y="15" width="1.2" height="5" fill="#fff"/><rect x="1519.17" y="15" width="1.2" height="5" fill="#fff"/><rect x="1525.28" y="15" width="1.2" height="5" fill="#fff"/><rect x="1531.39" y="15" width="1.2" height="5" fill="#fff"/><rect x="1537.50" y="15" width="1.2" height="5" fill="#fff"/><rect x="1543.61" y="15" width="1.2" height="5" fill="#fff"/><rect x="1549.72" y="15" width="1.2" height="5" fill="#fff"/><rect x="1555.83" y="15" width="1.2" height="5" fill="#fff"/><rect x="1561.94" y="15" width="1.2" height="5" fill="#fff"/><rect x="1567.65" y="10" width="2" height="10" fill="#fff"/><rect x="1574.16" y="15" width="1.2" height="5" fill="#fff"/><rect x="1580.27" y="15" width="1.2" height="5" fill="#fff"/><rect x="1586.38" y="15" width="1.2" height="5" fill="#fff"/><rect x="1592.49" y="15" width="1.2" height="5" fill="#fff"/><rect x="1598.60" y="15" width="1.2" height="5" fill="#fff"/><rect x="1604.71" y="15" width="1.2" height="5" fill="#fff"/><rect x="1610.82" y="15" width="1.2" height="5" fill="#fff"/><rect x="1616.93" y="15" width="1.2" height="5" fill="#fff"/><rect x="1623.04" y="15" width="1.2" height="5" fill="#fff"/><rect x="1628.75" y="10" width="2" height="10" fill="#fff"/><rect x="1635.26" y="15" width="1.2" height="5" fill="#fff"/><rect x="1641.37" y="15" width="1.2" height="5" fill="#fff"/><rect x="1647.48" y="15" width="1.2" height="5" fill="#fff"/><rect x="1653.59" y="15" width="1.2" height="5" fill="#fff"/><rect x="1659.70" y="15" width="1.2" height="5" fill="#fff"/><rect x="1665.81" y="15" width="1.2" height="5" fill="#fff"/><rect x="1671.92" y="15" width="1.2" height="5" fill="#fff"/><rect x="1678.03" y="15" width="1.2" height="5" fill="#fff"/><rect x="1684.14" y="15" width="1.2" height="5" fill="#fff"/><rect x="1689.85" y="10" width="2" height="10" fill="#fff"/><rect x="1696.36" y="15" width="1.2" height="5" fill="#fff"/><rect x="1702.47" y="15" width="1.2" height="5" fill="#fff"/><rect x="1708.58" y="15" width="1.2" height="5" fill="#fff"/><rect x="1714.69" y="15" width="1.2" height="5" fill="#fff"/><rect x="1720.80" y="15" width="1.2" height="5" fill="#fff"/><rect x="1726.91" y="15" width="1.2" height="5" fill="#fff"/><rect x="1733.02" y="15" width="1.2" height="5" fill="#fff"/><rect x="1739.13" y="15" width="1.2" height="5" fill="#fff"/><rect x="1745.24" y="15" width="1.2" height="5" fill="#fff"/><rect x="1750.95" y="10" width="2" height="10" fill="#fff"/><rect x="1757.46" y="15" width="1.2" height="5" fill="#fff"/><rect x="1763.57" y="15" width="1.2" height="5" fill="#fff"/><rect x="1769.68" y="15" width="1.2" height="5" fill="#fff"/><rect x="1775.79" y="15" width="1.2" height="5" fill="#fff"/><rect x="1781.90" y="15" width="1.2" height="5" fill="#fff"/><rect x="1788.01" y="15" width="1.2" height="5" fill="#fff"/><rect x="1794.12" y="15" width="1.2" height="5" fill="#fff"/><rect x="1800.23" y="15" width="1.2" height="5" fill="#fff"/><rect x="1806.34" y="15" width="1.2" height="5" fill="#fff"/><rect x="1812.05" y="10" width="2" height="10" fill="#fff"/><rect x="1818.56" y="15" width="1.2" height="5" fill="#fff"/><rect x="1824.67" y="15" width="1.2" height="5" fill="#fff"/><rect x="1830.78" y="15" width="1.2" height="5" fill="#fff"/><text x="-79.55" y="11" font-size="11.6" font-weight="bold" fill="#fff" font-family="Liberation Sans">-00:06:00</text><text x="-18.45" y="11" font-size="11.6" font-weight="bold" fill="#fff" font-family="Liberation Sans">-00:05:40</text><text x="42.65" y="11" font-size="11.6" font-weight="bold" fill="#fff" font-family="Liberation Sans">-00:05:20</text><text x="103.75" y="11" font-size="11.6" font-weight="bold" fill="#fff" font-family="Liberation Sans">-00:05:00</text><text x="164.85" y="11" font-size="11.6" font-weight="bold" fill="#fff" font-family="Liberation Sans">-00:04:40</text><text x="225.95" y="11" font-size="11.6" font-weight="bold" fill="#fff" font-family="Liberation Sans">-00:04:20</text><text x="287.05" y="11" font-size="11.6" font-weight="bold" fill="#fff" font-family="Liberation Sans">-00:04:00</text><text x="348.15" y="11" font-size="11.6" font-weight="bold" fill="#fff" font-family="Liberation Sans">-00:03:40</text><text x="409.25" y="11" font-size="11.6" font-weight="bold" fill="#fff" font-family="Liberation Sans">-00:03:20</text><text x="470.35" y="11" font-size="11.6" font-weight="bold" fill="#fff" font-family="Liberation Sans">-00:03:00</text><text x="531.45" y="11" font-size="11.6" font-weight="bold" fill="#fff" font-family="Liberation Sans">-00:02:40</text><text x="592.55" y="11" font-size="11.6" font-weight="bold" fill="#fff" font-family="Liberation Sans">-00:02:20</text><text x="653.65" y="11" font-size="11.6" font-weight="bold" fill="#fff" font-family="Liberation Sans">-00:02:00</text><text x="714.75" y="11" font-size="11.6" font-weight="bold" fill="#fff" font-family="Liberation Sans">-00:01:40</text><text x="775.85" y="11" font-size="11.6" font-weight="bold" fill="#fff" font-family="Liberation Sans">-00:01:20</text><text x="836.95" y="11" font-size="11.6" font-weight="bold" fill="#fff" font-family="Liberation Sans">-00:01:00</text><text x="898.05" y="11" font-size="11.6" font-weight="bold" fill="#fff" font-family="Liberation Sans">-00:00:40</text><text x="959.15" y="11" font-size="11.6" font-weight="bold" fill="#fff" font-family="Liberation Sans">-00:00:20</text><text x="1020.25" y="11" font-size="11.6" font-weight="bold" fill="#fff" font-family="Liberation Sans">00:00:00</text><text x="1081.35" y="11" font-size="11.6" font-weight="bold" fill="#fff" font-family="Liberation Sans">00:00:20</text><text x="1142.45" y="11" font-size="11.6" font-weight="bold" fill="#fff" font-family="Liberation Sans">00:00:40</text><text x="1203.55" y="11" font-size="11.6" font-weight="bold" fill="#fff" font-family="Liberation Sans">00:01:00</text><text x="1264.65" y="11" font-size="11.6" font-weight="bold" fill="#fff" font-family="Liberation Sans">00:01:20</text><text x="1325.75" y="11" font-size="11.6" font-weight="bold" fill="#fff" font-family="Liberation Sans">00:01:40</text><text x="1386.85" y="11" font-size="11.6" font-weight="bold" fill="#fff" font-family="Liberation Sans">00:02:00</text><text x="1447.95" y="11" font-size="11.6" font-weight="bold" fill="#fff" font-family="Liberation Sans">00:02:20</text><text x="1509.05" y="11" font-size="11.6" font-weight="bold" fill="#fff" font-family="Liberation Sans">00:02:40</text><text x="1570.15" y="11" font-size="11.6" font-weight="bold" fill="#fff" font-family="Liberation Sans">00:03:00</text><text x="1631.25" y="11" font-size="11.6" font-weight="bold" fill="#fff" font-family="Liberation Sans">00:03:20</text><text x="1692.35" y="11" font-size="11.6" font-weight="bold" fill="#fff" font-family="Liberation Sans">00:03:40</text><text x="1753.45" y="11" font-size="11.6" font-weight="bold" fill="#fff" font-family="Liberation Sans">00:04:00</text><text x="1814.55" y="11" font-size="11.6" font-weight="bold" fill="#fff" font-family="Liberation Sans">00:04:20</text></svg>
<div class="a" style="left:10px;top:516px;width:69px;height:20px;background:#555555;"></div>
<div class="t" style="left:11px;top:519px;font-size:14.3px;line-height:16px;color:#fff;font-weight:normal;letter-spacing:-0.7px;">-00:00:06.0</div>
<div class="a" style="left:10px;top:538px;width:69px;height:127px;background:#555555;"></div>
<div class="a" style="left:80px;top:538px;width:662px;height:127px;background:#989898;"></div>
<div class="a" style="left:742px;top:538px;width:1053px;height:127px;background:#828286;"></div>
<div class="a" style="left:1795px;top:538px;width:122px;height:127px;background:#969696;"></div>
<div class="a" style="left:10px;top:667px;width:69px;height:126px;background:#555555;"></div>
<div class="a" style="left:80px;top:667px;width:662px;height:126px;background:#333333;"></div>
<div class="a" style="left:742px;top:667px;width:1053px;height:126px;background:#000000;"></div>
<div class="a" style="left:1795px;top:667px;width:122px;height:126px;background:#333333;"></div>
<div class="a" style="left:10px;top:796px;width:69px;height:126px;background:#555555;"></div>
<div class="a" style="left:80px;top:796px;width:662px;height:126px;background:#333333;"></div>
<div class="a" style="left:742px;top:796px;width:1053px;height:126px;background:#000000;"></div>
<div class="a" style="left:1795px;top:796px;width:122px;height:126px;background:#333333;"></div>
<svg class="a" style="left:80px;top:538px;" width="1837" height="127" viewBox="0 0 1837 127"><defs><clipPath id="c1"><rect x="80" y="538" width="1837" height="127"/></clipPath></defs><g clip-path="url(#c1)" transform="translate(-80,-538)"><path d="M388,548.4 L388,555.0 L390,561.7 L390,560.9 L392,560.2 L392,559.4 L394,552.2 L394,545.1 L396,564.1 L396,562.6 L398,561.1 L398,555.8 L400,550.4 L400,545.0 L402,551.7 L402,558.3 L404,553.8 L404,549.3 L406,544.7 L406,559.2 L408,563.4 L408,545.7 L410,554.1 L410,562.5 L412,557.4 L412,552.3 L414,547.2 L414,554.3 L416,561.4 L416,561.1 L418,560.7 L418,560.4 L420,549.4 L420,538.4 L422,560.0 L422,553.7 L424,547.3 L424,564.2 L426,541.2 L426,552.7 L428,564.3 L428,556.8 L430,558.6 L430,538.7 L432,550.3 L432,561.9 L434,555.4 L434,548.9 L436,542.4 L436,552.5 L438,562.5 L438,560.4 L440,558.3 L440,554.3 L442,564.6 L442,559.0 L444,553.4 L444,561.7 L446,542.3 L446,551.3 L448,560.4 L448,558.0 L450,551.5 L450,554.7 L452,557.9 L452,562.0 L454,556.0 L454,549.9 L456,543.8 L456,564.4 L458,562.9 L458,558.5 L460,554.0 L460,549.5 L462,555.7 L462,561.9 L464,560.5 L464,555.6 L466,558.8 L466,562.0 L468,561.1 L468,560.3 L470,557.8 L470,555.3 L472,552.8 L472,558.0 L474,563.3 L474,563.0 L476,558.7 L476,554.4 L478,550.1 L478,563.5 L480,559.4 L480,555.3 L482,551.2 L482,554.6 L484,557.9 L484,560.0 L486,562.2 L486,564.3 L488,554.7 L488,558.8 L490,562.9 L490,562.4 L492,562.0 L492,561.5 L494,556.1 L494,550.8 L496,545.5 L496,557.8 L498,561.2 L498,553.5 L500,546.0 L500,538.5 L502,562.7 L502,554.6 L504,558.1 L504,561.5 L506,562.7 L506,556.8 L508,550.9 L508,545.1 L510,564.1 L510,537.4 L512,560.6 L512,549.6 L514,553.9 L514,558.1 L516,555.1 L516,559.7 L518,562.0 L518,564.2 L520,555.3 L520,546.3 L522,558.6 L522,557.2 L524,555.7 L524,554.2 L526,558.3 L526,562.3 L528,559.9 L528,557.6 L530,555.2 L530,556.8 L532,558.4 L532,545.9 L534,554.0 L534,562.2 L536,555.2 L536,558.1 L538,553.7 L538,549.4 L540,555.6 L540,561.8 L542,561.1 L542,560.4 L544,559.7 L544,551.0 L546,561.5 L546,554.7 L548,558.9 L548,563.0 L550,563.8 L550,560.2 L552,556.7 L552,553.1 L554,559.8 L554,554.3 L556,548.8 L556,562.6 L558,561.9 L558,561.2 L560,560.6 L560,541.0 L562,552.2 L562,563.3 L564,563.6 L564,563.8 L566,552.9 L566,542.0 L568,560.1 L568,557.6 L570,555.0 L570,559.0 L572,562.9 L572,550.2 L574,555.3 L574,560.4 L576,553.5 L576,546.5 L578,539.6 L578,551.2 L580,562.7 L580,560.8 L582,555.4 L582,550.0 L584,544.5 L584,553.6 L586,562.7 L586,563.1 L588,563.5 L588,563.8 L590,558.8 L590,553.8 L592,558.5 L592,563.2 L594,539.9 L594,561.9 L596,556.6 L596,551.3 L598,546.1 L598,552.5 L600,558.8 L600,559.1 L602,559.4 L602,559.7 L604,557.0 L604,554.4 L606,560.1 L606,558.3 L608,556.4 L608,554.5 L610,557.3 L610,560.1 L612,556.4 L612,552.7 L614,549.1 L614,562.4 L616,560.4 L616,558.3 L618,556.3 L618,560.1 L620,564.0 L620,561.8 L622,559.6 L622,551.7 L624,556.9 L624,562.0 L626,560.1 L626,558.2 L628,556.2 L628,563.5 L630,552.8 L630,542.1 L632,552.7 L632,563.2 L634,559.5 L634,555.9 L636,552.2 L636,564.5 L638,555.0 L638,545.5 L640,552.5 L640,559.4 L642,556.8 L642,563.7 L644,553.5 L644,543.2 L646,553.5 L646,563.9 L648,559.1 L648,554.4 L650,549.6 L650,554.5 L652,559.3 L652,553.1 L654,546.9 L654,562.2 L656,561.7 L656,561.1 L658,560.6 L658,558.8 L660,557.0 L660,555.3 L662,559.1 L662,562.9 L664,553.5 L664,544.1 L666,563.0 L666,549.6 L668,556.6 L668,563.6 L670,563.9 L670,564.3 L672,564.7 L672,561.1 L674,557.5 L674,561.8 L676,552.0 L676,542.3 L678,561.9 L678,561.1 L680,560.3 L680,559.5 L682,555.5 L682,551.5 L684,557.3 L684,563.2 L686,558.0 L686,552.7 L688,557.3 L688,561.8 L690,561.3 L690,558.7 L692,556.1 L692,564.5 L694,561.0 L694,554.1 L696,547.2 L696,561.4 L698,549.5 L698,555.2 L700,560.9 L700,557.9 L702,554.9 L702,551.9 L704,556.6 L704,561.4 L706,557.8 L706,554.2 L708,550.6 L708,562.0 L710,556.7 L710,551.4 L712,546.2 L712,560.0 L714,555.2 L714,550.4 L716,545.7 L716,553.7 L718,561.6 L718,559.6 L720,556.7 L720,564.0 L722,564.2 L722,557.6 L724,551.0 L724,563.7 L726,561.9 L726,560.2 L728,558.4 L728,561.8 L730,553.4 L730,544.9 L732,561.1 L732,557.9 L734,554.7 L734,551.5 L736,560.6 L736,562.6 L738,564.5 L738,559.6 L740,554.7 L740,549.8 L742,556.9 L742,563.9 L744,563.8 L744,544.3 L746,561.7 L746,551.8 L748,563.0 L748,558.2 L750,553.3 L750,561.6 L752,557.8 L752,563.8 L754,563.3 L754,562.8 L756,549.5 L756,562.0 L758,564.3 L758,558.0 L760,551.7 L760,545.4 L762,553.5 L762,561.7 L764,543.7 L764,553.5 L766,563.2 L766,546.7 L768,555.3 L768,564.0 L770,555.9 L770,547.9 L772,554.2 L772,560.6 L774,562.2 L774,563.7 L776,558.7 L776,553.7 L778,564.6 L778,554.6 L780,544.6 L780,563.4 L782,563.5 L782,563.5 L784,563.5 L784,556.4 L786,549.1 L786,562.5 L788,554.6 L788,546.6 L790,552.7 L790,559.0 L792,564.1 L792,553.3 L794,557.4 L794,561.6 L796,557.2 L796,560.1 L798,563.1 L798,555.7 L800,548.0 L800,560.6 L802,560.7 L802,560.7 L804,560.8 L804,549.5 L806,562.1 L806,546.4 L808,561.8 L808,554.1 L810,546.3 L810,554.2 L812,562.2 L812,556.6 L814,551.0 L814,555.5 L816,560.0 L816,561.5 L818,563.1 L818,564.6 L820,544.5 L820,561.8 L822,560.6 L822,559.5 L824,558.3 L824,555.0 L826,551.6 L826,548.3 L828,556.3 L828,564.2 L830,546.9 L830,564.4 L832,542.2 L832,553.0 L834,563.7 L834,554.2 L836,557.9 L836,561.6 L838,549.7 L838,563.9 L840,562.9 L840,561.9 L842,558.5 L842,555.1 L844,551.8 L844,557.1 L846,562.3 L846,554.3 L848,546.3 L848,538.4 L850,549.1 L850,559.9 L852,547.5 L852,553.5 L854,559.5 L854,557.0 L856,554.4 L856,551.8 L858,560.6 L858,563.1 L860,555.5 L860,548.1 L862,540.7 L862,560.7 L864,562.0 L864,560.2 L866,558.4 L866,556.7 L868,561.4 L868,541.9 L870,561.4 L870,557.4 L872,553.5 L872,549.7 L874,556.6 L874,563.5 L876,559.6 L876,555.7 L878,560.2 L878,554.1 L880,548.2 L880,562.2 L882,561.6 L882,560.9 L884,560.2 L884,558.0 L886,555.7 L886,559.4 L888,563.1 L888,560.5 L890,557.9 L890,555.2 L892,558.4 L892,561.5 L894,559.1 L894,556.8 L896,562.3 L896,557.2 L898,552.1 L898,547.0 L900,553.4 L900,560.0 L902,563.5 L902,558.3 L904,553.0 L904,547.6 L906,554.6 L906,561.7 L908,560.9 L908,560.1 L910,559.3 L910,551.1 L912,556.7 L912,562.4 L914,561.9 L914,554.8 L916,547.5 L916,540.2 L918,550.9 L918,561.8 L920,557.2 L920,552.5 L922,564.1 L922,562.1 L924,560.1 L924,556.3 L926,552.5 L926,548.7 L928,559.5 L928,552.5 L930,545.3 L930,563.4 L932,556.9 L932,550.3 L934,563.1 L934,544.3 L936,559.9 L936,560.3 L938,560.7 L938,558.5 L940,556.2 L940,554.0 L942,562.7 L942,554.0 L944,564.0 L944,556.3 L946,548.6 L946,540.9 L948,549.9 L948,559.0 L950,559.8 L950,560.5 L952,561.3 L952,555.1 L954,548.9 L954,554.3 L956,559.8 L956,549.6 L958,539.6 L958,559.6 L960,539.4 L960,549.0 L962,558.6 L962,548.6 L964,538.7 L964,561.0 L966,562.0 L966,563.0 L968,563.9 L968,551.5 L970,539.2 L970,559.7 L972,561.0 L972,562.3 L974,563.6 L974,549.8 L976,556.4 L976,562.9 L978,544.1 L978,552.4 L980,560.7 L980,544.2 L982,561.1 L982,563.5 L984,558.6 L984,553.9 L986,561.1 L986,557.5 L988,554.0 L988,559.5 L990,559.9 L990,560.4 L992,554.1 L992,548.0 L994,554.0 L994,559.9 L996,551.8 L996,543.8 L998,552.5 L998,561.1 L1000,554.7 L1000,563.5 L1002,552.3 L1002,556.3 L1004,560.4 L1004,554.6 L1006,559.9 L1006,557.2 L1008,554.4 L1008,557.9 L1010,561.4 L1010,546.4 L1012,563.3 L1012,562.4 L1014,561.5 L1014,560.6 L1016,558.4 L1016,556.2 L1018,554.0 L1018,563.9 L1020,560.2 L1020,545.3 L1022,562.7 L1022,560.7 L1024,558.6 L1024,556.5 L1026,558.6 L1026,560.8 L1028,548.6 L1028,556.6 L1030,564.6 L1030,543.2 L1032,560.2 L1032,560.9 L1034,561.6 L1034,557.6 L1036,553.7 L1036,549.7 L1038,556.2 L1038,562.8 L1040,562.9 L1040,562.9 L1042,554.7 L1042,546.5 L1044,562.6 L1044,561.9 L1046,561.3 L1046,560.7 L1048,557.0 L1048,553.3 L1050,549.6 L1050,560.7 L1052,545.2 L1052,554.2 L1054,563.2 L1054,562.1 L1056,561.0 L1056,559.9 L1058,557.9 L1058,555.8 L1060,553.7 L1060,562.9 L1062,553.5 L1062,544.7 L1064,553.2 L1064,561.0 L1066,559.3 L1066,557.9 L1068,556.6 L1068,564.3 L1070,562.2 L1070,560.5 L1072,559.2 L1072,558.0 L1074,562.3 L1074,566.0 L1076,566.7 L1076,567.4 L1078,564.4 L1078,567.8 L1080,567.8 L1080,567.9 L1082,567.8 L1082,567.9 L1084,568.2 L1084,569.4 L1086,568.6 L1086,571.0 L1084,570.2 L1084,571.6 L1082,572.0 L1082,572.2 L1080,572.1 L1080,572.3 L1078,572.3 L1078,576.4 L1076,572.9 L1076,573.7 L1074,574.7 L1074,579.2 L1072,584.4 L1072,583.1 L1070,581.5 L1070,579.5 L1068,576.9 L1068,586.4 L1066,584.9 L1066,583.1 L1064,581.1 L1064,590.7 L1062,601.1 L1062,590.3 L1060,578.9 L1060,590.2 L1058,587.6 L1058,585.1 L1056,582.5 L1056,581.2 L1054,579.8 L1054,578.5 L1052,589.5 L1052,600.5 L1050,581.6 L1050,595.2 L1048,590.6 L1048,586.1 L1046,581.6 L1046,580.8 L1044,580.1 L1044,579.3 L1042,599.0 L1042,588.9 L1040,578.9 L1040,578.9 L1038,579.0 L1038,587.0 L1036,595.1 L1036,590.2 L1034,585.3 L1034,580.5 L1032,581.3 L1032,582.2 L1030,603.0 L1030,576.8 L1028,586.6 L1028,596.3 L1026,581.5 L1026,584.1 L1024,586.8 L1024,584.2 L1022,581.6 L1022,579.1 L1020,600.4 L1020,582.2 L1018,577.7 L1018,589.8 L1016,587.1 L1016,584.4 L1014,581.7 L1014,580.6 L1012,579.5 L1012,578.4 L1010,599.1 L1010,580.7 L1008,585.0 L1008,589.3 L1006,585.9 L1006,582.5 L1004,589.1 L1004,581.9 L1002,586.9 L1002,591.9 L1000,578.2 L1000,588.9 L998,581.1 L998,591.6 L996,602.2 L996,592.4 L994,582.5 L994,589.8 L992,597.1 L992,589.6 L990,582.0 L990,582.5 L988,583.1 L988,589.8 L986,585.4 L986,581.1 L984,589.9 L984,584.1 L982,578.2 L982,581.1 L980,601.7 L980,581.6 L978,591.7 L978,601.9 L976,578.8 L976,586.8 L974,594.9 L974,578.0 L972,579.6 L972,581.2 L970,582.8 L970,607.8 L968,592.8 L968,577.6 L966,578.8 L966,580.0 L964,581.2 L964,608.5 L962,596.4 L962,584.1 L960,595.8 L960,607.6 L958,583.0 L958,607.4 L956,595.1 L956,582.7 L954,589.4 L954,596.1 L952,588.5 L952,580.9 L950,581.8 L950,582.7 L948,583.7 L948,594.8 L946,605.8 L946,596.4 L944,587.0 L944,577.6 L942,589.8 L942,579.2 L940,589.7 L940,587.0 L938,584.3 L938,581.6 L936,582.1 L936,582.5 L934,601.6 L934,578.7 L932,594.3 L932,586.2 L930,578.2 L930,600.4 L928,591.7 L928,583.1 L926,596.3 L926,591.6 L924,586.9 L924,582.4 L922,579.9 L922,577.4 L920,591.6 L920,585.9 L918,580.2 L918,593.6 L916,606.7 L916,597.7 L914,588.8 L914,580.1 L912,579.5 L912,586.5 L910,593.4 L910,583.3 L908,582.3 L908,581.3 L906,580.3 L906,589.0 L904,597.6 L904,591.0 L902,584.6 L902,578.2 L900,582.5 L900,590.5 L898,598.4 L898,592.1 L896,585.8 L896,579.7 L894,586.4 L894,583.5 L892,580.6 L892,584.5 L890,588.3 L890,585.0 L888,581.8 L888,578.7 L886,583.2 L886,587.7 L884,584.9 L884,582.2 L882,581.4 L882,580.5 L880,579.7 L880,596.9 L878,589.6 L878,582.3 L876,587.7 L876,583.0 L874,578.2 L874,586.5 L872,595.0 L872,590.3 L870,585.6 L870,580.7 L868,604.5 L868,580.7 L866,586.5 L866,584.4 L864,582.2 L864,580.0 L862,581.6 L862,606.0 L860,597.0 L860,587.9 L858,578.7 L858,581.7 L856,592.4 L856,589.3 L854,586.2 L854,583.0 L852,590.3 L852,597.7 L850,582.6 L850,595.7 L848,608.9 L848,599.2 L846,589.4 L846,579.6 L844,586.0 L844,592.5 L842,588.4 L842,584.3 L840,580.1 L840,578.9 L838,577.7 L838,595.0 L836,580.5 L836,585.0 L834,589.5 L834,577.9 L832,591.0 L832,604.2 L830,577.1 L830,598.5 L828,577.3 L828,587.0 L826,596.7 L826,592.7 L824,588.6 L824,584.5 L822,583.1 L822,581.7 L820,580.3 L820,601.4 L818,576.8 L818,578.7 L816,580.6 L816,582.4 L814,588.0 L814,593.5 L812,586.6 L812,579.8 L810,589.6 L810,599.2 L808,589.7 L808,580.3 L806,599.1 L806,579.9 L804,595.2 L804,581.5 L802,581.6 L802,581.6 L800,581.7 L800,597.1 L798,587.8 L798,578.6 L796,582.3 L796,585.9 L794,580.4 L794,585.6 L792,590.6 L792,577.5 L790,583.7 L790,591.3 L788,598.8 L788,589.0 L786,579.4 L786,595.8 L784,586.9 L784,578.2 L782,578.2 L782,578.2 L780,578.2 L780,601.3 L778,589.0 L778,576.8 L776,590.1 L776,584.0 L774,577.9 L774,579.8 L772,581.7 L772,589.5 L770,597.2 L770,587.4 L768,577.6 L768,588.1 L766,598.7 L766,578.5 L764,590.4 L764,602.4 L762,580.4 L762,590.4 L760,600.3 L760,592.6 L758,584.9 L758,577.2 L756,580.0 L756,595.3 L754,579.1 L754,578.5 L752,577.9 L752,585.1 L750,580.5 L750,590.6 L748,584.7 L748,578.8 L746,592.4 L746,580.4 L744,601.7 L744,577.8 L742,577.6 L742,586.3 L740,594.9 L740,588.9 L738,582.9 L738,576.9 L736,579.3 L736,581.7 L734,592.9 L734,588.9 L732,585.0 L732,581.1 L730,600.9 L730,590.5 L728,580.2 L728,584.4 L726,582.3 L726,580.1 L724,577.9 L724,593.5 L722,585.4 L722,577.3 L720,577.5 L720,586.5 L718,582.9 L718,580.4 L716,590.2 L716,599.9 L714,594.1 L714,588.3 L712,582.4 L712,599.3 L710,592.9 L710,586.5 L708,580.1 L708,593.9 L706,589.6 L706,585.2 L704,580.8 L704,586.5 L702,592.4 L702,588.7 L700,585.1 L700,581.4 L698,588.3 L698,595.3 L696,580.8 L696,598.1 L694,589.7 L694,581.3 L692,576.9 L692,587.2 L690,584.0 L690,580.9 L688,580.2 L688,585.8 L686,591.3 L686,584.9 L684,578.5 L684,585.7 L682,592.9 L682,588.0 L680,583.1 L680,582.1 L678,581.1 L678,580.1 L676,604.1 L676,592.2 L674,580.3 L674,585.5 L672,581.1 L672,576.7 L670,577.2 L670,577.6 L668,578.1 L668,586.6 L666,595.2 L666,578.8 L664,601.9 L664,590.4 L662,578.9 L662,583.5 L660,588.2 L660,586.1 L658,583.9 L658,581.8 L656,581.1 L656,580.4 L654,579.8 L654,598.4 L652,590.9 L652,583.3 L650,589.2 L650,595.1 L648,589.3 L648,583.5 L646,577.7 L646,590.3 L644,603.0 L644,590.4 L642,577.9 L642,586.3 L640,583.1 L640,591.6 L638,600.1 L638,588.5 L636,577.0 L636,591.9 L634,587.5 L634,583.0 L632,578.5 L632,591.4 L630,604.3 L630,591.2 L628,578.2 L628,587.0 L626,584.7 L626,582.3 L624,579.9 L624,586.2 L622,592.5 L622,582.9 L620,580.3 L620,577.6 L618,582.3 L618,586.9 L616,584.5 L616,582.0 L614,579.5 L614,595.8 L612,591.3 L612,586.8 L610,582.3 L610,585.7 L608,589.1 L608,586.9 L606,584.6 L606,582.3 L604,589.3 L604,586.1 L602,582.9 L602,583.2 L600,583.6 L600,583.9 L598,591.7 L598,599.4 L596,593.0 L596,586.6 L594,580.1 L594,607.1 L592,578.5 L592,584.3 L590,590.1 L590,583.9 L588,577.8 L588,578.2 L586,578.6 L586,579.1 L584,590.2 L584,601.4 L582,594.7 L582,588.1 L580,581.4 L580,579.2 L578,593.3 L578,607.4 L576,598.9 L576,590.4 L574,581.9 L574,588.2 L572,594.4 L572,578.8 L570,583.7 L570,588.5 L568,585.4 L568,582.3 L566,604.5 L566,591.1 L564,577.8 L564,578.1 L562,578.4 L562,592.0 L560,605.7 L560,581.7 L558,580.9 L558,580.1 L556,579.3 L556,596.1 L554,589.4 L554,582.7 L552,590.8 L552,586.5 L550,582.2 L550,577.9 L548,578.8 L548,583.8 L546,588.9 L546,580.6 L544,593.4 L544,582.8 L542,582.0 L542,581.1 L540,580.3 L540,587.8 L538,595.4 L538,590.1 L536,584.8 L536,588.3 L534,579.8 L534,589.7 L532,599.7 L532,584.4 L530,586.4 L530,588.3 L528,585.4 L528,582.5 L526,579.6 L526,584.6 L524,589.6 L524,587.7 L522,585.9 L522,584.1 L520,599.2 L520,588.2 L518,577.3 L518,580.0 L516,582.8 L516,588.4 L514,584.7 L514,589.9 L512,595.2 L512,581.7 L510,610.1 L510,577.5 L508,600.7 L508,593.6 L506,586.4 L506,579.1 L504,580.6 L504,584.8 L502,589.0 L502,579.2 L500,608.7 L500,599.6 L498,590.3 L498,581.0 L496,585.2 L496,600.2 L494,593.7 L494,587.2 L492,580.6 L492,580.0 L490,579.5 L490,578.9 L488,583.9 L488,589.0 L486,577.1 L486,579.8 L484,582.4 L484,585.0 L482,589.1 L482,593.2 L480,588.2 L480,583.2 L478,578.2 L478,594.5 L476,589.3 L476,584.0 L474,578.8 L474,578.4 L472,584.9 L472,591.3 L470,588.2 L470,585.1 L468,582.1 L468,581.1 L466,580.1 L466,584.0 L464,587.8 L464,581.9 L462,580.1 L462,587.7 L460,595.3 L460,589.8 L458,584.3 L458,578.9 L456,577.1 L456,602.2 L454,594.8 L454,587.3 L452,580.0 L452,585.0 L450,589.0 L450,592.9 L448,584.9 L448,582.0 L446,593.1 L446,604.1 L444,580.3 L444,590.5 L442,583.6 L442,576.8 L440,589.4 L440,584.5 L438,581.9 L438,579.4 L436,591.7 L436,603.9 L434,596.0 L434,588.0 L432,580.1 L432,594.3 L430,608.5 L430,584.2 L428,586.4 L428,577.2 L426,591.3 L426,605.5 L424,577.3 L424,597.9 L422,590.2 L422,582.4 L420,608.9 L420,595.4 L418,582.0 L418,581.6 L416,581.1 L416,580.7 L414,589.4 L414,598.1 L412,591.9 L412,585.6 L410,579.3 L410,589.6 L408,599.9 L408,578.2 L406,583.4 L406,601.1 L404,595.6 L404,590.0 L402,584.5 L402,592.6 L400,600.8 L400,594.2 L398,587.6 L398,581.1 L396,579.3 L396,577.5 L394,600.7 L394,591.9 L392,583.2 L392,582.3 L390,581.3 L390,580.4 L388,588.5 L388,596.7 Z" fill="#c0446e"/><path d="M388,605.3 L388,615.2 L390,625.0 L390,605.1 L392,612.8 L392,620.5 L394,622.4 L394,624.3 L396,626.2 L396,621.8 L398,617.3 L398,612.9 L400,618.0 L400,623.2 L402,619.0 L402,614.9 L404,625.6 L404,617.2 L406,608.8 L406,600.4 L408,626.0 L408,600.9 L410,625.4 L410,619.5 L412,613.6 L412,615.9 L414,618.1 L414,619.1 L416,620.1 L416,621.0 L418,593.6 L418,621.6 L420,616.8 L420,612.0 L422,607.2 L422,614.0 L424,620.8 L424,614.4 L426,608.0 L426,621.1 L428,595.2 L428,609.5 L430,623.4 L430,616.1 L432,608.9 L432,617.2 L434,625.4 L434,623.5 L436,615.9 L436,608.5 L438,601.3 L438,626.0 L440,626.0 L440,626.0 L442,620.5 L442,615.1 L444,609.7 L444,617.3 L446,624.8 L446,624.0 L448,623.3 L448,622.5 L450,616.6 L450,621.3 L452,626.0 L452,616.3 L454,606.7 L454,622.7 L456,623.5 L456,624.3 L458,614.5 L458,604.8 L460,614.6 L460,624.6 L462,607.5 L462,624.9 L464,623.9 L464,623.0 L466,622.0 L466,611.1 L468,600.1 L468,612.5 L470,625.0 L470,613.0 L472,619.3 L472,618.6 L474,618.0 L474,617.3 L476,618.6 L476,619.9 L478,614.9 L478,609.9 L480,604.8 L480,620.6 L482,615.4 L482,610.1 L484,604.9 L484,613.0 L486,621.2 L486,617.7 L488,614.1 L488,617.9 L490,621.7 L490,619.3 L492,614.2 L492,609.2 L494,604.1 L494,612.6 L496,621.0 L496,606.5 L498,621.1 L498,621.4 L500,621.7 L500,622.1 L502,615.3 L502,608.5 L504,624.7 L504,615.2 L506,605.6 L506,613.1 L508,620.5 L508,617.9 L510,615.3 L510,617.8 L512,620.3 L512,612.4 L514,604.5 L514,596.5 L516,609.2 L516,621.9 L518,613.8 L518,620.1 L520,605.6 L520,612.8 L522,620.1 L522,621.3 L524,622.5 L524,623.8 L526,616.4 L526,609.0 L528,601.5 L528,611.3 L530,621.2 L530,621.4 L532,616.8 L532,612.1 L534,607.4 L534,625.6 L536,623.1 L536,620.5 L538,600.2 L538,611.8 L540,623.6 L540,600.5 L542,611.7 L542,623.1 L544,620.9 L544,616.2 L546,611.5 L546,616.8 L548,622.2 L548,623.2 L550,624.2 L550,615.4 L552,606.4 L552,620.1 L554,619.0 L554,617.9 L556,609.5 L556,601.0 L558,592.4 L558,608.5 L560,624.7 L560,623.2 L562,621.6 L562,617.3 L564,613.0 L564,608.7 L566,613.8 L566,618.9 L568,609.2 L568,615.3 L570,621.4 L570,605.6 L572,591.6 L572,606.4 L574,622.9 L574,621.6 L576,620.3 L576,619.0 L578,608.9 L578,598.9 L580,625.0 L580,611.8 L582,618.8 L582,625.8 L584,621.8 L584,617.9 L586,614.8 L586,611.8 L588,608.9 L588,617.0 L590,624.9 L590,610.5 L592,596.3 L592,609.7 L594,622.8 L594,618.1 L596,613.5 L596,609.0 L598,615.8 L598,622.4 L600,617.7 L600,613.1 L602,619.9 L602,606.2 L604,619.8 L604,613.4 L606,607.1 L606,600.9 L608,610.2 L608,619.2 L610,610.0 L610,600.9 L612,610.7 L612,620.4 L614,601.3 L614,613.6 L616,625.9 L616,624.9 L618,612.5 L618,600.3 L620,620.9 L620,616.1 L622,611.2 L622,606.4 L624,623.7 L624,616.6 L626,609.4 L626,621.8 L628,613.8 L628,605.9 L630,614.9 L630,623.8 L632,612.4 L632,601.1 L634,621.4 L634,623.3 L636,625.2 L636,615.1 L638,605.0 L638,613.8 L640,622.5 L640,623.6 L642,624.6 L642,625.7 L644,611.6 L644,625.5 L646,602.5 L646,626.0 L648,619.5 L648,613.1 L650,606.7 L650,622.2 L652,617.9 L652,613.6 L654,609.3 L654,623.1 L656,615.6 L656,608.1 L658,614.5 L658,620.9 L660,621.5 L660,622.2 L662,599.7 L662,612.5 L664,625.2 L664,606.9 L666,616.5 L666,626.1 L668,623.3 L668,612.9 L670,602.5 L670,613.2 L672,623.9 L672,612.6 L674,601.2 L674,612.5 L676,623.9 L676,617.9 L678,612.0 L678,606.0 L680,624.6 L680,623.5 L682,622.3 L682,616.5 L684,610.6 L684,604.8 L686,612.8 L686,621.0 L688,620.1 L688,619.2 L690,603.1 L690,614.0 L692,625.0 L692,623.9 L694,622.8 L694,621.7 L696,615.9 L696,609.9 L698,616.7 L698,623.5 L700,614.4 L700,605.3 L702,624.9 L702,611.6 L704,598.3 L704,610.0 L706,621.7 L706,623.8 L708,617.3 L708,610.8 L710,604.2 L710,622.4 L712,615.0 L712,607.6 L714,600.3 L714,619.9 L716,597.1 L716,611.0 L718,624.9 L718,625.3 L720,625.7 L720,621.3 L722,616.9 L722,612.5 L724,624.2 L724,605.0 L726,612.8 L726,620.6 L728,609.1 L728,597.4 L730,610.1 L730,622.9 L732,621.8 L732,620.7 L734,611.9 L734,617.1 L736,622.3 L736,614.4 L738,606.3 L738,598.2 L740,610.8 L740,623.4 L742,624.5 L742,625.6 L744,616.7 L744,607.7 L746,598.7 L746,609.7 L748,620.7 L748,616.8 L750,612.9 L750,617.1 L752,621.4 L752,622.8 L754,612.9 L754,619.0 L756,625.2 L756,624.8 L758,624.4 L758,618.6 L760,612.7 L760,606.8 L762,615.2 L762,623.6 L764,612.3 L764,622.9 L766,613.0 L766,603.0 L768,593.0 L768,606.1 L770,619.3 L770,596.9 L772,619.3 L772,620.3 L774,621.4 L774,617.2 L776,613.0 L776,617.7 L778,611.7 L778,605.8 L780,599.9 L780,611.8 L782,623.6 L782,621.3 L784,619.0 L784,614.3 L786,618.0 L786,621.6 L788,623.2 L788,624.7 L790,626.1 L790,620.4 L792,615.0 L792,609.7 L794,626.0 L794,605.4 L796,615.3 L796,624.7 L798,623.8 L798,622.8 L800,616.0 L800,609.4 L802,620.8 L802,616.3 L804,611.8 L804,607.4 L806,616.6 L806,625.7 L808,617.2 L808,625.8 L810,620.5 L810,619.1 L812,617.6 L812,616.2 L814,618.2 L814,620.3 L816,618.5 L816,624.5 L818,620.7 L818,616.8 L820,612.8 L820,620.9 L822,621.3 L822,617.9 L824,614.4 L824,620.0 L826,622.7 L826,625.6 L828,618.1 L828,610.4 L830,617.0 L830,623.8 L832,622.5 L832,621.1 L834,619.6 L834,611.7 L836,603.6 L836,595.2 L838,623.8 L838,622.1 L840,620.3 L840,618.6 L842,595.1 L842,618.4 L844,610.6 L844,602.7 L846,594.6 L846,625.4 L848,597.8 L848,607.6 L850,617.5 L850,593.2 L852,608.1 L852,623.2 L854,613.3 L854,603.4 L856,593.4 L856,605.8 L858,618.1 L858,594.8 L860,608.3 L860,621.8 L862,598.6 L862,610.0 L864,621.4 L864,606.1 L866,591.6 L866,620.9 L868,597.4 L868,625.2 L870,620.4 L870,615.7 L872,611.0 L872,623.2 L874,619.9 L874,616.5 L876,613.1 L876,615.5 L878,618.0 L878,592.2 L880,620.3 L880,619.9 L882,615.6 L882,611.3 L884,607.1 L884,625.8 L886,614.4 L886,602.9 L888,624.8 L888,603.5 L890,624.8 L890,607.6 L892,591.6 L892,605.9 L894,621.5 L894,620.4 L896,619.4 L896,618.3 L898,613.5 L898,608.8 L900,616.7 L900,624.7 L902,612.9 L902,601.1 L904,622.3 L904,601.7 L906,620.4 L906,622.1 L908,623.9 L908,625.6 L910,614.9 L910,622.5 L912,622.4 L912,622.3 L914,622.1 L914,612.6 L916,603.0 L916,593.4 L918,621.5 L918,623.1 L920,624.7 L920,619.7 L922,614.7 L922,616.0 L924,617.4 L924,625.5 L926,611.1 L926,596.9 L928,610.5 L928,623.9 L930,622.1 L930,620.3 L932,618.5 L932,616.5 L934,614.5 L934,612.5 L936,619.1 L936,609.1 L938,599.4 L938,609.2 L940,618.9 L940,616.8 L942,614.9 L942,619.7 L944,624.5 L944,618.3 L946,612.2 L946,617.5 L948,622.8 L948,623.4 L950,613.2 L950,617.3 L952,621.4 L952,612.2 L954,603.0 L954,612.2 L956,621.4 L956,599.2 L958,612.1 L958,625.0 L960,619.8 L960,614.5 L962,609.3 L962,614.5 L964,619.6 L964,620.3 L966,614.5 L966,608.9 L968,615.0 L968,621.2 L970,603.4 L970,614.5 L972,625.3 L972,624.8 L974,624.3 L974,623.8 L976,617.1 L976,610.5 L978,618.2 L978,625.7 L980,625.6 L980,625.5 L982,620.2 L982,614.9 L984,625.8 L984,621.5 L986,616.1 L986,610.8 L988,605.5 L988,624.5 L990,607.7 L990,626.1 L992,621.8 L992,617.6 L994,625.2 L994,621.3 L996,617.5 L996,620.7 L998,621.5 L998,622.4 L1000,623.3 L1000,608.1 L1002,616.0 L1002,624.1 L1004,625.3 L1004,615.2 L1006,605.1 L1006,626.0 L1008,621.4 L1008,613.4 L1010,605.2 L1010,615.0 L1012,625.1 L1012,613.3 L1014,601.2 L1014,610.6 L1016,620.1 L1016,600.7 L1018,619.1 L1018,604.3 L1020,612.3 L1020,620.4 L1022,620.9 L1022,621.5 L1024,622.1 L1024,610.1 L1026,597.9 L1026,621.8 L1028,623.2 L1028,624.6 L1030,594.7 L1030,609.6 L1032,624.8 L1032,609.4 L1034,624.4 L1034,615.4 L1036,618.3 L1036,621.3 L1038,617.6 L1038,613.8 L1040,609.9 L1040,615.1 L1042,620.2 L1042,620.0 L1044,606.1 L1044,592.1 L1046,607.6 L1046,623.3 L1048,591.6 L1048,617.5 L1050,617.4 L1050,617.4 L1052,617.4 L1052,614.3 L1054,611.3 L1054,608.3 L1056,614.6 L1056,620.9 L1058,619.2 L1058,617.5 L1060,607.7 L1060,597.9 L1062,625.1 L1062,614.6 L1064,605.3 L1064,596.9 L1066,626.1 L1066,599.4 L1068,621.4 L1068,611.9 L1070,624.5 L1070,625.8 L1072,627.1 L1072,609.8 L1074,628.3 L1074,625.8 L1076,623.9 L1076,622.5 L1078,628.6 L1078,630.7 L1080,627.1 L1080,629.2 L1082,630.9 L1082,628.4 L1084,632.4 L1084,632.6 L1086,632.7 L1086,633.6 L1084,633.7 L1084,633.8 L1082,637.0 L1082,634.9 L1080,636.3 L1080,638.0 L1078,635.0 L1078,636.7 L1076,641.7 L1076,640.5 L1074,638.9 L1074,636.8 L1072,652.0 L1072,637.8 L1070,638.7 L1070,639.8 L1068,650.1 L1068,642.3 L1066,660.3 L1066,638.4 L1064,662.3 L1064,655.4 L1062,647.7 L1062,639.1 L1060,661.4 L1060,653.4 L1058,645.4 L1058,643.9 L1056,642.5 L1056,647.7 L1054,652.9 L1054,650.4 L1052,647.9 L1052,645.4 L1050,645.4 L1050,645.4 L1048,645.4 L1048,666.6 L1046,640.6 L1046,653.4 L1044,666.1 L1044,654.6 L1042,643.3 L1042,643.1 L1040,647.3 L1040,651.5 L1038,648.4 L1038,645.3 L1036,642.2 L1036,644.6 L1034,647.1 L1034,639.6 L1032,651.9 L1032,639.4 L1030,651.8 L1030,664.0 L1028,639.5 L1028,640.7 L1026,641.8 L1026,661.4 L1024,651.4 L1024,641.5 L1022,642.0 L1022,642.5 L1020,643.0 L1020,649.6 L1018,656.1 L1018,644.0 L1016,659.1 L1016,643.2 L1014,651.0 L1014,658.7 L1012,648.8 L1012,639.1 L1010,647.3 L1010,655.4 L1008,648.7 L1008,642.1 L1006,638.3 L1006,655.5 L1004,647.2 L1004,639.0 L1002,639.9 L1002,646.5 L1000,653.0 L1000,640.6 L998,641.3 L998,642.0 L996,642.7 L996,645.3 L994,642.2 L994,639.0 L992,645.2 L992,641.8 L990,638.3 L990,653.3 L988,639.6 L988,655.2 L986,650.8 L986,646.4 L984,642.0 L984,638.5 L982,647.4 L982,643.1 L980,638.7 L980,638.7 L978,638.6 L978,644.8 L976,651.0 L976,645.7 L974,640.2 L974,639.8 L972,639.3 L972,638.9 L970,647.8 L970,656.8 L968,642.3 L968,647.3 L966,652.4 L966,647.7 L964,643.1 L964,643.6 L962,647.8 L962,652.0 L960,647.7 L960,643.5 L958,639.1 L958,649.7 L956,660.3 L956,642.1 L954,649.6 L954,657.2 L952,649.7 L952,642.1 L950,645.4 L950,648.8 L948,640.5 L948,641.0 L946,645.3 L946,649.6 L944,644.7 L944,639.6 L942,643.5 L942,647.5 L940,645.9 L940,644.2 L938,652.1 L938,660.1 L936,652.2 L936,644.0 L934,649.4 L934,647.8 L932,646.2 L932,644.5 L930,643.1 L930,641.6 L928,640.1 L928,651.0 L926,662.1 L926,650.6 L924,638.8 L924,645.4 L922,646.5 L922,647.6 L920,643.6 L920,639.4 L918,640.7 L918,642.0 L916,665.0 L916,657.2 L914,649.4 L914,641.5 L912,641.4 L912,641.3 L910,641.2 L910,647.4 L908,638.7 L908,640.1 L906,641.5 L906,643.0 L904,658.2 L904,641.4 L902,658.7 L902,649.1 L900,639.4 L900,646.0 L898,652.5 L898,648.6 L896,644.6 L896,643.8 L894,642.9 L894,642.1 L892,654.8 L892,666.6 L890,653.4 L890,639.3 L888,656.8 L888,639.4 L886,657.2 L886,647.9 L884,638.5 L884,653.8 L882,650.4 L882,646.9 L880,643.4 L880,643.0 L878,666.0 L878,644.9 L876,646.9 L876,648.9 L874,646.1 L874,643.4 L872,640.6 L872,650.6 L870,646.8 L870,642.9 L868,639.0 L868,661.8 L866,642.5 L866,666.6 L864,654.7 L864,642.1 L862,651.5 L862,660.8 L860,641.8 L860,652.9 L858,663.9 L858,644.8 L856,654.9 L856,665.0 L854,656.9 L854,648.7 L852,640.6 L852,653.0 L850,665.2 L850,645.4 L848,653.5 L848,661.4 L846,638.8 L846,664.1 L844,657.5 L844,651.0 L842,644.5 L842,663.6 L840,644.5 L840,643.0 L838,641.5 L838,640.1 L836,663.5 L836,656.7 L834,650.1 L834,643.6 L832,642.4 L832,641.2 L830,640.1 L830,645.7 L828,651.1 L828,644.9 L826,638.7 L826,641.0 L824,643.3 L824,647.8 L822,645.0 L822,642.2 L820,642.5 L820,649.1 L818,645.9 L818,642.7 L816,639.6 L816,644.5 L814,643.0 L814,644.7 L812,646.4 L812,645.2 L810,644.0 L810,642.9 L808,638.5 L808,645.6 L806,638.6 L806,646.0 L804,653.6 L804,650.0 L802,646.3 L802,642.6 L800,651.9 L800,646.5 L798,640.9 L798,640.2 L796,639.4 L796,647.1 L794,655.2 L794,638.3 L792,651.7 L792,647.4 L790,642.9 L790,638.3 L788,639.5 L788,640.7 L786,642.0 L786,644.9 L784,648.0 L784,644.1 L782,642.2 L782,640.3 L780,650.0 L780,659.7 L778,654.9 L778,650.0 L776,645.1 L776,649.0 L774,645.6 L774,642.1 L772,643.0 L772,643.9 L770,662.1 L770,643.8 L768,654.6 L768,665.4 L766,657.2 L766,649.0 L764,640.9 L764,649.6 L762,640.4 L762,647.2 L760,654.0 L760,649.2 L758,644.4 L758,639.7 L756,639.3 L756,639.0 L754,644.1 L754,649.1 L752,641.0 L752,642.1 L750,645.6 L750,649.1 L748,645.9 L748,642.7 L746,651.7 L746,660.7 L744,653.3 L744,646.0 L742,638.7 L742,639.6 L740,640.5 L740,650.8 L738,661.1 L738,654.5 L736,647.9 L736,641.4 L734,645.7 L734,649.9 L732,642.7 L732,641.8 L730,640.9 L730,651.4 L728,661.7 L728,652.2 L726,642.7 L726,649.2 L724,655.6 L724,639.9 L722,649.4 L722,645.8 L720,642.2 L720,638.6 L718,638.9 L718,639.2 L716,650.6 L716,662.0 L714,643.4 L714,659.4 L712,653.4 L712,647.3 L710,641.3 L710,656.2 L708,650.8 L708,645.5 L706,640.2 L706,641.9 L704,651.5 L704,661.0 L702,650.1 L702,639.2 L700,655.3 L700,647.8 L698,640.4 L698,646.0 L696,651.5 L696,646.7 L694,641.8 L694,641.0 L692,640.1 L692,639.2 L690,648.2 L690,657.1 L688,643.9 L688,643.2 L686,642.5 L686,649.1 L684,655.7 L684,650.9 L682,646.2 L682,641.4 L680,640.4 L680,639.5 L678,654.7 L678,649.8 L676,645.0 L676,640.1 L674,649.4 L674,658.6 L672,649.3 L672,640.1 L670,648.9 L670,657.6 L668,649.1 L668,640.6 L666,638.3 L666,646.1 L664,654.0 L664,639.0 L662,649.4 L662,659.9 L660,641.5 L660,642.0 L658,642.6 L658,647.8 L656,653.0 L656,646.9 L654,640.7 L654,652.0 L652,648.5 L652,645.0 L650,641.4 L650,654.2 L648,648.9 L648,643.6 L646,638.4 L646,657.6 L644,638.8 L644,650.1 L642,638.6 L642,639.5 L640,640.3 L640,641.2 L638,648.4 L638,655.5 L636,647.3 L636,639.1 L634,640.6 L634,642.2 L632,658.7 L632,649.5 L630,640.2 L630,647.5 L628,654.8 L628,648.3 L626,641.8 L626,651.9 L624,646.1 L624,640.2 L622,654.4 L622,650.4 L620,646.5 L620,642.5 L618,659.4 L618,649.4 L616,639.3 L616,638.4 L614,648.5 L614,658.6 L612,642.9 L612,650.9 L610,658.9 L610,651.4 L608,643.9 L608,651.3 L606,658.9 L606,653.8 L604,648.7 L604,643.5 L602,654.5 L602,643.4 L600,648.9 L600,645.2 L598,641.3 L598,646.7 L596,652.2 L596,648.6 L594,644.8 L594,641.0 L592,651.7 L592,662.6 L590,651.0 L590,639.2 L588,645.7 L588,652.4 L586,650.0 L586,647.5 L584,645.0 L584,641.8 L582,638.5 L582,644.2 L580,649.9 L580,639.2 L578,660.5 L578,652.3 L576,644.1 L576,643.0 L574,641.9 L574,640.9 L572,654.4 L572,666.6 L570,655.1 L570,642.2 L568,647.1 L568,652.1 L566,644.1 L566,648.3 L564,652.5 L564,649.0 L562,645.5 L562,642.0 L560,640.7 L560,639.4 L558,652.7 L558,665.9 L556,658.9 L556,651.9 L554,645.0 L554,644.1 L552,643.2 L552,654.4 L550,647.1 L550,639.8 L548,640.6 L548,641.5 L546,645.9 L546,650.3 L544,646.4 L544,642.6 L542,640.8 L542,650.0 L540,659.3 L540,640.3 L538,649.9 L538,659.4 L536,642.8 L536,640.7 L534,638.7 L534,653.6 L532,649.7 L532,645.9 L530,642.1 L530,642.3 L528,650.4 L528,658.4 L526,652.3 L526,646.2 L524,640.2 L524,641.2 L522,642.2 L522,643.2 L520,649.2 L520,655.1 L518,643.2 L518,648.4 L516,641.7 L516,652.1 L514,662.5 L514,656.0 L512,649.5 L512,643.0 L510,645.1 L510,647.1 L508,645.0 L508,642.8 L506,648.9 L506,655.0 L504,647.2 L504,639.4 L502,652.7 L502,647.1 L500,641.6 L500,641.8 L498,642.1 L498,642.3 L496,654.3 L496,642.5 L494,649.4 L494,656.3 L492,652.1 L492,648.0 L490,643.9 L490,641.9 L488,645.0 L488,648.1 L486,645.2 L486,642.3 L484,649.0 L484,655.7 L482,651.4 L482,647.1 L480,642.8 L480,655.7 L478,651.5 L478,647.4 L476,643.3 L476,644.4 L474,645.5 L474,644.9 L472,644.4 L472,643.8 L470,649.0 L470,639.2 L468,649.4 L468,659.5 L466,650.6 L466,641.6 L464,640.8 L464,640.0 L462,639.3 L462,653.5 L460,639.5 L460,647.7 L458,655.7 L458,647.7 L456,639.8 L456,640.4 L454,641.0 L454,654.2 L452,646.3 L452,638.4 L450,642.2 L450,646.0 L448,641.2 L448,640.6 L446,640.0 L446,639.3 L444,645.5 L444,651.7 L442,647.3 L442,642.8 L440,638.3 L440,638.4 L438,638.4 L438,658.6 L436,652.7 L436,646.6 L434,640.4 L434,638.9 L432,645.6 L432,652.4 L430,646.5 L430,640.5 L428,651.9 L428,663.5 L426,642.4 L426,653.1 L424,647.9 L424,642.6 L422,648.2 L422,653.7 L420,649.8 L420,645.9 L418,642.0 L418,664.9 L416,642.4 L416,643.2 L414,644.0 L414,644.8 L412,646.6 L412,648.5 L410,643.6 L410,638.8 L408,658.9 L408,638.3 L406,659.3 L406,652.4 L404,645.6 L404,638.7 L402,647.4 L402,644.1 L400,640.7 L400,644.9 L398,649.1 L398,645.4 L396,641.8 L396,638.2 L394,639.8 L394,641.3 L392,642.9 L392,649.2 L390,655.4 L390,639.2 L388,647.2 L388,655.3 Z" fill="#c0446e"/></g></svg>
<svg class="a" style="left:80px;top:667px;" width="1837" height="126" viewBox="0 0 1837 126"><defs><clipPath id="c2"><rect x="80" y="667" width="1837" height="126"/></clipPath></defs><g clip-path="url(#c2)" transform="translate(-80,-667)"><path d="M1098,687.7 L1100,688.6 L1100,689.5 L1102,690.3 L1102,691.2 L1104,688.9 L1104,686.5 L1106,684.2 L1106,681.8 L1108,684.0 L1108,686.2 L1110,688.3 L1110,690.5 L1112,687.8 L1112,685.3 L1114,688.0 L1114,690.6 L1116,686.5 L1116,688.4 L1118,690.3 L1118,692.2 L1120,694.1 L1120,688.1 L1122,682.1 L1122,692.4 L1124,690.6 L1124,688.7 L1126,686.9 L1126,685.1 L1128,690.2 L1128,688.8 L1130,687.5 L1130,686.1 L1132,684.8 L1132,688.0 L1134,691.2 L1134,694.3 L1136,689.0 L1136,692.5 L1138,690.7 L1138,689.0 L1140,687.3 L1140,690.4 L1142,693.6 L1142,686.8 L1144,690.4 L1144,694.1 L1146,691.3 L1146,688.5 L1148,693.9 L1148,691.9 L1150,689.9 L1150,688.0 L1152,685.9 L1152,687.8 L1154,689.7 L1154,691.6 L1156,693.5 L1156,688.2 L1158,682.9 L1158,685.4 L1160,687.9 L1160,690.5 L1162,693.1 L1162,691.3 L1164,689.4 L1164,687.5 L1166,685.6 L1166,686.9 L1168,688.3 L1168,689.7 L1170,689.0 L1170,688.4 L1172,687.8 L1172,687.1 L1174,693.6 L1174,692.4 L1176,685.8 L1176,683.9 L1178,682.1 L1178,686.4 L1180,681.0 L1180,675.5 L1182,679.0 L1182,682.6 L1184,686.1 L1184,680.1 L1186,682.8 L1186,685.5 L1188,683.0 L1188,680.5 L1190,677.9 L1190,681.4 L1192,684.8 L1192,688.3 L1194,684.6 L1194,680.9 L1196,682.6 L1196,684.2 L1198,682.8 L1198,681.3 L1200,679.9 L1200,684.9 L1202,680.9 L1202,676.9 L1204,679.8 L1204,682.7 L1206,670.1 L1206,674.1 L1208,678.1 L1208,682.1 L1210,686.1 L1210,677.7 L1212,669.3 L1212,679.0 L1214,688.7 L1214,676.5 L1216,678.4 L1216,680.3 L1218,682.1 L1218,684.0 L1220,683.2 L1220,682.4 L1222,681.6 L1222,680.8 L1224,683.6 L1224,686.5 L1226,689.4 L1226,684.0 L1228,678.6 L1228,673.3 L1230,686.5 L1230,681.7 L1232,676.8 L1232,679.5 L1234,682.1 L1234,684.8 L1236,676.6 L1236,668.4 L1238,673.7 L1238,678.8 L1240,684.0 L1240,689.2 L1242,679.0 L1242,668.9 L1244,674.0 L1244,679.1 L1246,684.2 L1246,689.3 L1248,679.6 L1248,669.9 L1250,674.4 L1250,679.0 L1252,683.5 L1252,680.4 L1254,677.2 L1254,674.0 L1256,676.9 L1256,679.8 L1258,682.8 L1258,685.7 L1260,683.7 L1260,681.6 L1262,679.5 L1262,677.4 L1264,681.0 L1264,684.6 L1266,688.2 L1266,676.2 L1268,679.0 L1268,681.7 L1270,677.5 L1270,679.6 L1272,681.8 L1272,684.0 L1274,682.3 L1274,680.5 L1276,678.8 L1276,677.0 L1278,678.4 L1278,679.9 L1280,681.3 L1280,682.8 L1282,680.5 L1282,678.1 L1284,685.6 L1284,682.4 L1286,679.1 L1286,679.8 L1288,680.6 L1288,681.4 L1290,682.2 L1290,666.6 L1292,673.6 L1292,680.7 L1294,687.8 L1294,683.2 L1296,678.6 L1296,674.0 L1298,678.7 L1298,683.4 L1300,680.1 L1300,676.9 L1302,679.4 L1302,681.9 L1304,684.5 L1304,687.0 L1306,670.7 L1306,681.8 L1308,674.0 L1308,685.2 L1310,675.9 L1310,666.5 L1312,676.5 L1312,686.4 L1314,680.4 L1314,674.4 L1316,668.4 L1316,676.8 L1318,685.2 L1318,679.7 L1320,674.3 L1320,668.8 L1322,673.0 L1322,677.3 L1324,681.5 L1324,677.4 L1326,673.3 L1326,669.1 L1328,665.0 L1328,683.8 L1330,672.2 L1330,672.7 L1332,675.6 L1332,678.5 L1334,676.7 L1334,675.0 L1336,673.2 L1336,680.0 L1338,686.8 L1338,678.3 L1340,669.9 L1340,661.4 L1342,669.9 L1342,678.3 L1344,686.8 L1344,684.0 L1346,681.3 L1346,678.5 L1348,675.8 L1348,681.4 L1350,678.5 L1350,675.6 L1352,672.8 L1352,669.9 L1354,681.1 L1354,678.5 L1356,675.8 L1356,673.1 L1358,670.5 L1358,672.7 L1360,674.9 L1360,677.1 L1362,679.3 L1362,674.2 L1364,681.3 L1364,673.9 L1366,675.6 L1366,677.3 L1368,679.0 L1368,680.8 L1370,676.8 L1370,672.8 L1372,668.9 L1372,664.9 L1374,669.7 L1374,674.4 L1376,679.1 L1376,683.9 L1378,681.5 L1378,679.1 L1380,676.7 L1380,674.3 L1382,687.1 L1382,678.6 L1384,670.2 L1384,675.3 L1386,680.3 L1386,678.2 L1388,676.1 L1388,674.0 L1390,676.5 L1390,679.0 L1392,681.4 L1392,683.9 L1394,679.0 L1394,674.2 L1396,669.3 L1396,664.5 L1398,685.9 L1398,679.5 L1400,673.1 L1400,675.0 L1402,677.0 L1402,678.9 L1404,680.8 L1404,669.2 L1406,682.6 L1406,678.5 L1408,674.3 L1408,670.1 L1410,665.9 L1410,669.0 L1412,672.1 L1412,675.3 L1414,678.4 L1414,672.5 L1416,666.6 L1416,673.9 L1418,681.2 L1418,676.6 L1420,672.1 L1420,667.6 L1422,676.3 L1422,685.0 L1424,672.8 L1424,674.8 L1426,676.7 L1426,678.7 L1428,670.8 L1428,662.9 L1430,674.1 L1430,685.2 L1432,678.9 L1432,672.6 L1434,666.2 L1434,672.5 L1436,678.7 L1436,676.9 L1438,675.1 L1438,673.3 L1440,671.5 L1440,674.0 L1442,676.6 L1442,679.1 L1444,681.6 L1444,676.7 L1446,671.7 L1446,666.7 L1448,670.4 L1448,674.1 L1450,677.8 L1450,681.5 L1452,674.3 L1452,680.7 L1454,687.1 L1454,683.5 L1456,679.9 L1456,676.3 L1458,683.6 L1458,679.1 L1460,674.6 L1460,670.1 L1462,665.6 L1462,671.7 L1464,677.8 L1464,676.6 L1466,675.4 L1466,678.8 L1468,682.2 L1468,685.6 L1470,677.7 L1470,669.8 L1472,661.8 L1472,669.8 L1474,677.8 L1474,685.8 L1476,681.5 L1476,677.2 L1478,672.8 L1478,668.5 L1480,684.4 L1480,681.0 L1482,677.5 L1482,674.0 L1484,670.6 L1484,677.9 L1486,685.2 L1486,679.3 L1488,673.4 L1488,667.5 L1490,661.6 L1490,680.9 L1492,675.3 L1492,680.6 L1494,685.9 L1494,680.1 L1496,674.3 L1496,668.5 L1498,662.7 L1498,667.7 L1500,672.7 L1500,677.7 L1502,682.7 L1502,679.9 L1504,677.1 L1504,674.2 L1506,679.0 L1506,683.9 L1508,677.9 L1508,672.0 L1510,666.0 L1510,678.5 L1512,665.5 L1512,673.9 L1514,682.3 L1514,676.7 L1516,671.0 L1516,676.3 L1518,681.6 L1518,686.8 L1520,667.2 L1520,671.7 L1522,676.2 L1522,680.7 L1524,679.1 L1524,677.6 L1526,676.0 L1526,674.4 L1528,685.1 L1528,679.6 L1530,674.1 L1530,668.6 L1532,672.9 L1532,677.1 L1534,681.3 L1534,685.5 L1536,675.5 L1536,665.6 L1538,671.0 L1538,676.2 L1540,681.5 L1540,686.7 L1542,680.5 L1542,674.4 L1544,680.7 L1544,678.8 L1546,676.9 L1546,678.9 L1548,680.9 L1548,683.0 L1550,673.6 L1550,664.3 L1552,668.4 L1552,672.4 L1554,676.3 L1554,680.3 L1556,676.1 L1556,672.0 L1558,667.9 L1558,674.7 L1560,681.5 L1560,663.0 L1562,668.7 L1562,674.3 L1564,679.9 L1564,685.6 L1566,680.1 L1566,674.6 L1568,669.2 L1568,663.7 L1570,671.6 L1570,679.4 L1572,687.3 L1572,683.4 L1574,679.5 L1574,675.7 L1576,677.8 L1576,680.0 L1578,682.1 L1578,678.8 L1580,675.4 L1580,672.1 L1582,668.8 L1582,677.3 L1584,685.8 L1584,683.2 L1586,680.6 L1586,678.0 L1588,675.4 L1588,677.2 L1590,679.0 L1590,680.8 L1592,675.4 L1592,670.0 L1594,664.7 L1594,674.3 L1596,684.0 L1596,678.8 L1598,673.6 L1598,676.6 L1600,679.6 L1600,682.6 L1602,664.9 L1602,679.1 L1604,673.5 L1604,667.8 L1606,673.8 L1606,679.7 L1608,674.9 L1608,670.2 L1610,665.5 L1610,672.4 L1612,679.4 L1612,686.4 L1614,677.9 L1614,669.4 L1616,672.3 L1616,675.2 L1618,678.1 L1618,681.1 L1620,675.3 L1620,669.6 L1622,675.1 L1622,680.5 L1624,685.9 L1624,683.4 L1626,680.8 L1626,678.3 L1628,675.8 L1628,678.1 L1630,680.5 L1630,682.9 L1632,685.2 L1632,682.9 L1634,680.6 L1634,678.3 L1636,676.0 L1636,678.2 L1638,680.4 L1638,682.6 L1640,677.8 L1640,673.1 L1642,668.2 L1642,673.7 L1644,679.2 L1644,678.5 L1646,677.9 L1646,677.2 L1648,676.5 L1648,687.4 L1650,681.7 L1650,676.0 L1652,670.3 L1652,674.1 L1654,678.0 L1654,681.8 L1656,685.7 L1656,675.5 L1658,665.2 L1658,669.2 L1660,673.3 L1660,677.4 L1662,681.6 L1662,673.0 L1664,678.0 L1664,683.1 L1666,680.6 L1666,678.1 L1668,675.6 L1668,673.2 L1670,675.4 L1670,677.7 L1672,679.9 L1672,682.2 L1674,665.0 L1674,684.1 L1676,678.5 L1676,672.9 L1678,667.3 L1678,670.7 L1680,674.0 L1680,677.3 L1682,680.6 L1682,675.2 L1684,669.9 L1684,673.2 L1686,676.6 L1686,679.9 L1688,667.7 L1688,674.9 L1690,682.1 L1690,675.0 L1692,667.9 L1692,674.2 L1694,680.4 L1694,686.5 L1696,681.0 L1696,675.5 L1698,670.0 L1698,678.2 L1700,686.3 L1700,683.8 L1702,681.2 L1702,678.7 L1704,676.2 L1704,677.6 L1706,678.9 L1706,680.2 L1708,679.6 L1708,679.1 L1710,678.5 L1710,681.9 L1712,685.2 L1712,680.2 L1714,675.2 L1714,670.1 L1716,674.4 L1716,678.6 L1718,682.8 L1718,686.9 L1720,665.7 L1720,674.3 L1722,682.9 L1722,680.4 L1724,678.0 L1724,675.5 L1726,673.1 L1726,676.7 L1728,680.4 L1728,684.0 L1730,670.8 L1730,675.9 L1732,681.1 L1732,686.3 L1734,681.9 L1734,677.4 L1736,672.8 L1736,668.3 L1738,671.5 L1738,674.8 L1740,678.1 L1740,681.4 L1742,676.9 L1742,672.4 L1744,679.8 L1744,687.2 L1746,681.8 L1746,676.3 L1748,670.8 L1748,665.2 L1750,684.4 L1750,680.0 L1752,675.5 L1752,678.5 L1754,681.4 L1754,684.5 L1756,680.8 L1756,677.1 L1758,673.4 L1758,683.2 L1760,679.3 L1760,675.3 L1762,677.5 L1762,679.6 L1764,674.5 L1764,669.3 L1766,675.9 L1766,682.5 L1768,668.0 L1768,680.5 L1770,673.6 L1770,666.8 L1772,674.7 L1772,682.5 L1774,665.5 L1774,673.8 L1776,682.0 L1776,674.3 L1778,676.3 L1778,678.3 L1780,680.3 L1780,682.3 L1782,672.3 L1782,675.0 L1784,677.7 L1784,680.4 L1786,675.1 L1786,670.0 L1788,664.8 L1788,670.5 L1790,676.1 L1790,681.6 L1792,687.1 L1792,684.7 L1794,682.3 L1794,679.9 L1796,677.6 L1796,678.5 L1798,679.4 L1798,680.3 L1800,681.1 L1800,680.0 L1802,678.8 L1802,677.7 L1804,676.5 L1804,681.2 L1806,676.9 L1806,672.7 L1808,668.5 L1808,673.5 L1810,678.4 L1810,683.3 L1812,679.4 L1812,675.6 L1814,677.8 L1814,680.1 L1816,682.3 L1816,679.7 L1818,677.0 L1818,674.4 L1820,678.6 L1820,682.8 L1822,687.0 L1822,681.9 L1824,676.8 L1824,671.7 L1826,675.0 L1826,678.3 L1828,681.6 L1828,684.9 L1830,676.9 L1830,668.8 L1832,676.8 L1832,684.9 L1834,683.0 L1834,681.0 L1836,679.0 L1836,677.0 L1838,677.7 L1838,678.4 L1840,679.0 L1840,679.7 L1842,673.5 L1842,676.3 L1844,679.1 L1844,681.8 L1846,684.4 L1846,672.2 L1848,676.4 L1848,680.4 L1850,684.3 L1850,688.0 L1852,683.4 L1852,679.1 L1854,675.0 L1854,687.3 L1856,684.3 L1856,681.6 L1858,679.0 L1858,682.4 L1860,685.5 L1860,688.4 L1862,691.2 L1862,684.0 L1864,688.2 L1864,692.1 L1866,689.8 L1866,687.8 L1868,690.0 L1868,692.1 L1870,693.9 L1870,690.3 L1872,687.3 L1872,689.5 L1874,691.5 L1874,693.3 L1876,694.8 L1876,694.0 L1878,693.4 L1878,693.0 L1880,694.2 L1880,695.2 L1882,696.0 L1882,696.7 L1884,696.2 L1884,695.9 L1886,696.7 L1886,697.4 L1888,697.9 L1888,698.3 L1890,698.4 L1890,698.4 L1888,698.5 L1888,698.9 L1886,699.4 L1886,700.0 L1884,700.8 L1884,700.6 L1882,700.2 L1882,700.9 L1880,701.7 L1880,702.6 L1878,703.6 L1878,703.3 L1876,702.9 L1876,702.2 L1874,703.6 L1874,705.2 L1872,707.0 L1872,709.0 L1870,706.4 L1870,703.3 L1868,705.0 L1868,706.8 L1866,708.8 L1866,707.1 L1864,705.1 L1864,708.6 L1862,712.3 L1862,706.1 L1860,708.5 L1860,711.2 L1858,714.0 L1858,717.0 L1856,714.8 L1856,712.4 L1854,709.8 L1854,720.7 L1852,717.2 L1852,713.4 L1850,709.4 L1850,712.7 L1848,716.2 L1848,719.8 L1846,723.5 L1846,712.8 L1844,715.2 L1844,717.6 L1842,720.1 L1842,722.6 L1840,717.1 L1840,717.8 L1838,718.4 L1838,719.0 L1836,719.5 L1836,717.8 L1834,716.0 L1834,714.3 L1832,712.6 L1832,719.7 L1830,726.8 L1830,719.7 L1828,712.6 L1828,715.5 L1826,718.4 L1826,721.3 L1824,724.2 L1824,719.7 L1822,715.2 L1822,710.8 L1820,714.4 L1820,718.1 L1818,721.8 L1818,719.5 L1816,717.2 L1816,714.9 L1814,716.9 L1814,718.8 L1812,720.8 L1812,717.4 L1810,714.0 L1810,718.3 L1808,722.7 L1808,727.0 L1806,723.3 L1806,719.6 L1804,715.8 L1804,720.0 L1802,719.0 L1802,718.0 L1800,716.9 L1800,715.9 L1798,716.7 L1798,717.5 L1796,718.2 L1796,719.0 L1794,717.0 L1794,714.9 L1792,712.8 L1792,710.7 L1790,715.5 L1790,720.4 L1788,725.3 L1788,730.3 L1786,725.7 L1786,721.2 L1784,716.6 L1784,718.9 L1782,721.3 L1782,723.7 L1780,714.9 L1780,716.6 L1778,718.4 L1778,720.2 L1776,721.9 L1776,715.1 L1774,722.4 L1774,729.6 L1772,714.7 L1772,721.6 L1770,728.5 L1770,722.5 L1768,716.5 L1768,727.5 L1766,714.7 L1766,720.5 L1764,726.4 L1764,721.8 L1762,717.2 L1762,719.1 L1760,721.0 L1760,717.5 L1758,714.1 L1758,722.8 L1756,719.5 L1756,716.2 L1754,713.0 L1754,715.6 L1752,718.3 L1752,720.9 L1750,717.0 L1750,713.1 L1748,729.9 L1748,725.0 L1746,720.1 L1746,715.3 L1744,710.5 L1744,717.1 L1742,723.6 L1742,719.6 L1740,715.7 L1740,718.6 L1738,721.5 L1738,724.4 L1736,727.2 L1736,723.2 L1734,719.2 L1734,715.3 L1732,711.4 L1732,716.0 L1730,720.5 L1730,725.0 L1728,713.4 L1728,716.6 L1726,719.8 L1726,723.0 L1724,720.8 L1724,718.7 L1722,716.5 L1722,714.4 L1720,722.0 L1720,729.5 L1718,710.8 L1718,714.5 L1716,718.2 L1716,721.9 L1714,725.6 L1714,721.2 L1712,716.8 L1712,712.3 L1710,715.3 L1710,718.2 L1708,717.7 L1708,717.2 L1706,716.7 L1706,717.9 L1704,719.1 L1704,720.2 L1702,718.0 L1702,715.8 L1700,713.6 L1700,711.3 L1698,718.5 L1698,725.7 L1696,720.9 L1696,716.0 L1694,711.1 L1694,716.6 L1692,722.0 L1692,727.6 L1690,721.3 L1690,715.0 L1688,721.4 L1688,727.7 L1686,717.0 L1686,719.9 L1684,722.9 L1684,725.8 L1682,721.1 L1682,716.4 L1680,719.3 L1680,722.2 L1678,725.1 L1678,728.1 L1676,723.1 L1676,718.2 L1674,713.3 L1674,730.1 L1672,715.0 L1672,717.0 L1670,719.0 L1670,720.9 L1668,722.9 L1668,720.8 L1666,718.6 L1666,716.4 L1664,714.2 L1664,718.7 L1662,723.1 L1662,715.5 L1660,719.2 L1660,722.8 L1658,726.4 L1658,730.0 L1656,720.9 L1656,711.9 L1654,715.3 L1654,718.7 L1652,722.1 L1652,725.5 L1650,720.4 L1650,715.4 L1648,710.4 L1648,720.0 L1646,719.4 L1646,718.8 L1644,718.2 L1644,717.6 L1642,722.4 L1642,727.3 L1640,723.0 L1640,718.8 L1638,714.6 L1638,716.6 L1636,718.5 L1636,720.4 L1634,718.4 L1634,716.4 L1632,714.3 L1632,712.3 L1630,714.4 L1630,716.5 L1628,718.5 L1628,720.6 L1626,718.4 L1626,716.2 L1624,714.0 L1624,711.7 L1622,716.5 L1622,721.3 L1620,726.0 L1620,721.0 L1618,716.0 L1618,718.5 L1616,721.1 L1616,723.7 L1614,726.3 L1614,718.8 L1612,711.3 L1612,717.4 L1610,723.6 L1610,729.7 L1608,725.6 L1608,721.4 L1606,717.2 L1606,722.4 L1604,727.6 L1604,722.7 L1602,717.7 L1602,730.2 L1600,714.6 L1600,717.3 L1598,719.9 L1598,722.5 L1596,718.0 L1596,713.4 L1594,721.9 L1594,730.4 L1592,725.7 L1592,721.0 L1590,716.2 L1590,717.8 L1588,719.4 L1588,721.0 L1586,718.7 L1586,716.4 L1584,714.1 L1584,711.8 L1582,719.3 L1582,726.8 L1580,723.9 L1580,720.9 L1578,718.0 L1578,715.0 L1576,716.9 L1576,718.8 L1574,720.7 L1574,717.3 L1572,713.9 L1572,710.5 L1570,717.4 L1570,724.3 L1568,731.3 L1568,726.4 L1566,721.6 L1566,716.8 L1564,712.0 L1564,717.0 L1562,721.9 L1562,726.9 L1560,731.9 L1560,715.6 L1558,721.6 L1558,727.5 L1556,723.9 L1556,720.3 L1554,716.7 L1554,720.1 L1552,723.6 L1552,727.2 L1550,730.7 L1550,722.5 L1548,714.3 L1548,716.1 L1546,717.9 L1546,719.7 L1544,718.0 L1544,716.3 L1542,721.8 L1542,716.4 L1540,711.0 L1540,715.6 L1538,720.2 L1538,724.9 L1536,729.5 L1536,720.8 L1534,712.1 L1534,715.7 L1532,719.5 L1532,723.2 L1530,727.0 L1530,722.1 L1528,717.3 L1528,712.4 L1526,721.8 L1526,720.4 L1524,719.1 L1524,717.7 L1522,716.3 L1522,720.2 L1520,724.2 L1520,728.2 L1518,710.9 L1518,715.5 L1516,720.2 L1516,724.8 L1514,719.9 L1514,714.9 L1512,722.3 L1512,729.7 L1510,718.2 L1510,729.2 L1508,724.0 L1508,718.7 L1506,713.5 L1506,717.8 L1504,722.0 L1504,719.5 L1502,717.0 L1502,714.5 L1500,718.9 L1500,723.3 L1498,727.7 L1498,732.1 L1496,727.0 L1496,721.9 L1494,716.8 L1494,711.7 L1492,716.4 L1492,721.0 L1490,716.1 L1490,733.1 L1488,727.9 L1488,722.7 L1486,717.5 L1486,712.3 L1484,718.8 L1484,725.2 L1482,722.2 L1482,719.1 L1480,716.1 L1480,713.0 L1478,727.0 L1478,723.2 L1476,719.4 L1476,715.6 L1474,711.8 L1474,718.9 L1472,725.9 L1472,732.9 L1470,725.9 L1470,719.0 L1468,712.0 L1468,715.0 L1466,718.0 L1466,721.0 L1464,719.9 L1464,718.8 L1462,724.2 L1462,729.6 L1460,725.6 L1460,721.7 L1458,717.7 L1458,713.8 L1456,720.2 L1456,717.0 L1454,713.8 L1454,710.7 L1452,716.3 L1452,721.9 L1450,715.6 L1450,718.9 L1448,722.1 L1448,725.4 L1446,728.6 L1446,724.2 L1444,719.8 L1444,715.5 L1442,717.7 L1442,719.9 L1440,722.2 L1440,724.4 L1438,722.8 L1438,721.2 L1436,719.6 L1436,718.0 L1434,723.5 L1434,729.0 L1432,723.5 L1432,717.9 L1430,712.3 L1430,722.1 L1428,731.9 L1428,725.0 L1426,718.1 L1426,719.8 L1424,721.5 L1424,723.2 L1422,712.5 L1422,720.2 L1420,727.8 L1420,723.8 L1418,719.9 L1418,715.9 L1416,722.3 L1416,728.7 L1414,723.5 L1414,718.3 L1412,721.1 L1412,723.8 L1410,726.6 L1410,729.3 L1408,725.6 L1408,721.9 L1406,718.3 L1406,714.6 L1404,726.4 L1404,716.2 L1402,717.9 L1402,719.6 L1400,721.3 L1400,723.0 L1398,717.4 L1398,711.7 L1396,730.5 L1396,726.3 L1394,722.0 L1394,717.8 L1392,713.5 L1392,715.7 L1390,717.8 L1390,720.0 L1388,722.2 L1388,720.3 L1386,718.5 L1386,716.7 L1384,721.1 L1384,725.5 L1382,718.1 L1382,710.7 L1380,722.0 L1380,719.8 L1378,717.7 L1378,715.6 L1376,713.5 L1376,717.7 L1374,721.8 L1374,726.0 L1372,730.2 L1372,726.7 L1370,723.2 L1370,719.7 L1368,716.3 L1368,717.7 L1366,719.2 L1366,720.7 L1364,722.2 L1364,715.8 L1362,722.0 L1362,717.5 L1360,719.4 L1360,721.4 L1358,723.3 L1358,725.3 L1356,723.0 L1356,720.6 L1354,718.3 L1354,715.9 L1352,725.8 L1352,723.3 L1350,720.8 L1350,718.2 L1348,715.7 L1348,720.7 L1346,718.2 L1346,715.8 L1344,713.4 L1344,710.9 L1342,718.4 L1342,725.8 L1340,733.3 L1340,725.8 L1338,718.4 L1338,710.9 L1336,716.9 L1336,722.9 L1334,721.3 L1334,719.8 L1332,718.3 L1332,720.8 L1330,723.4 L1330,724.2 L1328,713.6 L1328,730.7 L1326,726.9 L1326,723.2 L1324,719.4 L1324,715.6 L1322,719.4 L1322,723.3 L1320,727.2 L1320,722.2 L1318,717.1 L1318,712.1 L1316,719.8 L1316,727.4 L1314,721.9 L1314,716.4 L1312,710.9 L1312,720.0 L1310,729.1 L1310,720.5 L1308,712.0 L1308,722.2 L1306,715.0 L1306,725.2 L1304,710.3 L1304,712.6 L1302,714.9 L1302,717.2 L1300,719.5 L1300,716.5 L1298,713.5 L1298,717.8 L1296,722.1 L1296,717.9 L1294,713.7 L1294,709.5 L1292,715.9 L1292,722.3 L1290,728.7 L1290,714.5 L1288,715.2 L1288,715.9 L1286,716.6 L1286,717.3 L1284,714.2 L1284,711.2 L1282,718.1 L1282,715.9 L1280,713.8 L1280,715.1 L1278,716.4 L1278,717.7 L1276,719.0 L1276,717.4 L1274,715.8 L1274,714.2 L1272,712.6 L1272,714.6 L1270,716.5 L1270,718.5 L1268,714.6 L1268,717.1 L1266,719.6 L1266,708.7 L1264,712.0 L1264,715.2 L1262,718.4 L1262,716.5 L1260,714.6 L1260,712.7 L1258,710.8 L1258,713.5 L1256,716.1 L1256,718.8 L1254,721.4 L1254,718.5 L1252,715.6 L1252,712.7 L1250,716.8 L1250,720.9 L1248,725.0 L1248,716.2 L1246,707.4 L1246,712.0 L1244,716.6 L1244,721.2 L1242,725.8 L1242,716.6 L1240,707.4 L1240,712.1 L1238,716.8 L1238,721.5 L1236,726.2 L1236,718.8 L1234,711.3 L1234,713.7 L1232,716.1 L1232,718.5 L1230,714.1 L1230,709.7 L1228,721.7 L1228,716.8 L1226,711.9 L1226,707.1 L1224,709.6 L1224,712.2 L1222,714.8 L1222,714.0 L1220,713.3 L1220,712.5 L1218,711.8 L1218,713.5 L1216,715.2 L1216,716.9 L1214,718.5 L1214,707.5 L1212,716.2 L1212,724.9 L1210,717.4 L1210,709.7 L1208,713.3 L1208,716.9 L1206,720.5 L1206,724.2 L1204,712.8 L1204,715.4 L1202,718.0 L1202,714.3 L1200,710.7 L1200,715.2 L1198,713.9 L1198,712.6 L1196,711.3 L1196,712.8 L1194,714.2 L1194,710.9 L1192,707.5 L1192,710.7 L1190,713.8 L1190,716.9 L1188,714.6 L1188,712.2 L1186,709.9 L1186,712.4 L1184,714.8 L1184,709.4 L1182,712.6 L1182,715.7 L1180,718.9 L1180,714.0 L1178,709.1 L1178,712.9 L1176,711.2 L1176,709.6 L1174,703.1 L1174,702.1 L1172,707.6 L1172,707.1 L1170,706.5 L1170,706.0 L1168,705.4 L1168,706.6 L1166,707.8 L1166,708.9 L1164,707.3 L1164,705.7 L1162,704.1 L1162,702.5 L1160,704.8 L1160,707.0 L1158,709.1 L1158,711.3 L1156,706.7 L1156,702.1 L1154,703.8 L1154,705.4 L1152,707.0 L1152,708.7 L1150,706.9 L1150,705.2 L1148,703.5 L1148,701.8 L1146,706.4 L1146,704.0 L1144,701.7 L1144,704.8 L1142,707.9 L1142,702.1 L1140,704.8 L1140,707.5 L1138,706.0 L1138,704.5 L1136,703.0 L1136,706.0 L1134,701.5 L1134,704.2 L1132,706.9 L1132,709.6 L1130,708.5 L1130,707.3 L1128,706.2 L1128,705.0 L1126,709.3 L1126,707.8 L1124,706.3 L1124,704.7 L1122,703.1 L1122,711.9 L1120,706.8 L1120,701.7 L1118,703.3 L1118,704.9 L1116,706.5 L1116,708.2 L1114,704.6 L1114,706.9 L1112,709.2 L1112,707.0 L1110,704.8 L1110,706.6 L1108,708.4 L1108,710.3 L1106,712.2 L1106,710.2 L1104,708.2 L1104,706.2 L1102,704.1 L1102,704.9 L1100,705.6 L1100,706.4 L1098,707.2 Z" fill="#aaaaaa"/><path d="M1098,746.5 L1100,751.8 L1100,757.9 L1102,756.6 L1102,755.2 L1104,753.9 L1104,752.5 L1106,755.6 L1106,752.9 L1108,750.2 L1108,747.6 L1110,758.0 L1110,751.7 L1112,753.2 L1112,754.8 L1114,753.2 L1114,751.7 L1116,750.2 L1116,748.8 L1118,756.5 L1118,749.9 L1120,752.4 L1120,754.8 L1122,757.2 L1122,752.6 L1124,748.0 L1124,756.1 L1126,755.0 L1126,753.9 L1128,752.9 L1128,754.1 L1130,755.4 L1130,756.6 L1132,757.8 L1132,755.4 L1134,752.9 L1134,754.1 L1136,755.3 L1136,756.4 L1138,754.2 L1138,752.1 L1140,753.7 L1140,755.4 L1142,757.0 L1142,752.2 L1144,753.9 L1144,755.5 L1146,757.1 L1146,755.9 L1148,754.7 L1148,753.6 L1150,752.4 L1150,755.1 L1152,757.9 L1152,756.1 L1154,754.2 L1154,752.4 L1156,757.9 L1156,755.9 L1158,753.9 L1158,751.8 L1160,749.8 L1160,752.0 L1162,754.3 L1162,756.5 L1164,758.8 L1164,757.2 L1166,755.7 L1166,754.2 L1168,752.6 L1168,753.5 L1170,754.3 L1170,755.2 L1172,756.0 L1172,748.4 L1174,752.7 L1174,757.1 L1176,751.1 L1176,750.2 L1178,749.2 L1178,748.2 L1180,748.5 L1180,748.9 L1182,749.2 L1182,749.6 L1184,748.7 L1184,747.9 L1186,749.1 L1186,750.3 L1188,751.5 L1188,752.7 L1190,748.0 L1190,743.3 L1192,738.6 L1192,745.3 L1194,751.9 L1194,742.8 L1196,746.7 L1196,750.6 L1198,747.3 L1198,748.8 L1200,750.4 L1200,752.1 L1202,753.7 L1202,745.7 L1204,737.7 L1204,741.7 L1206,745.8 L1206,749.9 L1208,754.0 L1208,742.4 L1210,746.4 L1210,750.5 L1212,748.5 L1212,746.4 L1214,744.4 L1214,742.4 L1216,750.0 L1216,745.4 L1218,740.9 L1218,736.3 L1220,748.7 L1220,744.6 L1222,740.4 L1222,736.3 L1224,752.6 L1224,748.4 L1226,744.2 L1226,740.0 L1228,744.3 L1228,748.7 L1230,753.1 L1230,749.5 L1232,745.9 L1232,742.4 L1234,738.8 L1234,746.0 L1236,753.3 L1236,748.0 L1238,742.7 L1238,746.9 L1240,744.9 L1240,742.9 L1242,740.9 L1242,752.2 L1244,747.3 L1244,742.3 L1246,737.4 L1246,740.3 L1248,743.2 L1248,746.1 L1250,749.0 L1250,747.3 L1252,745.5 L1252,743.8 L1254,742.1 L1254,747.4 L1256,752.8 L1256,748.5 L1258,744.2 L1258,739.9 L1260,735.6 L1260,751.5 L1262,748.2 L1262,744.9 L1264,741.6 L1264,738.2 L1266,747.7 L1266,745.8 L1268,744.0 L1268,742.1 L1270,740.3 L1270,743.4 L1272,746.6 L1272,742.5 L1274,746.3 L1274,744.8 L1276,743.4 L1276,746.3 L1278,749.2 L1278,752.0 L1280,749.9 L1280,747.7 L1282,745.6 L1282,743.5 L1284,746.3 L1284,749.1 L1286,752.0 L1286,748.3 L1288,744.6 L1288,740.9 L1290,737.3 L1290,740.5 L1292,743.8 L1292,747.1 L1294,742.8 L1294,743.7 L1296,744.6 L1296,745.5 L1298,746.4 L1298,743.3 L1300,740.3 L1300,742.9 L1302,745.6 L1302,748.2 L1304,750.9 L1304,747.9 L1306,745.0 L1306,742.1 L1308,747.1 L1308,742.9 L1310,745.2 L1310,747.5 L1312,749.8 L1312,747.4 L1314,745.0 L1314,742.5 L1316,744.4 L1316,746.2 L1318,748.0 L1318,743.6 L1320,739.3 L1320,734.9 L1322,737.9 L1322,740.8 L1324,743.8 L1324,746.7 L1326,739.9 L1326,733.2 L1328,740.6 L1328,747.9 L1330,743.5 L1330,737.4 L1332,732.8 L1332,747.5 L1334,741.3 L1334,735.1 L1336,749.8 L1336,747.2 L1338,744.7 L1338,742.2 L1340,739.7 L1340,746.7 L1342,743.9 L1342,741.2 L1344,742.3 L1344,743.4 L1346,744.6 L1346,737.7 L1348,749.4 L1348,734.3 L1350,749.5 L1350,732.8 L1352,737.5 L1352,742.2 L1354,746.9 L1354,742.2 L1356,737.5 L1356,732.8 L1358,736.2 L1358,739.5 L1360,742.9 L1360,746.3 L1362,744.1 L1362,741.8 L1364,739.6 L1364,744.1 L1366,741.1 L1366,738.1 L1368,735.0 L1368,748.5 L1370,741.4 L1370,743.6 L1372,745.8 L1372,748.0 L1374,731.1 L1374,749.4 L1376,745.2 L1376,740.9 L1378,736.7 L1378,732.4 L1380,740.7 L1380,749.0 L1382,745.2 L1382,741.5 L1384,737.7 L1384,741.5 L1386,745.3 L1386,749.1 L1388,746.6 L1388,744.1 L1390,741.7 L1390,739.3 L1392,741.7 L1392,744.1 L1394,740.1 L1394,736.3 L1396,732.5 L1396,735.5 L1398,738.4 L1398,741.3 L1400,744.1 L1400,743.3 L1402,742.5 L1402,744.1 L1404,745.6 L1404,742.5 L1406,739.5 L1406,741.2 L1408,742.8 L1408,744.3 L1410,743.6 L1410,742.8 L1412,744.1 L1412,745.5 L1414,746.8 L1414,748.2 L1416,743.6 L1416,739.0 L1418,746.1 L1418,743.1 L1420,740.1 L1420,741.9 L1422,743.7 L1422,745.6 L1424,747.4 L1424,739.6 L1426,740.9 L1426,742.2 L1428,743.6 L1428,744.9 L1430,743.5 L1430,742.1 L1432,740.6 L1432,739.1 L1434,741.1 L1434,743.2 L1436,745.4 L1436,741.2 L1438,742.1 L1438,742.9 L1440,743.7 L1440,744.6 L1442,739.7 L1442,740.7 L1444,741.8 L1444,742.9 L1446,744.0 L1446,740.5 L1448,737.0 L1448,733.4 L1450,744.1 L1450,738.9 L1452,733.6 L1452,737.6 L1454,741.6 L1454,745.7 L1456,736.6 L1456,727.4 L1458,732.8 L1458,738.3 L1460,743.9 L1460,741.2 L1462,738.5 L1462,735.7 L1464,733.0 L1464,738.2 L1466,743.4 L1466,740.8 L1468,738.2 L1468,735.5 L1470,732.9 L1470,736.7 L1472,740.4 L1472,744.1 L1474,747.8 L1474,738.6 L1476,729.3 L1476,737.0 L1478,744.6 L1478,740.1 L1480,735.6 L1480,731.2 L1482,745.0 L1482,738.7 L1484,732.4 L1484,739.8 L1486,747.1 L1486,740.2 L1488,733.4 L1488,727.0 L1490,745.3 L1490,741.0 L1492,736.7 L1492,740.8 L1494,745.0 L1494,749.1 L1496,744.8 L1496,740.5 L1498,742.0 L1498,743.4 L1500,744.9 L1500,739.9 L1502,743.4 L1502,747.0 L1504,737.0 L1504,741.4 L1506,745.7 L1506,750.0 L1508,743.1 L1508,736.3 L1510,740.5 L1510,744.7 L1512,748.9 L1512,742.2 L1514,735.6 L1514,740.2 L1516,744.8 L1516,742.4 L1518,740.0 L1518,737.6 L1520,740.4 L1520,743.2 L1522,746.0 L1522,748.8 L1524,733.3 L1524,737.2 L1526,741.1 L1526,745.0 L1528,743.3 L1528,741.7 L1530,740.0 L1530,738.3 L1532,741.7 L1532,745.1 L1534,748.4 L1534,740.7 L1536,733.0 L1536,745.6 L1538,744.2 L1538,742.8 L1540,741.4 L1540,742.5 L1542,743.6 L1542,744.7 L1544,745.8 L1544,740.9 L1546,736.2 L1546,731.5 L1548,748.6 L1548,746.5 L1550,744.5 L1550,742.5 L1552,740.6 L1552,742.5 L1554,744.4 L1554,746.3 L1556,744.9 L1556,743.5 L1558,742.2 L1558,743.0 L1560,743.8 L1560,744.6 L1562,734.5 L1562,738.7 L1564,742.9 L1564,747.0 L1566,743.4 L1566,739.8 L1568,747.5 L1568,745.7 L1570,743.8 L1570,741.9 L1572,740.1 L1572,742.2 L1574,744.3 L1574,746.5 L1576,744.9 L1576,743.3 L1578,741.6 L1578,740.0 L1580,743.1 L1580,746.2 L1582,749.4 L1582,741.3 L1584,733.0 L1584,749.8 L1586,744.9 L1586,739.9 L1588,743.5 L1588,747.1 L1590,744.6 L1590,742.1 L1592,748.8 L1592,745.2 L1594,741.5 L1594,737.8 L1596,734.1 L1596,737.0 L1598,740.0 L1598,742.9 L1600,745.8 L1600,742.6 L1602,739.3 L1602,736.0 L1604,739.1 L1604,742.1 L1606,745.2 L1606,743.3 L1608,741.4 L1608,739.5 L1610,740.5 L1610,741.5 L1612,742.5 L1612,743.5 L1614,742.1 L1614,740.8 L1616,742.8 L1616,744.9 L1618,747.0 L1618,749.1 L1620,744.0 L1620,739.0 L1622,734.0 L1622,737.7 L1624,741.4 L1624,745.1 L1626,733.2 L1626,736.5 L1628,739.8 L1628,743.2 L1630,746.5 L1630,745.1 L1632,743.6 L1632,742.1 L1634,740.7 L1634,744.9 L1636,749.1 L1636,746.7 L1638,744.4 L1638,742.0 L1640,744.4 L1640,736.5 L1642,742.9 L1642,749.3 L1644,740.1 L1644,730.8 L1646,735.2 L1646,739.7 L1648,744.3 L1648,748.9 L1650,744.0 L1650,739.1 L1652,734.1 L1652,739.2 L1654,744.3 L1654,741.5 L1656,738.7 L1656,735.8 L1658,732.9 L1658,744.2 L1660,742.7 L1660,741.3 L1662,739.8 L1662,744.4 L1664,749.1 L1664,741.9 L1666,734.6 L1666,727.3 L1668,733.9 L1668,740.6 L1670,747.2 L1670,742.4 L1672,737.6 L1672,732.8 L1674,736.7 L1674,740.6 L1676,744.5 L1676,741.6 L1678,738.7 L1678,743.9 L1680,749.0 L1680,745.4 L1682,741.7 L1682,738.1 L1684,742.5 L1684,735.5 L1686,728.5 L1686,732.3 L1688,736.0 L1688,739.8 L1690,743.5 L1690,742.4 L1692,741.3 L1692,740.2 L1694,742.6 L1694,744.9 L1696,747.1 L1696,749.4 L1698,732.4 L1698,744.9 L1700,741.8 L1700,738.8 L1702,735.8 L1702,732.8 L1704,736.3 L1704,739.7 L1706,743.1 L1706,746.4 L1708,739.8 L1708,733.4 L1710,741.2 L1710,748.9 L1712,746.6 L1712,744.3 L1714,742.0 L1714,745.8 L1716,749.5 L1716,747.2 L1718,745.0 L1718,742.8 L1720,740.6 L1720,743.3 L1722,745.9 L1722,748.6 L1724,744.5 L1724,740.4 L1726,742.2 L1726,744.0 L1728,745.8 L1728,738.0 L1730,749.9 L1730,747.3 L1732,744.6 L1732,742.0 L1734,739.4 L1734,742.1 L1736,744.7 L1736,747.4 L1738,739.6 L1738,741.2 L1740,742.9 L1740,744.5 L1742,746.2 L1742,743.9 L1744,741.5 L1744,739.1 L1746,742.6 L1746,746.2 L1748,744.1 L1748,741.9 L1750,744.5 L1750,747.1 L1752,749.7 L1752,747.2 L1754,744.6 L1754,741.9 L1756,739.3 L1756,741.0 L1758,742.6 L1758,744.3 L1760,730.8 L1760,735.4 L1762,740.0 L1762,744.7 L1764,742.9 L1764,741.2 L1766,739.4 L1766,748.1 L1768,742.1 L1768,736.0 L1770,729.9 L1770,735.6 L1772,741.3 L1772,747.1 L1774,739.9 L1774,732.7 L1776,746.5 L1776,739.4 L1778,732.4 L1778,738.6 L1780,744.9 L1780,731.9 L1782,735.0 L1782,738.0 L1784,741.1 L1784,744.2 L1786,742.4 L1786,740.7 L1788,739.0 L1788,737.3 L1790,740.4 L1790,743.5 L1792,746.5 L1792,749.5 L1794,743.3 L1794,737.2 L1796,731.2 L1796,746.7 L1798,741.7 L1798,736.8 L1800,731.9 L1800,735.6 L1802,739.3 L1802,742.9 L1804,746.6 L1804,744.1 L1806,741.6 L1806,739.1 L1808,736.6 L1808,739.3 L1810,742.0 L1810,744.7 L1812,747.4 L1812,740.8 L1814,734.2 L1814,738.3 L1816,742.5 L1816,746.7 L1818,734.2 L1818,737.8 L1820,741.4 L1820,745.1 L1822,738.3 L1822,744.9 L1824,740.9 L1824,736.8 L1826,732.6 L1826,746.5 L1828,741.6 L1828,736.6 L1830,731.5 L1830,743.4 L1832,741.8 L1832,740.3 L1834,738.7 L1834,737.2 L1836,743.4 L1836,749.7 L1838,738.5 L1838,727.2 L1840,734.3 L1840,741.3 L1842,748.5 L1842,746.2 L1844,744.1 L1844,742.0 L1846,751.0 L1846,746.3 L1848,741.8 L1848,737.6 L1850,733.6 L1850,741.6 L1852,749.1 L1852,745.4 L1854,741.9 L1854,748.5 L1856,748.3 L1856,748.2 L1858,748.1 L1858,749.6 L1860,751.1 L1860,752.4 L1862,753.7 L1862,745.4 L1864,751.6 L1864,750.1 L1866,748.8 L1866,751.9 L1868,754.8 L1868,754.0 L1870,753.3 L1870,755.2 L1872,756.9 L1872,755.6 L1874,754.5 L1874,755.6 L1876,756.5 L1876,757.4 L1878,757.4 L1878,757.4 L1880,757.6 L1880,757.8 L1882,759.1 L1882,760.2 L1884,760.1 L1884,760.1 L1886,760.3 L1886,760.6 L1888,761.4 L1888,762.0 L1890,762.1 L1890,762.1 L1888,762.2 L1888,762.8 L1886,763.7 L1886,764.0 L1884,764.1 L1884,764.1 L1882,763.9 L1882,765.1 L1880,766.5 L1880,766.7 L1878,766.8 L1878,766.8 L1876,766.8 L1876,767.7 L1874,768.7 L1874,769.9 L1872,768.5 L1872,767.0 L1870,768.9 L1870,771.0 L1868,770.2 L1868,769.2 L1866,772.4 L1866,775.9 L1864,774.4 L1864,772.6 L1862,779.7 L1862,770.1 L1860,771.5 L1860,773.0 L1858,774.6 L1858,776.3 L1856,776.1 L1856,775.9 L1854,775.6 L1854,783.1 L1852,779.1 L1852,774.8 L1850,783.3 L1850,792.3 L1848,787.7 L1848,782.8 L1846,777.7 L1846,772.3 L1844,782.4 L1844,780.1 L1842,777.6 L1842,774.9 L1840,783.1 L1840,791.1 L1838,799.1 L1838,786.3 L1836,773.6 L1836,780.7 L1834,787.8 L1834,786.0 L1832,784.2 L1832,782.5 L1830,780.7 L1830,794.2 L1828,788.5 L1828,782.8 L1826,777.2 L1826,793.0 L1824,788.2 L1824,783.6 L1822,779.0 L1822,786.5 L1820,778.8 L1820,783.0 L1818,787.1 L1818,791.1 L1816,776.9 L1816,781.7 L1814,786.5 L1814,791.2 L1812,783.6 L1812,776.1 L1810,779.2 L1810,782.3 L1808,785.4 L1808,788.5 L1806,785.6 L1806,782.8 L1804,780.0 L1804,777.1 L1802,781.3 L1802,785.4 L1800,789.6 L1800,793.8 L1798,788.3 L1798,782.6 L1796,776.9 L1796,794.6 L1794,787.7 L1794,780.8 L1792,773.8 L1792,777.2 L1790,780.6 L1790,784.1 L1788,787.6 L1788,785.7 L1786,783.8 L1786,781.8 L1784,779.8 L1784,783.3 L1782,786.8 L1782,790.3 L1780,793.8 L1780,779.0 L1778,786.1 L1778,793.2 L1776,785.2 L1776,777.2 L1774,792.9 L1774,784.7 L1772,776.5 L1772,783.1 L1770,789.6 L1770,796.0 L1768,789.1 L1768,782.2 L1766,775.4 L1766,785.3 L1764,783.2 L1764,781.2 L1762,779.2 L1762,784.5 L1760,789.8 L1760,795.0 L1758,779.7 L1758,781.6 L1756,783.5 L1756,785.4 L1754,782.4 L1754,779.4 L1752,776.4 L1752,773.5 L1750,776.5 L1750,779.5 L1748,782.4 L1748,780.0 L1746,777.5 L1746,781.6 L1744,785.6 L1744,782.9 L1742,780.2 L1742,777.5 L1740,779.4 L1740,781.3 L1738,783.2 L1738,785.1 L1736,776.1 L1736,779.2 L1734,782.2 L1734,785.3 L1732,782.3 L1732,779.3 L1730,776.3 L1730,773.3 L1728,786.9 L1728,778.0 L1726,780.0 L1726,782.1 L1724,784.1 L1724,779.5 L1722,774.8 L1722,777.8 L1720,780.9 L1720,783.9 L1718,781.4 L1718,778.9 L1716,776.3 L1716,773.8 L1714,778.0 L1714,782.3 L1712,779.7 L1712,777.1 L1710,774.5 L1710,783.2 L1708,792.1 L1708,784.8 L1706,777.3 L1706,781.1 L1704,784.9 L1704,788.8 L1702,792.8 L1702,789.4 L1700,786.0 L1700,782.5 L1698,779.0 L1698,793.3 L1696,773.9 L1696,776.5 L1694,779.1 L1694,781.7 L1692,784.3 L1692,783.1 L1690,781.9 L1690,780.6 L1688,784.8 L1688,789.1 L1686,793.4 L1686,797.7 L1684,789.7 L1684,781.7 L1682,786.7 L1682,782.6 L1680,778.5 L1680,774.3 L1678,780.2 L1678,786.1 L1676,782.8 L1676,779.4 L1674,783.9 L1674,788.3 L1672,792.8 L1672,787.3 L1670,781.8 L1670,776.4 L1668,784.0 L1668,791.5 L1666,799.0 L1666,790.7 L1664,782.4 L1664,774.2 L1662,779.5 L1662,784.8 L1660,783.1 L1660,781.5 L1658,779.9 L1658,792.7 L1656,789.3 L1656,786.1 L1654,782.9 L1654,779.7 L1652,785.5 L1652,791.2 L1650,785.6 L1650,780.0 L1648,774.5 L1648,779.7 L1646,784.9 L1646,790.0 L1644,795.0 L1644,784.4 L1642,774.0 L1642,781.3 L1640,788.5 L1640,779.6 L1638,782.3 L1638,779.6 L1636,776.9 L1636,774.3 L1634,779.0 L1634,783.8 L1632,782.1 L1632,780.5 L1630,778.8 L1630,777.2 L1628,781.0 L1628,784.8 L1626,788.5 L1626,792.3 L1624,778.8 L1624,783.0 L1622,787.2 L1622,791.4 L1620,785.7 L1620,780.0 L1618,774.3 L1618,776.6 L1616,779.0 L1616,781.3 L1614,783.7 L1614,782.2 L1612,780.6 L1612,781.7 L1610,782.9 L1610,784.0 L1608,785.1 L1608,783.0 L1606,780.9 L1606,778.7 L1604,782.2 L1604,785.6 L1602,789.1 L1602,785.4 L1600,781.7 L1600,777.9 L1598,781.3 L1598,784.6 L1596,787.9 L1596,791.3 L1594,787.1 L1594,782.9 L1592,778.7 L1592,774.6 L1590,782.2 L1590,779.3 L1588,776.5 L1588,780.6 L1586,784.7 L1586,779.0 L1584,773.4 L1584,792.6 L1582,783.1 L1582,773.9 L1580,777.5 L1580,781.1 L1578,784.6 L1578,782.7 L1576,780.8 L1576,779.0 L1574,777.2 L1574,779.6 L1572,782.1 L1572,784.5 L1570,782.4 L1570,780.3 L1568,778.1 L1568,776.0 L1566,784.7 L1566,780.7 L1564,776.6 L1564,781.3 L1562,786.0 L1562,790.8 L1560,779.3 L1560,780.2 L1558,781.2 L1558,782.1 L1556,780.6 L1556,779.0 L1554,777.4 L1554,779.6 L1552,781.7 L1552,783.9 L1550,781.7 L1550,779.5 L1548,777.2 L1548,774.9 L1546,794.2 L1546,788.9 L1544,783.5 L1544,778.0 L1542,779.2 L1542,780.4 L1540,781.7 L1540,782.9 L1538,781.4 L1538,779.8 L1536,778.2 L1536,792.6 L1534,783.8 L1534,775.0 L1532,778.8 L1532,782.6 L1530,786.5 L1530,784.6 L1528,782.7 L1528,780.8 L1526,778.9 L1526,783.3 L1524,787.7 L1524,792.1 L1522,774.5 L1522,777.7 L1520,780.9 L1520,784.1 L1518,787.3 L1518,784.6 L1516,781.9 L1516,779.2 L1514,784.3 L1514,789.5 L1512,782.0 L1512,774.5 L1510,779.2 L1510,784.0 L1508,788.8 L1508,781.0 L1506,773.2 L1506,778.1 L1504,783.0 L1504,788.0 L1502,776.7 L1502,780.7 L1500,784.7 L1500,779.0 L1498,780.7 L1498,782.3 L1496,784.0 L1496,779.2 L1494,774.3 L1494,778.9 L1492,783.6 L1492,788.3 L1490,783.5 L1490,778.6 L1488,799.4 L1488,792.1 L1486,784.3 L1486,776.5 L1484,784.8 L1484,793.2 L1482,786.1 L1482,778.9 L1480,794.6 L1480,789.6 L1478,784.5 L1478,779.4 L1476,788.0 L1476,796.7 L1474,786.2 L1474,775.7 L1472,779.9 L1472,784.1 L1470,788.4 L1470,792.6 L1468,789.6 L1468,786.7 L1466,783.7 L1466,780.7 L1464,786.6 L1464,792.5 L1462,789.4 L1462,786.3 L1460,783.3 L1460,780.2 L1458,786.5 L1458,792.7 L1456,798.9 L1456,788.4 L1454,778.1 L1454,782.8 L1452,787.3 L1452,791.8 L1450,785.9 L1450,780.0 L1448,792.1 L1448,788.0 L1446,784.0 L1446,780.0 L1444,781.3 L1444,782.5 L1442,783.7 L1442,784.9 L1440,779.3 L1440,780.3 L1438,781.3 L1438,782.2 L1436,783.2 L1436,778.5 L1434,780.9 L1434,783.3 L1432,785.6 L1432,783.9 L1430,782.2 L1430,780.6 L1428,779.0 L1428,780.5 L1426,782.1 L1426,783.6 L1424,785.0 L1424,776.1 L1422,778.2 L1422,780.3 L1420,782.4 L1420,784.4 L1418,781.0 L1418,777.6 L1416,785.7 L1416,780.5 L1414,775.3 L1414,776.8 L1412,778.3 L1412,779.9 L1410,781.4 L1410,780.5 L1408,779.6 L1408,781.4 L1406,783.2 L1406,785.1 L1404,781.7 L1404,778.2 L1402,780.0 L1402,781.8 L1400,780.8 L1400,779.9 L1398,783.1 L1398,786.3 L1396,789.7 L1396,793.1 L1394,788.8 L1394,784.4 L1392,779.9 L1392,782.7 L1390,785.4 L1390,782.7 L1388,779.9 L1388,777.1 L1386,774.2 L1386,778.6 L1384,782.9 L1384,787.2 L1382,782.9 L1382,778.7 L1380,774.4 L1380,783.8 L1378,793.2 L1378,788.4 L1376,783.5 L1376,778.7 L1374,773.9 L1374,794.7 L1372,775.5 L1372,778.0 L1370,780.5 L1370,783.0 L1368,774.9 L1368,790.2 L1366,786.8 L1366,783.3 L1364,779.9 L1364,785.1 L1362,782.5 L1362,779.9 L1360,777.4 L1360,781.3 L1358,785.1 L1358,788.9 L1356,792.8 L1356,787.4 L1354,782.1 L1354,776.8 L1352,782.1 L1352,787.4 L1350,792.7 L1350,773.8 L1348,791.1 L1348,773.9 L1346,787.2 L1346,779.4 L1344,780.7 L1344,782.0 L1342,783.3 L1342,780.1 L1340,776.9 L1340,785.0 L1338,782.1 L1338,779.3 L1336,776.4 L1336,773.5 L1334,790.1 L1334,783.1 L1332,776.0 L1332,792.8 L1330,787.5 L1330,780.5 L1328,775.6 L1328,783.7 L1326,791.8 L1326,784.4 L1324,777.0 L1324,780.2 L1322,783.5 L1322,786.7 L1320,790.0 L1320,785.2 L1318,780.5 L1318,775.7 L1316,777.7 L1316,779.7 L1314,781.7 L1314,779.1 L1312,776.5 L1312,773.9 L1310,776.4 L1310,778.9 L1308,781.5 L1308,776.8 L1306,782.3 L1306,779.1 L1304,776.0 L1304,772.8 L1302,775.7 L1302,778.6 L1300,781.5 L1300,784.5 L1298,781.1 L1298,777.7 L1296,778.7 L1296,779.8 L1294,780.8 L1294,781.8 L1292,777.1 L1292,780.7 L1290,784.3 L1290,787.9 L1288,783.9 L1288,779.9 L1286,775.9 L1286,771.8 L1284,775.0 L1284,778.1 L1282,781.2 L1282,778.9 L1280,776.6 L1280,774.2 L1278,771.9 L1278,775.0 L1276,778.2 L1276,781.5 L1274,779.9 L1274,778.3 L1272,782.5 L1272,778.0 L1270,781.5 L1270,784.9 L1268,782.9 L1268,780.9 L1266,778.9 L1266,776.9 L1264,787.3 L1264,783.6 L1262,780.0 L1262,776.4 L1260,772.7 L1260,790.2 L1258,785.5 L1258,780.8 L1256,776.1 L1256,771.4 L1254,777.3 L1254,783.2 L1252,781.3 L1252,779.5 L1250,777.6 L1250,775.7 L1248,778.9 L1248,782.1 L1246,785.3 L1246,788.5 L1244,783.1 L1244,777.7 L1242,772.3 L1242,784.7 L1240,782.5 L1240,780.3 L1238,778.2 L1238,782.8 L1236,777.0 L1236,771.2 L1234,779.2 L1234,787.2 L1232,783.3 L1232,779.3 L1230,775.4 L1230,771.5 L1228,776.4 L1228,781.2 L1226,786.0 L1226,781.4 L1224,776.7 L1224,772.1 L1222,790.2 L1222,785.6 L1220,781.0 L1220,776.5 L1218,790.2 L1218,785.2 L1216,780.2 L1216,775.2 L1214,783.6 L1214,781.3 L1212,779.1 L1212,776.9 L1210,774.6 L1210,779.1 L1208,783.6 L1208,770.8 L1206,775.4 L1206,779.9 L1204,784.4 L1204,788.9 L1202,780.1 L1202,771.3 L1200,773.1 L1200,774.9 L1198,776.7 L1198,778.4 L1196,774.8 L1196,779.1 L1194,783.5 L1194,773.3 L1192,780.7 L1192,788.2 L1190,783.0 L1190,777.8 L1188,772.6 L1188,773.9 L1186,775.3 L1186,776.6 L1184,778.0 L1184,777.0 L1182,776.1 L1182,776.5 L1180,776.9 L1180,777.3 L1178,777.7 L1178,776.6 L1176,775.6 L1176,774.5 L1174,768.5 L1174,773.5 L1172,778.6 L1172,769.7 L1170,770.7 L1170,771.7 L1168,772.6 L1168,773.6 L1166,771.8 L1166,770.1 L1164,768.3 L1164,766.5 L1162,769.1 L1162,771.7 L1160,774.4 L1160,777.0 L1158,774.6 L1158,772.2 L1156,769.8 L1156,767.5 L1154,773.9 L1154,771.8 L1152,769.7 L1152,767.5 L1150,770.7 L1150,773.9 L1148,772.6 L1148,771.2 L1146,769.8 L1146,768.4 L1144,770.3 L1144,772.2 L1142,774.1 L1142,768.5 L1140,770.5 L1140,772.4 L1138,774.3 L1138,771.8 L1136,769.2 L1136,770.6 L1134,771.9 L1134,773.3 L1132,770.5 L1132,767.6 L1130,769.0 L1130,770.5 L1128,771.9 L1128,773.4 L1126,772.1 L1126,770.9 L1124,769.6 L1124,779.0 L1122,773.7 L1122,768.3 L1120,771.1 L1120,773.9 L1118,776.8 L1118,769.1 L1116,778.2 L1116,776.4 L1114,774.7 L1114,772.9 L1112,771.2 L1112,772.9 L1110,774.7 L1110,767.4 L1108,779.6 L1108,776.5 L1106,773.4 L1106,770.2 L1104,773.8 L1104,772.2 L1102,770.6 L1102,769.0 L1100,767.5 L1100,774.6 L1098,780.8 Z" fill="#aaaaaa"/><path d="M1098,687.7 L1100,688.6 L1100,689.5 L1102,690.3 L1102,691.2 L1104,688.9 L1104,686.5 L1106,684.2 L1106,681.8 L1108,684.0 L1108,686.2 L1110,688.3 L1110,690.5 L1112,687.8 L1112,685.3 L1114,688.0 L1114,690.6 L1116,686.5 L1116,688.4 L1118,690.3 L1118,692.2 L1120,694.1 L1120,688.1 L1122,682.1 L1122,692.4 L1124,690.6 L1124,688.7 L1126,686.9 L1126,685.1 L1128,690.2 L1128,688.8 L1130,687.5 L1130,686.1 L1132,684.8 L1132,688.0 L1134,691.2 L1134,694.3 L1136,689.0 L1136,692.5 L1138,690.7 L1138,689.0 L1140,687.3 L1140,690.4 L1142,693.6 L1142,686.8 L1144,690.4 L1144,694.1 L1146,691.3 L1146,688.5 L1148,693.9 L1148,691.9 L1150,689.9 L1150,688.0 L1152,685.9 L1152,687.8 L1154,689.7 L1154,691.6 L1156,693.5 L1156,688.2 L1158,682.9 L1158,685.4 L1160,687.9 L1160,690.5 L1162,693.1 L1162,691.3 L1164,689.4 L1164,687.5 L1166,685.6 L1166,686.9 L1168,688.3 L1168,689.7 L1170,689.0 L1170,688.4 L1172,687.8 L1172,687.1 L1174,693.6 L1174,692.4 L1176,685.8 L1176,683.9 L1178,682.1 L1178,686.4 L1180,681.0 L1180,675.5 L1182,679.0 L1182,682.6 L1184,686.1 L1184,680.1 L1186,682.8 L1186,685.5 L1188,683.0 L1188,680.5 L1190,677.9 L1190,681.4 L1192,684.8 L1192,688.3 L1194,684.6 L1194,680.9 L1196,682.6 L1196,684.2 L1198,682.8 L1198,681.3 L1200,679.9 L1200,684.9 L1202,680.9 L1202,676.9 L1204,679.8 L1204,682.7 L1206,670.1 L1206,674.1 L1208,678.1 L1208,682.1 L1210,686.1 L1210,677.7 L1212,669.3 L1212,679.0 L1214,688.7 L1214,676.5 L1216,678.4 L1216,680.3 L1218,682.1 L1218,684.0 L1220,683.2 L1220,682.4 L1222,681.6 L1222,680.8 L1224,683.6 L1224,686.5 L1226,689.4 L1226,684.0 L1228,678.6 L1228,673.3 L1230,686.5 L1230,681.7 L1232,676.8 L1232,679.5 L1234,682.1 L1234,684.8 L1236,676.6 L1236,668.4 L1238,673.7 L1238,678.8 L1240,684.0 L1240,689.2 L1242,679.0 L1242,668.9 L1244,674.0 L1244,679.1 L1246,684.2 L1246,689.3 L1248,679.6 L1248,669.9 L1250,674.4 L1250,679.0 L1252,683.5 L1252,680.4 L1254,677.2 L1254,674.0 L1256,676.9 L1256,679.8 L1258,682.8 L1258,685.7 L1260,683.7 L1260,681.6 L1262,679.5 L1262,677.4 L1264,681.0 L1264,684.6 L1266,688.2 L1266,676.2 L1268,679.0 L1268,681.7 L1270,677.5 L1270,679.6 L1272,681.8 L1272,684.0 L1274,682.3 L1274,680.5 L1276,678.8 L1276,677.0 L1278,678.4 L1278,679.9 L1280,681.3 L1280,682.8 L1282,680.5 L1282,678.1 L1284,685.6 L1284,682.4 L1286,679.1 L1286,679.8 L1288,680.6 L1288,681.4 L1290,682.2 L1290,666.6 L1292,673.6 L1292,680.7 L1294,687.8 L1294,683.2 L1296,678.6 L1296,674.0 L1298,678.7 L1298,683.4 L1300,680.1 L1300,676.9 L1302,679.4 L1302,681.9 L1304,684.5 L1304,687.0 L1306,670.7 L1306,681.8 L1308,674.0 L1308,685.2 L1310,675.9 L1310,666.5 L1312,676.5 L1312,686.4 L1314,680.4 L1314,674.4 L1316,668.4 L1316,676.8 L1318,685.2 L1318,679.7 L1320,674.3 L1320,668.8 L1322,673.0 L1322,677.3 L1324,681.5 L1324,677.4 L1326,673.3 L1326,669.1 L1328,665.0 L1328,683.8 L1330,672.2 L1330,672.7 L1332,675.6 L1332,678.5 L1334,676.7 L1334,675.0 L1336,673.2 L1336,680.0 L1338,686.8 L1338,678.3 L1340,669.9 L1340,661.4 L1342,669.9 L1342,678.3 L1344,686.8 L1344,684.0 L1346,681.3 L1346,678.5 L1348,675.8 L1348,681.4 L1350,678.5 L1350,675.6 L1352,672.8 L1352,669.9 L1354,681.1 L1354,678.5 L1356,675.8 L1356,673.1 L1358,670.5 L1358,672.7 L1360,674.9 L1360,677.1 L1362,679.3 L1362,674.2 L1364,681.3 L1364,673.9 L1366,675.6 L1366,677.3 L1368,679.0 L1368,680.8 L1370,676.8 L1370,672.8 L1372,668.9 L1372,664.9 L1374,669.7 L1374,674.4 L1376,679.1 L1376,683.9 L1378,681.5 L1378,679.1 L1380,676.7 L1380,674.3 L1382,687.1 L1382,678.6 L1384,670.2 L1384,675.3 L1386,680.3 L1386,678.2 L1388,676.1 L1388,674.0 L1390,676.5 L1390,679.0 L1392,681.4 L1392,683.9 L1394,679.0 L1394,674.2 L1396,669.3 L1396,664.5 L1398,685.9 L1398,679.5 L1400,673.1 L1400,675.0 L1402,677.0 L1402,678.9 L1404,680.8 L1404,669.2 L1406,682.6 L1406,678.5 L1408,674.3 L1408,670.1 L1410,665.9 L1410,669.0 L1412,672.1 L1412,675.3 L1414,678.4 L1414,672.5 L1416,666.6 L1416,673.9 L1418,681.2 L1418,676.6 L1420,672.1 L1420,667.6 L1422,676.3 L1422,685.0 L1424,672.8 L1424,674.8 L1426,676.7 L1426,678.7 L1428,670.8 L1428,662.9 L1430,674.1 L1430,685.2 L1432,678.9 L1432,672.6 L1434,666.2 L1434,672.5 L1436,678.7 L1436,676.9 L1438,675.1 L1438,673.3 L1440,671.5 L1440,674.0 L1442,676.6 L1442,679.1 L1444,681.6 L1444,676.7 L1446,671.7 L1446,666.7 L1448,670.4 L1448,674.1 L1450,677.8 L1450,681.5 L1452,674.3 L1452,680.7 L1454,687.1 L1454,683.5 L1456,679.9 L1456,676.3 L1458,683.6 L1458,679.1 L1460,674.6 L1460,670.1 L1462,665.6 L1462,671.7 L1464,677.8 L1464,676.6 L1466,675.4 L1466,678.8 L1468,682.2 L1468,685.6 L1470,677.7 L1470,669.8 L1472,661.8 L1472,669.8 L1474,677.8 L1474,685.8 L1476,681.5 L1476,677.2 L1478,672.8 L1478,668.5 L1480,684.4 L1480,681.0 L1482,677.5 L1482,674.0 L1484,670.6 L1484,677.9 L1486,685.2 L1486,679.3 L1488,673.4 L1488,667.5 L1490,661.6 L1490,680.9 L1492,675.3 L1492,680.6 L1494,685.9 L1494,680.1 L1496,674.3 L1496,668.5 L1498,662.7 L1498,667.7 L1500,672.7 L1500,677.7 L1502,682.7 L1502,679.9 L1504,677.1 L1504,674.2 L1506,679.0 L1506,683.9 L1508,677.9 L1508,672.0 L1510,666.0 L1510,678.5 L1512,665.5 L1512,673.9 L1514,682.3 L1514,676.7 L1516,671.0 L1516,676.3 L1518,681.6 L1518,686.8 L1520,667.2 L1520,671.7 L1522,676.2 L1522,680.7 L1524,679.1 L1524,677.6 L1526,676.0 L1526,674.4 L1528,685.1 L1528,679.6 L1530,674.1 L1530,668.6 L1532,672.9 L1532,677.1 L1534,681.3 L1534,685.5 L1536,675.5 L1536,665.6 L1538,671.0 L1538,676.2 L1540,681.5 L1540,686.7 L1542,680.5 L1542,674.4 L1544,680.7 L1544,678.8 L1546,676.9 L1546,678.9 L1548,680.9 L1548,683.0 L1550,673.6 L1550,664.3 L1552,668.4 L1552,672.4 L1554,676.3 L1554,680.3 L1556,676.1 L1556,672.0 L1558,667.9 L1558,674.7 L1560,681.5 L1560,663.0 L1562,668.7 L1562,674.3 L1564,679.9 L1564,685.6 L1566,680.1 L1566,674.6 L1568,669.2 L1568,663.7 L1570,671.6 L1570,679.4 L1572,687.3 L1572,683.4 L1574,679.5 L1574,675.7 L1576,677.8 L1576,680.0 L1578,682.1 L1578,678.8 L1580,675.4 L1580,672.1 L1582,668.8 L1582,677.3 L1584,685.8 L1584,683.2 L1586,680.6 L1586,678.0 L1588,675.4 L1588,677.2 L1590,679.0 L1590,680.8 L1592,675.4 L1592,670.0 L1594,664.7 L1594,674.3 L1596,684.0 L1596,678.8 L1598,673.6 L1598,676.6 L1600,679.6 L1600,682.6 L1602,664.9 L1602,679.1 L1604,673.5 L1604,667.8 L1606,673.8 L1606,679.7 L1608,674.9 L1608,670.2 L1610,665.5 L1610,672.4 L1612,679.4 L1612,686.4 L1614,677.9 L1614,669.4 L1616,672.3 L1616,675.2 L1618,678.1 L1618,681.1 L1620,675.3 L1620,669.6 L1622,675.1 L1622,680.5 L1624,685.9 L1624,683.4 L1626,680.8 L1626,678.3 L1628,675.8 L1628,678.1 L1630,680.5 L1630,682.9 L1632,685.2 L1632,682.9 L1634,680.6 L1634,678.3 L1636,676.0 L1636,678.2 L1638,680.4 L1638,682.6 L1640,677.8 L1640,673.1 L1642,668.2 L1642,673.7 L1644,679.2 L1644,678.5 L1646,677.9 L1646,677.2 L1648,676.5 L1648,687.4 L1650,681.7 L1650,676.0 L1652,670.3 L1652,674.1 L1654,678.0 L1654,681.8 L1656,685.7 L1656,675.5 L1658,665.2 L1658,669.2 L1660,673.3 L1660,677.4 L1662,681.6 L1662,673.0 L1664,678.0 L1664,683.1 L1666,680.6 L1666,678.1 L1668,675.6 L1668,673.2 L1670,675.4 L1670,677.7 L1672,679.9 L1672,682.2 L1674,665.0 L1674,684.1 L1676,678.5 L1676,672.9 L1678,667.3 L1678,670.7 L1680,674.0 L1680,677.3 L1682,680.6 L1682,675.2 L1684,669.9 L1684,673.2 L1686,676.6 L1686,679.9 L1688,667.7 L1688,674.9 L1690,682.1 L1690,675.0 L1692,667.9 L1692,674.2 L1694,680.4 L1694,686.5 L1696,681.0 L1696,675.5 L1698,670.0 L1698,678.2 L1700,686.3 L1700,683.8 L1702,681.2 L1702,678.7 L1704,676.2 L1704,677.6 L1706,678.9 L1706,680.2 L1708,679.6 L1708,679.1 L1710,678.5 L1710,681.9 L1712,685.2 L1712,680.2 L1714,675.2 L1714,670.1 L1716,674.4 L1716,678.6 L1718,682.8 L1718,686.9 L1720,665.7 L1720,674.3 L1722,682.9 L1722,680.4 L1724,678.0 L1724,675.5 L1726,673.1 L1726,676.7 L1728,680.4 L1728,684.0 L1730,670.8 L1730,675.9 L1732,681.1 L1732,686.3 L1734,681.9 L1734,677.4 L1736,672.8 L1736,668.3 L1738,671.5 L1738,674.8 L1740,678.1 L1740,681.4 L1742,676.9 L1742,672.4 L1744,679.8 L1744,687.2 L1746,681.8 L1746,676.3 L1748,670.8 L1748,665.2 L1750,684.4 L1750,680.0 L1752,675.5 L1752,678.5 L1754,681.4 L1754,684.5 L1756,680.8 L1756,677.1 L1758,673.4 L1758,683.2 L1760,679.3 L1760,675.3 L1762,677.5 L1762,679.6 L1764,674.5 L1764,669.3 L1766,675.9 L1766,682.5 L1768,668.0 L1768,680.5 L1770,673.6 L1770,667.4 L1772,676.1 L1772,684.1 L1774,670.1 L1774,678.2 L1776,685.6 L1776,680.6 L1778,682.9 L1778,685.1 L1780,687.2 L1780,689.1 L1782,684.3 L1782,686.7 L1784,688.9 L1784,690.8 L1786,689.6 L1786,688.7 L1788,688.3 L1788,691.1 L1790,693.5 L1790,695.4 L1792,696.8 L1792,697.0 L1794,697.4 L1794,698.0 L1796,698.4 L1796,698.4 L1798,698.4 L1798,698.4 L1796,698.4 L1796,698.4 L1794,698.8 L1794,699.4 L1792,699.8 L1792,700.1 L1790,701.5 L1790,703.2 L1788,705.4 L1788,708.0 L1786,707.7 L1786,707.1 L1784,706.0 L1784,707.8 L1782,709.9 L1782,712.1 L1780,708.0 L1780,709.7 L1778,711.6 L1778,713.6 L1776,715.8 L1776,711.5 L1774,718.1 L1774,725.3 L1772,713.1 L1772,720.2 L1770,727.9 L1770,722.5 L1768,716.5 L1768,727.5 L1766,714.7 L1766,720.5 L1764,726.4 L1764,721.8 L1762,717.2 L1762,719.1 L1760,721.0 L1760,717.5 L1758,714.1 L1758,722.8 L1756,719.5 L1756,716.2 L1754,713.0 L1754,715.6 L1752,718.3 L1752,720.9 L1750,717.0 L1750,713.1 L1748,729.9 L1748,725.0 L1746,720.1 L1746,715.3 L1744,710.5 L1744,717.1 L1742,723.6 L1742,719.6 L1740,715.7 L1740,718.6 L1738,721.5 L1738,724.4 L1736,727.2 L1736,723.2 L1734,719.2 L1734,715.3 L1732,711.4 L1732,716.0 L1730,720.5 L1730,725.0 L1728,713.4 L1728,716.6 L1726,719.8 L1726,723.0 L1724,720.8 L1724,718.7 L1722,716.5 L1722,714.4 L1720,722.0 L1720,729.5 L1718,710.8 L1718,714.5 L1716,718.2 L1716,721.9 L1714,725.6 L1714,721.2 L1712,716.8 L1712,712.3 L1710,715.3 L1710,718.2 L1708,717.7 L1708,717.2 L1706,716.7 L1706,717.9 L1704,719.1 L1704,720.2 L1702,718.0 L1702,715.8 L1700,713.6 L1700,711.3 L1698,718.5 L1698,725.7 L1696,720.9 L1696,716.0 L1694,711.1 L1694,716.6 L1692,722.0 L1692,727.6 L1690,721.3 L1690,715.0 L1688,721.4 L1688,727.7 L1686,717.0 L1686,719.9 L1684,722.9 L1684,725.8 L1682,721.1 L1682,716.4 L1680,719.3 L1680,722.2 L1678,725.1 L1678,728.1 L1676,723.1 L1676,718.2 L1674,713.3 L1674,730.1 L1672,715.0 L1672,717.0 L1670,719.0 L1670,720.9 L1668,722.9 L1668,720.8 L1666,718.6 L1666,716.4 L1664,714.2 L1664,718.7 L1662,723.1 L1662,715.5 L1660,719.2 L1660,722.8 L1658,726.4 L1658,730.0 L1656,720.9 L1656,711.9 L1654,715.3 L1654,718.7 L1652,722.1 L1652,725.5 L1650,720.4 L1650,715.4 L1648,710.4 L1648,720.0 L1646,719.4 L1646,718.8 L1644,718.2 L1644,717.6 L1642,722.4 L1642,727.3 L1640,723.0 L1640,718.8 L1638,714.6 L1638,716.6 L1636,718.5 L1636,720.4 L1634,718.4 L1634,716.4 L1632,714.3 L1632,712.3 L1630,714.4 L1630,716.5 L1628,718.5 L1628,720.6 L1626,718.4 L1626,716.2 L1624,714.0 L1624,711.7 L1622,716.5 L1622,721.3 L1620,726.0 L1620,721.0 L1618,716.0 L1618,718.5 L1616,721.1 L1616,723.7 L1614,726.3 L1614,718.8 L1612,711.3 L1612,717.4 L1610,723.6 L1610,729.7 L1608,725.6 L1608,721.4 L1606,717.2 L1606,722.4 L1604,727.6 L1604,722.7 L1602,717.7 L1602,730.2 L1600,714.6 L1600,717.3 L1598,719.9 L1598,722.5 L1596,718.0 L1596,713.4 L1594,721.9 L1594,730.4 L1592,725.7 L1592,721.0 L1590,716.2 L1590,717.8 L1588,719.4 L1588,721.0 L1586,718.7 L1586,716.4 L1584,714.1 L1584,711.8 L1582,719.3 L1582,726.8 L1580,723.9 L1580,720.9 L1578,718.0 L1578,715.0 L1576,716.9 L1576,718.8 L1574,720.7 L1574,717.3 L1572,713.9 L1572,710.5 L1570,717.4 L1570,724.3 L1568,731.3 L1568,726.4 L1566,721.6 L1566,716.8 L1564,712.0 L1564,717.0 L1562,721.9 L1562,726.9 L1560,731.9 L1560,715.6 L1558,721.6 L1558,727.5 L1556,723.9 L1556,720.3 L1554,716.7 L1554,720.1 L1552,723.6 L1552,727.2 L1550,730.7 L1550,722.5 L1548,714.3 L1548,716.1 L1546,717.9 L1546,719.7 L1544,718.0 L1544,716.3 L1542,721.8 L1542,716.4 L1540,711.0 L1540,715.6 L1538,720.2 L1538,724.9 L1536,729.5 L1536,720.8 L1534,712.1 L1534,715.7 L1532,719.5 L1532,723.2 L1530,727.0 L1530,722.1 L1528,717.3 L1528,712.4 L1526,721.8 L1526,720.4 L1524,719.1 L1524,717.7 L1522,716.3 L1522,720.2 L1520,724.2 L1520,728.2 L1518,710.9 L1518,715.5 L1516,720.2 L1516,724.8 L1514,719.9 L1514,714.9 L1512,722.3 L1512,729.7 L1510,718.2 L1510,729.2 L1508,724.0 L1508,718.7 L1506,713.5 L1506,717.8 L1504,722.0 L1504,719.5 L1502,717.0 L1502,714.5 L1500,718.9 L1500,723.3 L1498,727.7 L1498,732.1 L1496,727.0 L1496,721.9 L1494,716.8 L1494,711.7 L1492,716.4 L1492,721.0 L1490,716.1 L1490,733.1 L1488,727.9 L1488,722.7 L1486,717.5 L1486,712.3 L1484,718.8 L1484,725.2 L1482,722.2 L1482,719.1 L1480,716.1 L1480,713.0 L1478,727.0 L1478,723.2 L1476,719.4 L1476,715.6 L1474,711.8 L1474,718.9 L1472,725.9 L1472,732.9 L1470,725.9 L1470,719.0 L1468,712.0 L1468,715.0 L1466,718.0 L1466,721.0 L1464,719.9 L1464,718.8 L1462,724.2 L1462,729.6 L1460,725.6 L1460,721.7 L1458,717.7 L1458,713.8 L1456,720.2 L1456,717.0 L1454,713.8 L1454,710.7 L1452,716.3 L1452,721.9 L1450,715.6 L1450,718.9 L1448,722.1 L1448,725.4 L1446,728.6 L1446,724.2 L1444,719.8 L1444,715.5 L1442,717.7 L1442,719.9 L1440,722.2 L1440,724.4 L1438,722.8 L1438,721.2 L1436,719.6 L1436,718.0 L1434,723.5 L1434,729.0 L1432,723.5 L1432,717.9 L1430,712.3 L1430,722.1 L1428,731.9 L1428,725.0 L1426,718.1 L1426,719.8 L1424,721.5 L1424,723.2 L1422,712.5 L1422,720.2 L1420,727.8 L1420,723.8 L1418,719.9 L1418,715.9 L1416,722.3 L1416,728.7 L1414,723.5 L1414,718.3 L1412,721.1 L1412,723.8 L1410,726.6 L1410,729.3 L1408,725.6 L1408,721.9 L1406,718.3 L1406,714.6 L1404,726.4 L1404,716.2 L1402,717.9 L1402,719.6 L1400,721.3 L1400,723.0 L1398,717.4 L1398,711.7 L1396,730.5 L1396,726.3 L1394,722.0 L1394,717.8 L1392,713.5 L1392,715.7 L1390,717.8 L1390,720.0 L1388,722.2 L1388,720.3 L1386,718.5 L1386,716.7 L1384,721.1 L1384,725.5 L1382,718.1 L1382,710.7 L1380,722.0 L1380,719.8 L1378,717.7 L1378,715.6 L1376,713.5 L1376,717.7 L1374,721.8 L1374,726.0 L1372,730.2 L1372,726.7 L1370,723.2 L1370,719.7 L1368,716.3 L1368,717.7 L1366,719.2 L1366,720.7 L1364,722.2 L1364,715.8 L1362,722.0 L1362,717.5 L1360,719.4 L1360,721.4 L1358,723.3 L1358,725.3 L1356,723.0 L1356,720.6 L1354,718.3 L1354,715.9 L1352,725.8 L1352,723.3 L1350,720.8 L1350,718.2 L1348,715.7 L1348,720.7 L1346,718.2 L1346,715.8 L1344,713.4 L1344,710.9 L1342,718.4 L1342,725.8 L1340,733.3 L1340,725.8 L1338,718.4 L1338,710.9 L1336,716.9 L1336,722.9 L1334,721.3 L1334,719.8 L1332,718.3 L1332,720.8 L1330,723.4 L1330,724.2 L1328,713.6 L1328,730.7 L1326,726.9 L1326,723.2 L1324,719.4 L1324,715.6 L1322,719.4 L1322,723.3 L1320,727.2 L1320,722.2 L1318,717.1 L1318,712.1 L1316,719.8 L1316,727.4 L1314,721.9 L1314,716.4 L1312,710.9 L1312,720.0 L1310,729.1 L1310,720.5 L1308,712.0 L1308,722.2 L1306,715.0 L1306,725.2 L1304,710.3 L1304,712.6 L1302,714.9 L1302,717.2 L1300,719.5 L1300,716.5 L1298,713.5 L1298,717.8 L1296,722.1 L1296,717.9 L1294,713.7 L1294,709.5 L1292,715.9 L1292,722.3 L1290,728.7 L1290,714.5 L1288,715.2 L1288,715.9 L1286,716.6 L1286,717.3 L1284,714.2 L1284,711.2 L1282,718.1 L1282,715.9 L1280,713.8 L1280,715.1 L1278,716.4 L1278,717.7 L1276,719.0 L1276,717.4 L1274,715.8 L1274,714.2 L1272,712.6 L1272,714.6 L1270,716.5 L1270,718.5 L1268,714.6 L1268,717.1 L1266,719.6 L1266,708.7 L1264,712.0 L1264,715.2 L1262,718.4 L1262,716.5 L1260,714.6 L1260,712.7 L1258,710.8 L1258,713.5 L1256,716.1 L1256,718.8 L1254,721.4 L1254,718.5 L1252,715.6 L1252,712.7 L1250,716.8 L1250,720.9 L1248,725.0 L1248,716.2 L1246,707.4 L1246,712.0 L1244,716.6 L1244,721.2 L1242,725.8 L1242,716.6 L1240,707.4 L1240,712.1 L1238,716.8 L1238,721.5 L1236,726.2 L1236,718.8 L1234,711.3 L1234,713.7 L1232,716.1 L1232,718.5 L1230,714.1 L1230,709.7 L1228,721.7 L1228,716.8 L1226,711.9 L1226,707.1 L1224,709.6 L1224,712.2 L1222,714.8 L1222,714.0 L1220,713.3 L1220,712.5 L1218,711.8 L1218,713.5 L1216,715.2 L1216,716.9 L1214,718.5 L1214,707.5 L1212,716.2 L1212,724.9 L1210,717.4 L1210,709.7 L1208,713.3 L1208,716.9 L1206,720.5 L1206,724.2 L1204,712.8 L1204,715.4 L1202,718.0 L1202,714.3 L1200,710.7 L1200,715.2 L1198,713.9 L1198,712.6 L1196,711.3 L1196,712.8 L1194,714.2 L1194,710.9 L1192,707.5 L1192,710.7 L1190,713.8 L1190,716.9 L1188,714.6 L1188,712.2 L1186,709.9 L1186,712.4 L1184,714.8 L1184,709.4 L1182,712.6 L1182,715.7 L1180,718.9 L1180,714.0 L1178,709.1 L1178,712.9 L1176,711.2 L1176,709.6 L1174,703.1 L1174,702.1 L1172,707.6 L1172,707.1 L1170,706.5 L1170,706.0 L1168,705.4 L1168,706.6 L1166,707.8 L1166,708.9 L1164,707.3 L1164,705.7 L1162,704.1 L1162,702.5 L1160,704.8 L1160,707.0 L1158,709.1 L1158,711.3 L1156,706.7 L1156,702.1 L1154,703.8 L1154,705.4 L1152,707.0 L1152,708.7 L1150,706.9 L1150,705.2 L1148,703.5 L1148,701.8 L1146,706.4 L1146,704.0 L1144,701.7 L1144,704.8 L1142,707.9 L1142,702.1 L1140,704.8 L1140,707.5 L1138,706.0 L1138,704.5 L1136,703.0 L1136,706.0 L1134,701.5 L1134,704.2 L1132,706.9 L1132,709.6 L1130,708.5 L1130,707.3 L1128,706.2 L1128,705.0 L1126,709.3 L1126,707.8 L1124,706.3 L1124,704.7 L1122,703.1 L1122,711.9 L1120,706.8 L1120,701.7 L1118,703.3 L1118,704.9 L1116,706.5 L1116,708.2 L1114,704.6 L1114,706.9 L1112,709.2 L1112,707.0 L1110,704.8 L1110,706.6 L1108,708.4 L1108,710.3 L1106,712.2 L1106,710.2 L1104,708.2 L1104,706.2 L1102,704.1 L1102,704.9 L1100,705.6 L1100,706.4 L1098,707.2 Z" fill="#7070e0"/><path d="M1098,746.5 L1100,751.8 L1100,757.9 L1102,756.6 L1102,755.2 L1104,753.9 L1104,752.5 L1106,755.6 L1106,752.9 L1108,750.2 L1108,747.6 L1110,758.0 L1110,751.7 L1112,753.2 L1112,754.8 L1114,753.2 L1114,751.7 L1116,750.2 L1116,748.8 L1118,756.5 L1118,749.9 L1120,752.4 L1120,754.8 L1122,757.2 L1122,752.6 L1124,748.0 L1124,756.1 L1126,755.0 L1126,753.9 L1128,752.9 L1128,754.1 L1130,755.4 L1130,756.6 L1132,757.8 L1132,755.4 L1134,752.9 L1134,754.1 L1136,755.3 L1136,756.4 L1138,754.2 L1138,752.1 L1140,753.7 L1140,755.4 L1142,757.0 L1142,752.2 L1144,753.9 L1144,755.5 L1146,757.1 L1146,755.9 L1148,754.7 L1148,753.6 L1150,752.4 L1150,755.1 L1152,757.9 L1152,756.1 L1154,754.2 L1154,752.4 L1156,757.9 L1156,755.9 L1158,753.9 L1158,751.8 L1160,749.8 L1160,752.0 L1162,754.3 L1162,756.5 L1164,758.8 L1164,757.2 L1166,755.7 L1166,754.2 L1168,752.6 L1168,753.5 L1170,754.3 L1170,755.2 L1172,756.0 L1172,748.4 L1174,752.7 L1174,757.1 L1176,751.1 L1176,750.2 L1178,749.2 L1178,748.2 L1180,748.5 L1180,748.9 L1182,749.2 L1182,749.6 L1184,748.7 L1184,747.9 L1186,749.1 L1186,750.3 L1188,751.5 L1188,752.7 L1190,748.0 L1190,743.3 L1192,738.6 L1192,745.3 L1194,751.9 L1194,742.8 L1196,746.7 L1196,750.6 L1198,747.3 L1198,748.8 L1200,750.4 L1200,752.1 L1202,753.7 L1202,745.7 L1204,737.7 L1204,741.7 L1206,745.8 L1206,749.9 L1208,754.0 L1208,742.4 L1210,746.4 L1210,750.5 L1212,748.5 L1212,746.4 L1214,744.4 L1214,742.4 L1216,750.0 L1216,745.4 L1218,740.9 L1218,736.3 L1220,748.7 L1220,744.6 L1222,740.4 L1222,736.3 L1224,752.6 L1224,748.4 L1226,744.2 L1226,740.0 L1228,744.3 L1228,748.7 L1230,753.1 L1230,749.5 L1232,745.9 L1232,742.4 L1234,738.8 L1234,746.0 L1236,753.3 L1236,748.0 L1238,742.7 L1238,746.9 L1240,744.9 L1240,742.9 L1242,740.9 L1242,752.2 L1244,747.3 L1244,742.3 L1246,737.4 L1246,740.3 L1248,743.2 L1248,746.1 L1250,749.0 L1250,747.3 L1252,745.5 L1252,743.8 L1254,742.1 L1254,747.4 L1256,752.8 L1256,748.5 L1258,744.2 L1258,739.9 L1260,735.6 L1260,751.5 L1262,748.2 L1262,744.9 L1264,741.6 L1264,738.2 L1266,747.7 L1266,745.8 L1268,744.0 L1268,742.1 L1270,740.3 L1270,743.4 L1272,746.6 L1272,742.5 L1274,746.3 L1274,744.8 L1276,743.4 L1276,746.3 L1278,749.2 L1278,752.0 L1280,749.9 L1280,747.7 L1282,745.6 L1282,743.5 L1284,746.3 L1284,749.1 L1286,752.0 L1286,748.3 L1288,744.6 L1288,740.9 L1290,737.3 L1290,740.5 L1292,743.8 L1292,747.1 L1294,742.8 L1294,743.7 L1296,744.6 L1296,745.5 L1298,746.4 L1298,743.3 L1300,740.3 L1300,742.9 L1302,745.6 L1302,748.2 L1304,750.9 L1304,747.9 L1306,745.0 L1306,742.1 L1308,747.1 L1308,742.9 L1310,745.2 L1310,747.5 L1312,749.8 L1312,747.4 L1314,745.0 L1314,742.5 L1316,744.4 L1316,746.2 L1318,748.0 L1318,743.6 L1320,739.3 L1320,734.9 L1322,737.9 L1322,740.8 L1324,743.8 L1324,746.7 L1326,739.9 L1326,733.2 L1328,740.6 L1328,747.9 L1330,743.5 L1330,737.4 L1332,732.8 L1332,747.5 L1334,741.3 L1334,735.1 L1336,749.8 L1336,747.2 L1338,744.7 L1338,742.2 L1340,739.7 L1340,746.7 L1342,743.9 L1342,741.2 L1344,742.3 L1344,743.4 L1346,744.6 L1346,737.7 L1348,749.4 L1348,734.3 L1350,749.5 L1350,732.8 L1352,737.5 L1352,742.2 L1354,746.9 L1354,742.2 L1356,737.5 L1356,732.8 L1358,736.2 L1358,739.5 L1360,742.9 L1360,746.3 L1362,744.1 L1362,741.8 L1364,739.6 L1364,744.1 L1366,741.1 L1366,738.1 L1368,735.0 L1368,748.5 L1370,741.4 L1370,743.6 L1372,745.8 L1372,748.0 L1374,731.1 L1374,749.4 L1376,745.2 L1376,740.9 L1378,736.7 L1378,732.4 L1380,740.7 L1380,749.0 L1382,745.2 L1382,741.5 L1384,737.7 L1384,741.5 L1386,745.3 L1386,749.1 L1388,746.6 L1388,744.1 L1390,741.7 L1390,739.3 L1392,741.7 L1392,744.1 L1394,740.1 L1394,736.3 L1396,732.5 L1396,735.5 L1398,738.4 L1398,741.3 L1400,744.1 L1400,743.3 L1402,742.5 L1402,744.1 L1404,745.6 L1404,742.5 L1406,739.5 L1406,741.2 L1408,742.8 L1408,744.3 L1410,743.6 L1410,742.8 L1412,744.1 L1412,745.5 L1414,746.8 L1414,748.2 L1416,743.6 L1416,739.0 L1418,746.1 L1418,743.1 L1420,740.1 L1420,741.9 L1422,743.7 L1422,745.6 L1424,747.4 L1424,739.6 L1426,740.9 L1426,742.2 L1428,743.6 L1428,744.9 L1430,743.5 L1430,742.1 L1432,740.6 L1432,739.1 L1434,741.1 L1434,743.2 L1436,745.4 L1436,741.2 L1438,742.1 L1438,742.9 L1440,743.7 L1440,744.6 L1442,739.7 L1442,740.7 L1444,741.8 L1444,742.9 L1446,744.0 L1446,740.5 L1448,737.0 L1448,733.4 L1450,744.1 L1450,738.9 L1452,733.6 L1452,737.6 L1454,741.6 L1454,745.7 L1456,736.6 L1456,727.4 L1458,732.8 L1458,738.3 L1460,743.9 L1460,741.2 L1462,738.5 L1462,735.7 L1464,733.0 L1464,738.2 L1466,743.4 L1466,740.8 L1468,738.2 L1468,735.5 L1470,732.9 L1470,736.7 L1472,740.4 L1472,744.1 L1474,747.8 L1474,738.6 L1476,729.3 L1476,737.0 L1478,744.6 L1478,740.1 L1480,735.6 L1480,731.2 L1482,745.0 L1482,738.7 L1484,732.4 L1484,739.8 L1486,747.1 L1486,740.2 L1488,733.4 L1488,727.0 L1490,745.3 L1490,741.0 L1492,736.7 L1492,740.8 L1494,745.0 L1494,749.1 L1496,744.8 L1496,740.5 L1498,742.0 L1498,743.4 L1500,744.9 L1500,739.9 L1502,743.4 L1502,747.0 L1504,737.0 L1504,741.4 L1506,745.7 L1506,750.0 L1508,743.1 L1508,736.3 L1510,740.5 L1510,744.7 L1512,748.9 L1512,742.2 L1514,735.6 L1514,740.2 L1516,744.8 L1516,742.4 L1518,740.0 L1518,737.6 L1520,740.4 L1520,743.2 L1522,746.0 L1522,748.8 L1524,733.3 L1524,737.2 L1526,741.1 L1526,745.0 L1528,743.3 L1528,741.7 L1530,740.0 L1530,738.3 L1532,741.7 L1532,745.1 L1534,748.4 L1534,740.7 L1536,733.0 L1536,745.6 L1538,744.2 L1538,742.8 L1540,741.4 L1540,742.5 L1542,743.6 L1542,744.7 L1544,745.8 L1544,740.9 L1546,736.2 L1546,731.5 L1548,748.6 L1548,746.5 L1550,744.5 L1550,742.5 L1552,740.6 L1552,742.5 L1554,744.4 L1554,746.3 L1556,744.9 L1556,743.5 L1558,742.2 L1558,743.0 L1560,743.8 L1560,744.6 L1562,734.5 L1562,738.7 L1564,742.9 L1564,747.0 L1566,743.4 L1566,739.8 L1568,747.5 L1568,745.7 L1570,743.8 L1570,741.9 L1572,740.1 L1572,742.2 L1574,744.3 L1574,746.5 L1576,744.9 L1576,743.3 L1578,741.6 L1578,740.0 L1580,743.1 L1580,746.2 L1582,749.4 L1582,741.3 L1584,733.0 L1584,749.8 L1586,744.9 L1586,739.9 L1588,743.5 L1588,747.1 L1590,744.6 L1590,742.1 L1592,748.8 L1592,745.2 L1594,741.5 L1594,737.8 L1596,734.1 L1596,737.0 L1598,740.0 L1598,742.9 L1600,745.8 L1600,742.6 L1602,739.3 L1602,736.0 L1604,739.1 L1604,742.1 L1606,745.2 L1606,743.3 L1608,741.4 L1608,739.5 L1610,740.5 L1610,741.5 L1612,742.5 L1612,743.5 L1614,742.1 L1614,740.8 L1616,742.8 L1616,744.9 L1618,747.0 L1618,749.1 L1620,744.0 L1620,739.0 L1622,734.0 L1622,737.7 L1624,741.4 L1624,745.1 L1626,733.2 L1626,736.5 L1628,739.8 L1628,743.2 L1630,746.5 L1630,745.1 L1632,743.6 L1632,742.1 L1634,740.7 L1634,744.9 L1636,749.1 L1636,746.7 L1638,744.4 L1638,742.0 L1640,744.4 L1640,736.5 L1642,742.9 L1642,749.3 L1644,740.1 L1644,730.8 L1646,735.2 L1646,739.7 L1648,744.3 L1648,748.9 L1650,744.0 L1650,739.1 L1652,734.1 L1652,739.2 L1654,744.3 L1654,741.5 L1656,738.7 L1656,735.8 L1658,732.9 L1658,744.2 L1660,742.7 L1660,741.3 L1662,739.8 L1662,744.4 L1664,749.1 L1664,741.9 L1666,734.6 L1666,727.3 L1668,733.9 L1668,740.6 L1670,747.2 L1670,742.4 L1672,737.6 L1672,732.8 L1674,736.7 L1674,740.6 L1676,744.5 L1676,741.6 L1678,738.7 L1678,743.9 L1680,749.0 L1680,745.4 L1682,741.7 L1682,738.1 L1684,742.5 L1684,735.5 L1686,728.5 L1686,732.3 L1688,736.0 L1688,739.8 L1690,743.5 L1690,742.4 L1692,741.3 L1692,740.2 L1694,742.6 L1694,744.9 L1696,747.1 L1696,749.4 L1698,732.4 L1698,744.9 L1700,741.8 L1700,738.8 L1702,735.8 L1702,732.8 L1704,736.3 L1704,739.7 L1706,743.1 L1706,746.4 L1708,739.8 L1708,733.4 L1710,741.2 L1710,748.9 L1712,746.6 L1712,744.3 L1714,742.0 L1714,745.8 L1716,749.5 L1716,747.2 L1718,745.0 L1718,742.8 L1720,740.6 L1720,743.3 L1722,745.9 L1722,748.6 L1724,744.5 L1724,740.4 L1726,742.2 L1726,744.0 L1728,745.8 L1728,738.0 L1730,749.9 L1730,747.3 L1732,744.6 L1732,742.0 L1734,739.4 L1734,742.1 L1736,744.7 L1736,747.4 L1738,739.6 L1738,741.2 L1740,742.9 L1740,744.5 L1742,746.2 L1742,743.9 L1744,741.5 L1744,739.1 L1746,742.6 L1746,746.2 L1748,744.1 L1748,741.9 L1750,744.5 L1750,747.1 L1752,749.7 L1752,747.2 L1754,744.6 L1754,741.9 L1756,739.3 L1756,741.0 L1758,742.6 L1758,744.3 L1760,730.8 L1760,735.4 L1762,740.0 L1762,744.7 L1764,742.9 L1764,741.2 L1766,739.4 L1766,748.1 L1768,742.1 L1768,736.0 L1770,729.9 L1770,736.1 L1772,742.6 L1772,748.6 L1774,743.0 L1774,738.0 L1776,749.9 L1776,745.3 L1778,741.3 L1778,746.6 L1780,751.4 L1780,744.6 L1782,747.4 L1782,750.1 L1784,752.4 L1784,754.6 L1786,754.6 L1786,754.8 L1788,755.2 L1788,755.7 L1790,757.3 L1790,758.7 L1792,759.9 L1792,760.8 L1794,761.0 L1794,761.6 L1796,762.1 L1796,762.1 L1798,762.1 L1798,762.1 L1796,762.1 L1796,762.1 L1794,762.6 L1794,763.2 L1792,763.3 L1792,764.2 L1790,765.4 L1790,766.9 L1788,768.7 L1788,769.2 L1786,769.5 L1786,769.6 L1784,769.6 L1784,771.9 L1782,774.5 L1782,777.3 L1780,780.5 L1780,772.6 L1778,778.0 L1778,783.9 L1776,779.2 L1776,773.9 L1774,787.3 L1774,781.5 L1772,775.1 L1772,781.8 L1770,789.0 L1770,796.0 L1768,789.1 L1768,782.2 L1766,775.4 L1766,785.3 L1764,783.2 L1764,781.2 L1762,779.2 L1762,784.5 L1760,789.8 L1760,795.0 L1758,779.7 L1758,781.6 L1756,783.5 L1756,785.4 L1754,782.4 L1754,779.4 L1752,776.4 L1752,773.5 L1750,776.5 L1750,779.5 L1748,782.4 L1748,780.0 L1746,777.5 L1746,781.6 L1744,785.6 L1744,782.9 L1742,780.2 L1742,777.5 L1740,779.4 L1740,781.3 L1738,783.2 L1738,785.1 L1736,776.1 L1736,779.2 L1734,782.2 L1734,785.3 L1732,782.3 L1732,779.3 L1730,776.3 L1730,773.3 L1728,786.9 L1728,778.0 L1726,780.0 L1726,782.1 L1724,784.1 L1724,779.5 L1722,774.8 L1722,777.8 L1720,780.9 L1720,783.9 L1718,781.4 L1718,778.9 L1716,776.3 L1716,773.8 L1714,778.0 L1714,782.3 L1712,779.7 L1712,777.1 L1710,774.5 L1710,783.2 L1708,792.1 L1708,784.8 L1706,777.3 L1706,781.1 L1704,784.9 L1704,788.8 L1702,792.8 L1702,789.4 L1700,786.0 L1700,782.5 L1698,779.0 L1698,793.3 L1696,773.9 L1696,776.5 L1694,779.1 L1694,781.7 L1692,784.3 L1692,783.1 L1690,781.9 L1690,780.6 L1688,784.8 L1688,789.1 L1686,793.4 L1686,797.7 L1684,789.7 L1684,781.7 L1682,786.7 L1682,782.6 L1680,778.5 L1680,774.3 L1678,780.2 L1678,786.1 L1676,782.8 L1676,779.4 L1674,783.9 L1674,788.3 L1672,792.8 L1672,787.3 L1670,781.8 L1670,776.4 L1668,784.0 L1668,791.5 L1666,799.0 L1666,790.7 L1664,782.4 L1664,774.2 L1662,779.5 L1662,784.8 L1660,783.1 L1660,781.5 L1658,779.9 L1658,792.7 L1656,789.3 L1656,786.1 L1654,782.9 L1654,779.7 L1652,785.5 L1652,791.2 L1650,785.6 L1650,780.0 L1648,774.5 L1648,779.7 L1646,784.9 L1646,790.0 L1644,795.0 L1644,784.4 L1642,774.0 L1642,781.3 L1640,788.5 L1640,779.6 L1638,782.3 L1638,779.6 L1636,776.9 L1636,774.3 L1634,779.0 L1634,783.8 L1632,782.1 L1632,780.5 L1630,778.8 L1630,777.2 L1628,781.0 L1628,784.8 L1626,788.5 L1626,792.3 L1624,778.8 L1624,783.0 L1622,787.2 L1622,791.4 L1620,785.7 L1620,780.0 L1618,774.3 L1618,776.6 L1616,779.0 L1616,781.3 L1614,783.7 L1614,782.2 L1612,780.6 L1612,781.7 L1610,782.9 L1610,784.0 L1608,785.1 L1608,783.0 L1606,780.9 L1606,778.7 L1604,782.2 L1604,785.6 L1602,789.1 L1602,785.4 L1600,781.7 L1600,777.9 L1598,781.3 L1598,784.6 L1596,787.9 L1596,791.3 L1594,787.1 L1594,782.9 L1592,778.7 L1592,774.6 L1590,782.2 L1590,779.3 L1588,776.5 L1588,780.6 L1586,784.7 L1586,779.0 L1584,773.4 L1584,792.6 L1582,783.1 L1582,773.9 L1580,777.5 L1580,781.1 L1578,784.6 L1578,782.7 L1576,780.8 L1576,779.0 L1574,777.2 L1574,779.6 L1572,782.1 L1572,784.5 L1570,782.4 L1570,780.3 L1568,778.1 L1568,776.0 L1566,784.7 L1566,780.7 L1564,776.6 L1564,781.3 L1562,786.0 L1562,790.8 L1560,779.3 L1560,780.2 L1558,781.2 L1558,782.1 L1556,780.6 L1556,779.0 L1554,777.4 L1554,779.6 L1552,781.7 L1552,783.9 L1550,781.7 L1550,779.5 L1548,777.2 L1548,774.9 L1546,794.2 L1546,788.9 L1544,783.5 L1544,778.0 L1542,779.2 L1542,780.4 L1540,781.7 L1540,782.9 L1538,781.4 L1538,779.8 L1536,778.2 L1536,792.6 L1534,783.8 L1534,775.0 L1532,778.8 L1532,782.6 L1530,786.5 L1530,784.6 L1528,782.7 L1528,780.8 L1526,778.9 L1526,783.3 L1524,787.7 L1524,792.1 L1522,774.5 L1522,777.7 L1520,780.9 L1520,784.1 L1518,787.3 L1518,784.6 L1516,781.9 L1516,779.2 L1514,784.3 L1514,789.5 L1512,782.0 L1512,774.5 L1510,779.2 L1510,784.0 L1508,788.8 L1508,781.0 L1506,773.2 L1506,778.1 L1504,783.0 L1504,788.0 L1502,776.7 L1502,780.7 L1500,784.7 L1500,779.0 L1498,780.7 L1498,782.3 L1496,784.0 L1496,779.2 L1494,774.3 L1494,778.9 L1492,783.6 L1492,788.3 L1490,783.5 L1490,778.6 L1488,799.4 L1488,792.1 L1486,784.3 L1486,776.5 L1484,784.8 L1484,793.2 L1482,786.1 L1482,778.9 L1480,794.6 L1480,789.6 L1478,784.5 L1478,779.4 L1476,788.0 L1476,796.7 L1474,786.2 L1474,775.7 L1472,779.9 L1472,784.1 L1470,788.4 L1470,792.6 L1468,789.6 L1468,786.7 L1466,783.7 L1466,780.7 L1464,786.6 L1464,792.5 L1462,789.4 L1462,786.3 L1460,783.3 L1460,780.2 L1458,786.5 L1458,792.7 L1456,798.9 L1456,788.4 L1454,778.1 L1454,782.8 L1452,787.3 L1452,791.8 L1450,785.9 L1450,780.0 L1448,792.1 L1448,788.0 L1446,784.0 L1446,780.0 L1444,781.3 L1444,782.5 L1442,783.7 L1442,784.9 L1440,779.3 L1440,780.3 L1438,781.3 L1438,782.2 L1436,783.2 L1436,778.5 L1434,780.9 L1434,783.3 L1432,785.6 L1432,783.9 L1430,782.2 L1430,780.6 L1428,779.0 L1428,780.5 L1426,782.1 L1426,783.6 L1424,785.0 L1424,776.1 L1422,778.2 L1422,780.3 L1420,782.4 L1420,784.4 L1418,781.0 L1418,777.6 L1416,785.7 L1416,780.5 L1414,775.3 L1414,776.8 L1412,778.3 L1412,779.9 L1410,781.4 L1410,780.5 L1408,779.6 L1408,781.4 L1406,783.2 L1406,785.1 L1404,781.7 L1404,778.2 L1402,780.0 L1402,781.8 L1400,780.8 L1400,779.9 L1398,783.1 L1398,786.3 L1396,789.7 L1396,793.1 L1394,788.8 L1394,784.4 L1392,779.9 L1392,782.7 L1390,785.4 L1390,782.7 L1388,779.9 L1388,777.1 L1386,774.2 L1386,778.6 L1384,782.9 L1384,787.2 L1382,782.9 L1382,778.7 L1380,774.4 L1380,783.8 L1378,793.2 L1378,788.4 L1376,783.5 L1376,778.7 L1374,773.9 L1374,794.7 L1372,775.5 L1372,778.0 L1370,780.5 L1370,783.0 L1368,774.9 L1368,790.2 L1366,786.8 L1366,783.3 L1364,779.9 L1364,785.1 L1362,782.5 L1362,779.9 L1360,777.4 L1360,781.3 L1358,785.1 L1358,788.9 L1356,792.8 L1356,787.4 L1354,782.1 L1354,776.8 L1352,782.1 L1352,787.4 L1350,792.7 L1350,773.8 L1348,791.1 L1348,773.9 L1346,787.2 L1346,779.4 L1344,780.7 L1344,782.0 L1342,783.3 L1342,780.1 L1340,776.9 L1340,785.0 L1338,782.1 L1338,779.3 L1336,776.4 L1336,773.5 L1334,790.1 L1334,783.1 L1332,776.0 L1332,792.8 L1330,787.5 L1330,780.5 L1328,775.6 L1328,783.7 L1326,791.8 L1326,784.4 L1324,777.0 L1324,780.2 L1322,783.5 L1322,786.7 L1320,790.0 L1320,785.2 L1318,780.5 L1318,775.7 L1316,777.7 L1316,779.7 L1314,781.7 L1314,779.1 L1312,776.5 L1312,773.9 L1310,776.4 L1310,778.9 L1308,781.5 L1308,776.8 L1306,782.3 L1306,779.1 L1304,776.0 L1304,772.8 L1302,775.7 L1302,778.6 L1300,781.5 L1300,784.5 L1298,781.1 L1298,777.7 L1296,778.7 L1296,779.8 L1294,780.8 L1294,781.8 L1292,777.1 L1292,780.7 L1290,784.3 L1290,787.9 L1288,783.9 L1288,779.9 L1286,775.9 L1286,771.8 L1284,775.0 L1284,778.1 L1282,781.2 L1282,778.9 L1280,776.6 L1280,774.2 L1278,771.9 L1278,775.0 L1276,778.2 L1276,781.5 L1274,779.9 L1274,778.3 L1272,782.5 L1272,778.0 L1270,781.5 L1270,784.9 L1268,782.9 L1268,780.9 L1266,778.9 L1266,776.9 L1264,787.3 L1264,783.6 L1262,780.0 L1262,776.4 L1260,772.7 L1260,790.2 L1258,785.5 L1258,780.8 L1256,776.1 L1256,771.4 L1254,777.3 L1254,783.2 L1252,781.3 L1252,779.5 L1250,777.6 L1250,775.7 L1248,778.9 L1248,782.1 L1246,785.3 L1246,788.5 L1244,783.1 L1244,777.7 L1242,772.3 L1242,784.7 L1240,782.5 L1240,780.3 L1238,778.2 L1238,782.8 L1236,777.0 L1236,771.2 L1234,779.2 L1234,787.2 L1232,783.3 L1232,779.3 L1230,775.4 L1230,771.5 L1228,776.4 L1228,781.2 L1226,786.0 L1226,781.4 L1224,776.7 L1224,772.1 L1222,790.2 L1222,785.6 L1220,781.0 L1220,776.5 L1218,790.2 L1218,785.2 L1216,780.2 L1216,775.2 L1214,783.6 L1214,781.3 L1212,779.1 L1212,776.9 L1210,774.6 L1210,779.1 L1208,783.6 L1208,770.8 L1206,775.4 L1206,779.9 L1204,784.4 L1204,788.9 L1202,780.1 L1202,771.3 L1200,773.1 L1200,774.9 L1198,776.7 L1198,778.4 L1196,774.8 L1196,779.1 L1194,783.5 L1194,773.3 L1192,780.7 L1192,788.2 L1190,783.0 L1190,777.8 L1188,772.6 L1188,773.9 L1186,775.3 L1186,776.6 L1184,778.0 L1184,777.0 L1182,776.1 L1182,776.5 L1180,776.9 L1180,777.3 L1178,777.7 L1178,776.6 L1176,775.6 L1176,774.5 L1174,768.5 L1174,773.5 L1172,778.6 L1172,769.7 L1170,770.7 L1170,771.7 L1168,772.6 L1168,773.6 L1166,771.8 L1166,770.1 L1164,768.3 L1164,766.5 L1162,769.1 L1162,771.7 L1160,774.4 L1160,777.0 L1158,774.6 L1158,772.2 L1156,769.8 L1156,767.5 L1154,773.9 L1154,771.8 L1152,769.7 L1152,767.5 L1150,770.7 L1150,773.9 L1148,772.6 L1148,771.2 L1146,769.8 L1146,768.4 L1144,770.3 L1144,772.2 L1142,774.1 L1142,768.5 L1140,770.5 L1140,772.4 L1138,774.3 L1138,771.8 L1136,769.2 L1136,770.6 L1134,771.9 L1134,773.3 L1132,770.5 L1132,767.6 L1130,769.0 L1130,770.5 L1128,771.9 L1128,773.4 L1126,772.1 L1126,770.9 L1124,769.6 L1124,779.0 L1122,773.7 L1122,768.3 L1120,771.1 L1120,773.9 L1118,776.8 L1118,769.1 L1116,778.2 L1116,776.4 L1114,774.7 L1114,772.9 L1112,771.2 L1112,772.9 L1110,774.7 L1110,767.4 L1108,779.6 L1108,776.5 L1106,773.4 L1106,770.2 L1104,773.8 L1104,772.2 L1102,770.6 L1102,769.0 L1100,767.5 L1100,774.6 L1098,780.8 Z" fill="#7070e0"/></g></svg>
<svg class="a" style="left:80px;top:796px;" width="1837" height="126" viewBox="0 0 1837 126"><g transform="translate(-80,-796)"><rect x="1784" y="796" width="21" height="126" fill="#2ca3b8"/><path d="M1784.9 796 L1785.5 812 L1786.1 796 Z" fill="#0a2a30"/><path d="M1784.9 922 L1785.5 906 L1786.1 922 Z" fill="#0a2a30"/><path d="M1786.9 796 L1787.5 812 L1788.1 796 Z" fill="#0a2a30"/><path d="M1786.9 922 L1787.5 906 L1788.1 922 Z" fill="#0a2a30"/><path d="M1788.4 796 L1789 812 L1789.6 796 Z" fill="#0a2a30"/><path d="M1788.4 922 L1789 906 L1789.6 922 Z" fill="#0a2a30"/><path d="M1790.4 796 L1791 812 L1791.6 796 Z" fill="#0a2a30"/><path d="M1790.4 922 L1791 906 L1791.6 922 Z" fill="#0a2a30"/><path d="M1792.4 796 L1793 812 L1793.6 796 Z" fill="#0a2a30"/><path d="M1792.4 922 L1793 906 L1793.6 922 Z" fill="#0a2a30"/><path d="M1794.9 796 L1795.5 812 L1796.1 796 Z" fill="#0a2a30"/><path d="M1794.9 922 L1795.5 906 L1796.1 922 Z" fill="#0a2a30"/><path d="M1797.4 796 L1798 812 L1798.6 796 Z" fill="#0a2a30"/><path d="M1797.4 922 L1798 906 L1798.6 922 Z" fill="#0a2a30"/><path d="M1785.1 859 L1786 833 L1786.9 859 L1786 874.6 Z" fill="#061a1e"/><path d="M1787.6 859 L1788.5 827 L1789.4 859 L1788.5 878.2 Z" fill="#061a1e"/><path d="M1790.1 859 L1791 835 L1791.9 859 L1791 873.4 Z" fill="#061a1e"/><path d="M1792.6 859 L1793.5 829 L1794.4 859 L1793.5 877.0 Z" fill="#061a1e"/><path d="M1795.1 859 L1796 839 L1796.9 859 L1796 871.0 Z" fill="#061a1e"/><path d="M1797.6 859 L1798.5 845 L1799.4 859 L1798.5 867.4 Z" fill="#061a1e"/></g></svg>
<div class="a" style="left:80px;top:569px;width:1837px;height:1px;background:rgba(255,255,255,0.78);"></div>
<div class="a" style="left:80px;top:633px;width:1837px;height:1px;background:rgba(255,255,255,0.78);"></div>
<div class="a" style="left:80px;top:698px;width:1837px;height:1px;background:rgba(255,255,255,0.78);"></div>
<div class="a" style="left:80px;top:762px;width:1837px;height:1px;background:rgba(255,255,255,0.78);"></div>
<div class="a" style="left:80px;top:827px;width:1837px;height:1px;background:rgba(255,255,255,0.78);"></div>
<div class="a" style="left:80px;top:890px;width:1837px;height:1px;background:rgba(255,255,255,0.78);"></div>
<div class="t" style="left:85px;top:649px;font-size:12.2px;line-height:14px;color:#fff;font-weight:normal;letter-spacing:-0.5px;">03:52.872</div>
<div class="a" style="left:140px;top:647px;width:1px;height:15px;background:#fff;"></div>
<div class="t" style="left:146px;top:649px;font-size:12.2px;line-height:14px;color:#fff;font-weight:normal;letter-spacing:0.1px;">Rhythm of the night</div>
<div class="t" style="left:85px;top:778px;font-size:12.2px;line-height:14px;color:#fff;font-weight:normal;letter-spacing:-0.5px;">03:48.306</div>
<div class="a" style="left:140px;top:776px;width:1px;height:15px;background:#fff;"></div>
<div class="t" style="left:146px;top:778px;font-size:12.2px;line-height:14px;color:#fff;font-weight:normal;letter-spacing:0.1px;">Solsbury Hill</div>
<div class="t" style="left:85px;top:907px;font-size:12.2px;line-height:14px;color:#fff;font-weight:normal;letter-spacing:-0.5px;">00:07.248</div>
<div class="a" style="left:140px;top:905px;width:1px;height:15px;background:#fff;"></div>
<div class="t" style="left:146px;top:907px;font-size:12.2px;line-height:14px;color:#fff;font-weight:normal;letter-spacing:0.1px;">VoiceOver-Element</div>
<svg class="a" style="left:0px;top:0px;pointer-events:none;" width="1920" height="1080" viewBox="0 0 1920 1080"><rect x="390" y="553" width="704" height="2" fill="#ff6a00"/><rect x="385" y="560" width="2" height="82" fill="#f4f4f4"/><path d="M382 548 H390 V558 L386 564 L382 558 Z" fill="#f4f4f4"/><path d="M378.5 644.5 L381.5 640.5 H390.5 L393.5 644.5 L390.5 648.5 H381.5 Z" fill="#f4f4f4"/><path d="M386 649 L397 656 L386 663 Z" fill="#f4f4f4"/><path d="M435 620.5 L439 626 L435 631.5 L431 626 Z" fill="#d8c000"/><rect x="1097" y="560" width="2" height="82" fill="#ff6a00"/><path d="M1094 548 H1102 V558 L1098 564 L1094 558 Z" fill="#00dcea"/><path d="M1098 596.5 L1102 602 L1098 607.5 L1094 602 Z" fill="#d8c000"/><path d="M1098 620.5 L1102 626 L1098 631.5 L1094 626 Z" fill="#d8c000"/><path d="M1090.5 645 L1093.5 641.0 H1102.5 L1105.5 645 L1102.5 649.0 H1093.5 Z" fill="#00dcea"/><path d="M1099 649 L1087.5 652.5 L1099 663 Z" fill="#ff6a00"/><rect x="1102" y="682" width="666" height="2" fill="#ff6a00"/><rect x="1097" y="690" width="2" height="82" fill="#ff6a00"/><path d="M1094 677 H1102 V687 L1098 693 L1094 687 Z" fill="#00dcea"/><path d="M1183 748.5 L1187 754 L1183 759.5 L1179 754 Z" fill="#d8c000"/><path d="M1090.5 774 L1093.5 770.0 H1102.5 L1105.5 774 L1102.5 778.0 H1093.5 Z" fill="#00dcea"/><path d="M1098 777 L1110 784 L1098 792 Z" fill="#ff6a00"/><path d="M1771 690 L1795 772" stroke="#ff6a00" stroke-width="2"/><path d="M1767 677 H1775 V687 L1771 693 L1767 687 Z" fill="#00dcea"/><path d="M1788.5 774 L1791.5 770.0 H1800.5 L1803.5 774 L1800.5 778.0 H1791.5 Z" fill="#00dcea"/><path d="M1796 778 L1785 784 L1796 792 Z" fill="#ff6a00"/><rect x="1786" y="811" width="17" height="2" fill="#ff6a00"/><rect x="1782" y="820" width="2" height="99" fill="#ff6a00"/><rect x="1805" y="820" width="2" height="86" fill="#f4f4f4"/><path d="M1779 806 H1787 V816 L1783 822 L1779 816 Z" fill="#00dcea"/><path d="M1802 806 H1810 V816 L1806 822 L1802 816 Z" fill="#f4f4f4"/><path d="M1806 853.5 L1810 859 L1806 864.5 L1802 859 Z" fill="#d8c000"/><path d="M1806 876.5 L1810 882 L1806 887.5 L1802 882 Z" fill="#d8c000"/><path d="M1775.5 902 L1778.5 898.0 H1787.5 L1790.5 902 L1787.5 906.0 H1778.5 Z" fill="#00dcea"/><path d="M1798.5 902 L1801.5 898.0 H1810.5 L1813.5 902 L1810.5 906.0 H1801.5 Z" fill="#f4f4f4"/><path d="M1783 906 L1794 913 L1783 921 Z" fill="#ff6a00"/><path d="M1806 906 L1795 913 L1806 921 Z" fill="#f4f4f4"/></svg>
<div class="a" style="left:1078px;top:516px;width:3px;height:406px;background:#ff0000;"></div>
<svg class="a" style="left:0px;top:0px;" width="100" height="1080" viewBox="0 0 100 1080"><circle cx="61" cy="565" r="11.2" fill="none" stroke="#a8a8a8" stroke-width="1.5"/><rect x="54" y="561.2" width="14" height="5" fill="#a8a8a8"/><rect x="58.5" y="568" width="5" height="2.5" fill="none" stroke="#a8a8a8" stroke-width="1"/><circle cx="61" cy="593" r="11.2" fill="none" stroke="#a8a8a8" stroke-width="1.5"/><path d="M56.5 593 H65.5" stroke="#a8a8a8" stroke-width="2"/><circle cx="61" cy="621" r="11.2" fill="none" stroke="#a8a8a8" stroke-width="1.5"/><path d="M57 617.5 H65 M59.5 616 H62.5" stroke="#a8a8a8" stroke-width="1.4"/><path d="M57.8 618.5 L58.4 626 H63.6 L64.2 618.5 Z" fill="#a8a8a8"/><path d="M60 619.5 V625 M62 619.5 V625" stroke="#555" stroke-width="0.6"/><circle cx="61" cy="650" r="11.2" fill="none" stroke="#ffffff" stroke-width="1.5"/><path d="M54 645.5 H56 L58.5 654 H63.5 L66 645.5 H68" fill="none" stroke="#ffffff" stroke-width="1.6"/><circle cx="61" cy="694" r="11.2" fill="none" stroke="#ffffff" stroke-width="1.5"/><rect x="54" y="690.2" width="14" height="5" fill="#ffffff"/><rect x="58.5" y="697" width="5" height="2.5" fill="none" stroke="#ffffff" stroke-width="1"/><circle cx="61" cy="722" r="11.2" fill="none" stroke="#ffffff" stroke-width="1.5"/><path d="M56.5 722 H65.5" stroke="#ffffff" stroke-width="2"/><circle cx="61" cy="750" r="11.2" fill="none" stroke="#ffffff" stroke-width="1.5"/><path d="M57 746.5 H65 M59.5 745 H62.5" stroke="#ffffff" stroke-width="1.4"/><path d="M57.8 747.5 L58.4 755 H63.6 L64.2 747.5 Z" fill="#ffffff"/><path d="M60 748.5 V754 M62 748.5 V754" stroke="#555" stroke-width="0.6"/><circle cx="61" cy="779" r="11.2" fill="none" stroke="#ffffff" stroke-width="1.5"/><path d="M54 774.5 H56 L58.5 783 H63.5 L66 774.5 H68" fill="none" stroke="#ffffff" stroke-width="1.6"/><circle cx="61" cy="823" r="11.2" fill="none" stroke="#a8a8a8" stroke-width="1.5"/><rect x="54.5" y="819" width="13" height="4.5" fill="none" stroke="#a8a8a8" stroke-width="1.2"/><rect x="58" y="825.5" width="6" height="3" fill="#a8a8a8"/><circle cx="61" cy="851" r="11.2" fill="none" stroke="#a8a8a8" stroke-width="1.5"/><path d="M56.5 851 H65.5" stroke="#a8a8a8" stroke-width="2"/><circle cx="61" cy="879" r="11.2" fill="none" stroke="#a8a8a8" stroke-width="1.5"/><path d="M57 875.5 H65 M59.5 874 H62.5" stroke="#a8a8a8" stroke-width="1.4"/><path d="M57.8 876.5 L58.4 884 H63.6 L64.2 876.5 Z" fill="#a8a8a8"/><path d="M60 877.5 V883 M62 877.5 V883" stroke="#555" stroke-width="0.6"/><circle cx="61" cy="908" r="11.2" fill="none" stroke="#ffffff" stroke-width="1.5"/><path d="M54 903.5 H56 L58.5 912 H63.5 L66 903.5 H68" fill="none" stroke="#ffffff" stroke-width="1.6"/><circle cx="27" cy="593" r="11.2" fill="none" stroke="#ffffff" stroke-width="1.5"/><path d="M22.5 593 H31.5 M27 588.5 V597.5" stroke="#ffffff" stroke-width="2"/><circle cx="27" cy="650" r="11.2" fill="none" stroke="#a8a8a8" stroke-width="1.5"/><path d="M21.5 644 H26 V656 H21.5 M21.5 650 H30" fill="none" stroke="#a8a8a8" stroke-width="1.3"/><path d="M29 646.5 L33.5 650 L29 653.5 Z" fill="#a8a8a8"/><circle cx="27" cy="722" r="11.2" fill="none" stroke="#ffffff" stroke-width="1.5"/><path d="M22.5 722 H31.5 M27 717.5 V726.5" stroke="#ffffff" stroke-width="2"/><circle cx="27" cy="779" r="11.2" fill="none" stroke="#a8a8a8" stroke-width="1.5"/><path d="M21.5 773 H26 V785 H21.5 M21.5 779 H30" fill="none" stroke="#a8a8a8" stroke-width="1.3"/><path d="M29 775.5 L33.5 779 L29 782.5 Z" fill="#a8a8a8"/><circle cx="27" cy="851" r="11.2" fill="none" stroke="#ffffff" stroke-width="1.5"/><path d="M22.5 851 H31.5 M27 846.5 V855.5" stroke="#ffffff" stroke-width="2"/><circle cx="27" cy="879" r="11.2" fill="none" stroke="#ffffff" stroke-width="1.5"/><path d="M20 879 H27 M23.5 875.5 V882.5" stroke="#ffffff" stroke-width="1.8"/><path d="M28 877 H34 L31 881 Z" fill="#ffffff"/><circle cx="27" cy="908" r="11.2" fill="none" stroke="#ffffff" stroke-width="1.5"/><path d="M21.5 902 H26 V914 H21.5 M21.5 908 H30" fill="none" stroke="#ffffff" stroke-width="1.3"/><path d="M29 904.5 L33.5 908 L29 911.5 Z" fill="#ffffff"/></svg>
<div class="a" style="left:10px;top:925px;width:1873px;height:39px;background:#555555;"></div>
<div class="a" style="left:1885px;top:925px;width:32px;height:130px;background:#555555;"></div>
<div class="a" style="left:10px;top:967px;width:1873px;height:20px;background:#555555;"></div>
<div class="a" style="left:10px;top:989px;width:1873px;height:66px;background:#555555;"></div>
<svg class="a" style="left:0px;top:0px;" width="1920" height="1080" viewBox="0 0 1920 1080"><circle cx="40" cy="945" r="14.5" fill="#720808" stroke="#e8e8e8" stroke-width="1.8"/><circle cx="80" cy="945" r="14.3" fill="none" stroke="#ffffff" stroke-width="1.6"/><path d="M76 938 L87 945 L76 952 Z" fill="#e8e8e8"/><circle cx="120" cy="945" r="14.3" fill="none" stroke="#7c7c7c" stroke-width="1.6"/><rect x="115" y="940" width="10" height="10" fill="#7c7c7c"/><circle cx="160" cy="945" r="14.3" fill="none" stroke="#ffffff" stroke-width="1.6"/><path d="M164.8 940 A10.2 5.1 0 1 1 156.3 940.2" fill="none" stroke="#fff" stroke-width="2.1"/><path d="M157.5 935.5 L163.5 940.5 L157.5 944 Z" fill="#fff"/><path d="M148 935.6 L173 950.6 M146.8 941.8 L169.5 955.3" stroke="#555" stroke-width="2.6"/><path d="M148 935.6 L173 950.6 M146.8 941.8 L169.5 955.3" stroke="#fff" stroke-width="1.4"/><circle cx="200" cy="945" r="14.3" fill="none" stroke="#ffffff" stroke-width="1.6"/><path d="M194 947 V937 L201.6 935.2 V945.5" fill="none" stroke="#fff" stroke-width="1.3"/><ellipse cx="192.6" cy="947.3" rx="1.9" ry="1.6" fill="#fff"/><ellipse cx="200.2" cy="945.8" rx="1.9" ry="1.6" fill="#fff"/><path d="M201.3 952 H207.5 M204.4 948.8 V955" stroke="#fff" stroke-width="1.1"/><circle cx="265" cy="945" r="14.3" fill="none" stroke="#7c7c7c" stroke-width="1.6"/><path d="M259 942 Q263 936 268 939 Q272 942 269 949" fill="none" stroke="#7c7c7c" stroke-width="2"/><path d="M257 937 L258 945 L264 942 Z" fill="#7c7c7c"/><circle cx="305" cy="945" r="14.3" fill="none" stroke="#7c7c7c" stroke-width="1.6"/><path d="M311 942 Q307 936 302 939 Q298 942 301 949" fill="none" stroke="#7c7c7c" stroke-width="2"/><path d="M313 937 L312 945 L306 942 Z" fill="#7c7c7c"/><circle cx="370" cy="945" r="14.3" fill="none" stroke="#ffffff" stroke-width="1.6"/><circle cx="372" cy="942" r="6" fill="none" stroke="#fff" stroke-width="1.8"/><path d="M367.5 946.5 L361 953" stroke="#fff" stroke-width="2.2"/><path d="M369 942 H375 M372 939 V945" stroke="#fff" stroke-width="1.5"/><circle cx="410" cy="945" r="14.3" fill="none" stroke="#7c7c7c" stroke-width="1.6"/><circle cx="412" cy="942" r="6" fill="none" stroke="#7c7c7c" stroke-width="1.8"/><path d="M407.5 946.5 L401 953" stroke="#7c7c7c" stroke-width="2.2"/><path d="M409 942 H415" stroke="#7c7c7c" stroke-width="1.5"/><circle cx="450" cy="945" r="14.3" fill="none" stroke="#ffffff" stroke-width="1.6"/><path d="M442.5 938 V952" stroke="#fff" stroke-width="1.6"/><path d="M445 945 L451 939 V942.5 H459 V947.5 H451 V951 Z" fill="#fff"/><circle cx="490" cy="945" r="14.3" fill="none" stroke="#ffffff" stroke-width="1.6"/><path d="M497.5 938 V952" stroke="#fff" stroke-width="1.6"/><path d="M495 945 L489 939 V942.5 H481 V947.5 H489 V951 Z" fill="#fff"/><circle cx="530" cy="945" r="14.3" fill="none" stroke="#ffffff" stroke-width="1.6"/><path d="M523 937 H526 M524.5 937 V953 M523 953 H526" stroke="#fff" stroke-width="1.3"/><circle cx="534" cy="942" r="4.5" fill="none" stroke="#fff" stroke-width="1.6"/><path d="M531 945.5 L527 950" stroke="#fff" stroke-width="2"/><circle cx="570" cy="945" r="14.3" fill="none" stroke="#ffffff" stroke-width="1.6"/><circle cx="572" cy="940" r="4.5" fill="none" stroke="#fff" stroke-width="1.6"/><path d="M569 943.5 L565 948" stroke="#fff" stroke-width="2"/><path d="M563 952 H577" stroke="#fff" stroke-width="1.2"/><path d="M563 952 L566 950 V954 Z M577 952 L574 950 V954 Z" fill="#fff"/><circle cx="610" cy="945" r="14.3" fill="none" stroke="#ffffff" stroke-width="1.6"/><path d="M603 937 L610 946 L617 937 M603 942 L610 951 L617 942" fill="none" stroke="#fff" stroke-width="1.5"/><circle cx="650" cy="945" r="14.3" fill="none" stroke="#ffffff" stroke-width="1.6"/><path d="M653 940.5 H649.5 A5.5 5.5 0 0 0 649.5 951.5 H656 V948 H650 A2 2 0 0 1 650 944 H653 Z" fill="#fff"/><rect x="653.5" y="937.5" width="4" height="4" fill="#fff"/><path d="M639 938.6 L661.5 952.3" stroke="#fff" stroke-width="5.2"/><path d="M639 938.6 L661.5 952.3" stroke="#555" stroke-width="2"/><circle cx="690" cy="945" r="14.3" fill="none" stroke="#ffffff" stroke-width="1.6"/><path d="M682 936.3 H691 V953.2 H682 M682 945 H699" fill="none" stroke="#fff" stroke-width="1.5"/><path d="M697 941.3 L702.3 945 L697 948.7 Z" fill="#fff"/><path d="M747 943 H750 L755 940 V950 L750 947 H747 Z" fill="#fff"/><rect x="765" y="941" width="59" height="8" fill="#1e8fc6"/><rect x="831" y="941" width="24" height="8" fill="#fff"/><rect x="823" y="937" width="8" height="16" fill="#000"/><path d="M867 943 H870 L875 940 V950 L870 947 H867 Z" fill="#fff"/><path d="M877 942 Q879 945 877 948 M880 940 Q883 945 880 950" fill="none" stroke="#fff" stroke-width="1"/><circle cx="940" cy="945" r="14.3" fill="none" stroke="#7c7c7c" stroke-width="1.6"/><path d="M933 938 H945 L947 940 V952 H933 Z" fill="#7c7c7c"/><rect x="936" y="938" width="7" height="4" fill="#555"/><rect x="937" y="946" width="6" height="6" fill="#555"/><rect x="939" y="948" width="2" height="4" fill="#7c7c7c"/><circle cx="980" cy="945" r="14.3" fill="none" stroke="#ffffff" stroke-width="1.6"/><circle cx="980" cy="936" r="1.8" fill="#fff"/><circle cx="973" cy="941" r="1.6" fill="#fff"/><circle cx="987" cy="941" r="1.6" fill="#fff"/><path d="M973 941 L980 936 L987 941" fill="none" stroke="#fff" stroke-width="1"/><rect x="975" y="944" width="10" height="2" fill="#fff"/><path d="M976 946 L977 955 H983 L984 946 Z" fill="#fff"/><path d="M978.5 947 V954 M981.5 947 V954" stroke="#555" stroke-width="0.8"/><circle cx="1020" cy="945" r="15" fill="#7a7a7a"/><path d="M1014 939 L1026 951 M1026 939 L1014 951" stroke="#555" stroke-width="3.2"/><circle cx="1060" cy="945" r="14.3" fill="none" stroke="#ffffff" stroke-width="1.6"/><path d="M1052 945 L1058 939 V943 H1068 V947 H1058 V951 Z" fill="#fff" stroke="#fff" stroke-width="0.8" stroke-linejoin="round"/><circle cx="1100" cy="945" r="14.3" fill="none" stroke="#ffffff" stroke-width="1.6"/><path d="M1108 945 L1102 939 V943 H1092 V947 H1102 V951 Z" fill="#fff" stroke="#fff" stroke-width="0.8" stroke-linejoin="round"/><circle cx="1165" cy="945" r="14.3" fill="none" stroke="#7c7c7c" stroke-width="1.6"/><text x="1165" y="951.5" font-size="15" font-weight="bold" text-anchor="middle" fill="#7c7c7c" font-family="Liberation Sans" letter-spacing="-1">VT</text><circle cx="1870.5" cy="952" r="8" fill="none" stroke="#e0e0e0" stroke-width="1.3"/><circle cx="1870.5" cy="947.5" r="1.2" fill="#e0e0e0"/><path d="M1868.5 950 H1871 V956 M1868 956 H1873.5" fill="none" stroke="#e0e0e0" stroke-width="1.6"/><path d="M22 972 L29 977 L22 982 Z" fill="#000"/><path d="M18 998 H28 L23 1004 Z" fill="#000"/><rect x="1891" y="931.0" width="10" height="5.3" fill="#a33028"/><rect x="1902" y="931.0" width="10" height="5.3" fill="#a33028"/><rect x="1891" y="938.3" width="10" height="5.3" fill="#a33028"/><rect x="1902" y="938.3" width="10" height="5.3" fill="#a33028"/><rect x="1891" y="945.5" width="10" height="5.3" fill="#b0802c"/><rect x="1902" y="945.5" width="10" height="5.3" fill="#b0802c"/><rect x="1891" y="952.8" width="10" height="5.3" fill="#b0802c"/><rect x="1902" y="952.8" width="10" height="5.3" fill="#b0802c"/><rect x="1891" y="960.0" width="10" height="5.3" fill="#b0802c"/><rect x="1902" y="960.0" width="10" height="5.3" fill="#b0802c"/><rect x="1891" y="967.3" width="10" height="5.3" fill="#b0802c"/><rect x="1902" y="967.3" width="10" height="5.3" fill="#b0802c"/><rect x="1891" y="974.6" width="10" height="5.3" fill="#5a8030"/><rect x="1902" y="974.6" width="10" height="5.3" fill="#5a8030"/><rect x="1891" y="981.8" width="10" height="5.3" fill="#5a8030"/><rect x="1902" y="981.8" width="10" height="5.3" fill="#5a8030"/><rect x="1891" y="989.1" width="10" height="5.3" fill="#5a8030"/><rect x="1902" y="989.1" width="10" height="5.3" fill="#5a8030"/><rect x="1891" y="996.3" width="10" height="5.3" fill="#5a8030"/><rect x="1902" y="996.3" width="10" height="5.3" fill="#5a8030"/><rect x="1891" y="1003.6" width="10" height="5.3" fill="#5a8030"/><rect x="1902" y="1003.6" width="10" height="5.3" fill="#5a8030"/><rect x="1891" y="1010.9" width="10" height="5.3" fill="#5a8030"/><rect x="1902" y="1010.9" width="10" height="5.3" fill="#5a8030"/><rect x="1891" y="1018.1" width="10" height="5.3" fill="#5a8030"/><rect x="1902" y="1018.1" width="10" height="5.3" fill="#5a8030"/><rect x="1891" y="1025.4" width="10" height="5.3" fill="#5a8030"/><rect x="1902" y="1025.4" width="10" height="5.3" fill="#5a8030"/><rect x="1891" y="1032.6" width="10" height="5.3" fill="#5a8030"/><rect x="1902" y="1032.6" width="10" height="5.3" fill="#5a8030"/><text x="1901" y="1051" font-size="12" text-anchor="middle" fill="#fff" font-family="Liberation Sans">Vol</text></svg>
<svg class="a" style="left:0px;top:0px;" width="1920" height="1080" viewBox="0 0 1920 1080"><rect x="36.5" y="994.5" width="1841" height="56" fill="#000" stroke="#e0e0e0" stroke-width="1"/><rect x="38" y="996" width="48" height="34" fill="#555555"/><rect x="88" y="996" width="18" height="34" fill="#555555"/><rect x="108" y="996" width="18" height="34" fill="#555555"/><rect x="128" y="996" width="45" height="34" fill="#c0446e"/><rect x="175" y="996" width="43" height="34" fill="#7070e0"/><rect x="220" y="996" width="18" height="34" fill="#2aa3b9"/><text x="229.0" y="1019" font-size="13" text-anchor="middle" fill="#111" font-family="Liberation Sans">T</text><rect x="240" y="996" width="35" height="34" fill="#555555"/><rect x="277" y="996" width="46" height="34" fill="#555555"/><rect x="325" y="996" width="46" height="34" fill="#555555"/><rect x="373" y="996" width="37" height="34" fill="#555555"/><rect x="412" y="996" width="18" height="34" fill="#555555"/><rect x="432" y="996" width="18" height="34" fill="#555555"/><rect x="452" y="996" width="25" height="34" fill="#555555"/><rect x="479" y="996" width="38" height="34" fill="#555555"/><rect x="519" y="996" width="42" height="34" fill="#555555"/><rect x="563" y="996" width="18" height="34" fill="#c0c0c4"/><text x="572.0" y="1019" font-size="13" text-anchor="middle" fill="#111" font-family="Liberation Sans">T</text><rect x="583" y="996" width="39" height="34" fill="#555555"/><rect x="624" y="996" width="32" height="34" fill="#555555"/><rect x="658" y="996" width="40" height="34" fill="#555555"/><rect x="700" y="996" width="18" height="34" fill="#c0c0c4"/><text x="709.0" y="1019" font-size="13" text-anchor="middle" fill="#111" font-family="Liberation Sans">T</text><rect x="720" y="996" width="32" height="34" fill="#555555"/><rect x="754" y="996" width="18" height="34" fill="#555555"/><rect x="774" y="996" width="18" height="34" fill="#555555"/><rect x="794" y="996" width="48" height="34" fill="#555555"/><rect x="844" y="996" width="48" height="34" fill="#555555"/><rect x="894" y="996" width="18" height="34" fill="#555555"/><rect x="914" y="996" width="48" height="34" fill="#555555"/><rect x="964" y="996" width="18" height="34" fill="#555555"/><rect x="984" y="996" width="18" height="34" fill="#555555"/><rect x="1004" y="996" width="36" height="34" fill="#555555"/><rect x="1042" y="996" width="38" height="34" fill="#555555"/><rect x="1082" y="996" width="18" height="34" fill="#c0c0c4"/><text x="1091.0" y="1019" font-size="13" text-anchor="middle" fill="#111" font-family="Liberation Sans">T</text><rect x="1102" y="996" width="34" height="34" fill="#555555"/><rect x="1138" y="996" width="33" height="34" fill="#555555"/><rect x="1173" y="996" width="45" height="34" fill="#555555"/><rect x="1220" y="996" width="37" height="34" fill="#555555"/><rect x="1259" y="996" width="18" height="34" fill="#555555"/><rect x="1279" y="996" width="25" height="34" fill="#555555"/><rect x="1306" y="996" width="42" height="34" fill="#555555"/><rect x="1350" y="996" width="48" height="34" fill="#555555"/><rect x="1400" y="996" width="18" height="34" fill="#c0c0c4"/><text x="1409.0" y="1019" font-size="13" text-anchor="middle" fill="#111" font-family="Liberation Sans">T</text><rect x="1420" y="996" width="40" height="34" fill="#555555"/><rect x="1462" y="996" width="47" height="34" fill="#555555"/><rect x="1511" y="996" width="45" height="34" fill="#555555"/><rect x="1558" y="996" width="41" height="34" fill="#555555"/><rect x="1601" y="996" width="18" height="34" fill="#555555"/><rect x="1621" y="996" width="17" height="34" fill="#555555"/><rect x="1641" y="996" width="45" height="34" fill="#555555"/><rect x="1688" y="996" width="48" height="34" fill="#555555"/><rect x="1738" y="996" width="18" height="34" fill="#555555"/><rect x="1758" y="996" width="47" height="34" fill="#555555"/><rect x="1808" y="996" width="17" height="34" fill="#555555"/><rect x="1828" y="996" width="17" height="34" fill="#555555"/><rect x="1848" y="996" width="29" height="34" fill="#555555"/><rect x="55" y="1036" width="951" height="9" fill="#d4d4d4"/><path d="M49 1036.5 L44 1040.5 L49 1044.5 Z" fill="#e0e0e0"/><path d="M1865 1036.5 L1870 1040.5 L1865 1044.5 Z" fill="#e0e0e0"/></svg>
<div class="a" style="left:0px;top:1058px;width:1920px;height:22px;background:#e0e0e0;"></div>
<div class="t" style="left:6px;top:1064px;font-size:12px;line-height:14px;color:#111;font-weight:normal;letter-spacing:-0.55px;">User: NRA</div>
<div class="t" style="left:76px;top:1064px;font-size:12px;line-height:14px;color:#111;font-weight:normal;letter-spacing:-0.1px;">Pending operations: 0</div>
<div class="t" style="left:210px;top:1064px;font-size:12px;line-height:14px;color:#111;font-weight:normal;letter-spacing:-0.3px;">State: Idle</div>
</body></html>
